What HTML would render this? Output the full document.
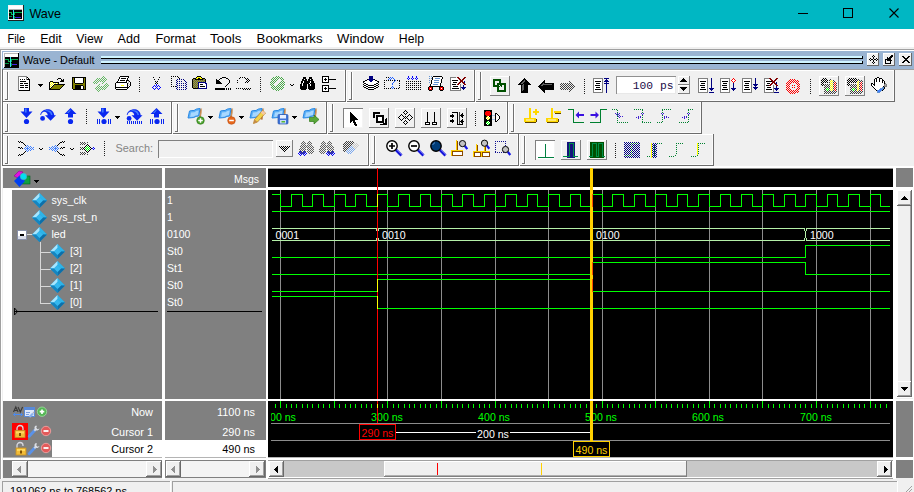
<!DOCTYPE html>
<html><head><meta charset="utf-8"><title>Wave</title>
<style>
html,body{margin:0;padding:0;background:#f0f0f0;overflow:hidden}
svg{display:block;font-family:"Liberation Sans",sans-serif}
svg rect,svg path,svg line,svg polygon,svg circle{shape-rendering:crispEdges}
svg .aa,svg .aa *{shape-rendering:geometricPrecision}
</style></head><body>
<svg width="914" height="492" viewBox="0 0 914 492">
<rect x="0" y="0" width="914" height="492" fill="#f0f0f0" />
<rect x="0" y="0" width="914" height="29" fill="#00b7c3" />
<rect x="8" y="5" width="16" height="16" fill="#202020" />
<rect x="8" y="5" width="15" height="15" fill="#f4f4f4" />
<rect x="9" y="6" width="13" height="13" fill="#fff" />
<rect x="9" y="10" width="13" height="9" fill="#000" />
<rect x="9" y="9" width="13" height="1" fill="#b0b0b0" />
<rect x="9" y="12" width="3" height="1" fill="#00b050" />
<rect x="11" y="12" width="1" height="3" fill="#00b050" />
<rect x="11" y="14" width="4" height="1" fill="#00b050" />
<rect x="14" y="12" width="1" height="3" fill="#00b050" />
<rect x="14" y="12" width="8" height="1" fill="#00b050" />
<rect x="9" y="16" width="3" height="1" fill="#009040" />
<rect x="14" y="16" width="1" height="3" fill="#009040" />
<rect x="13" y="10" width="1" height="9" fill="#30e0f0" />
<rect x="15" y="17" width="6" height="1" fill="#4020e0" />
<text x="29.4" y="18.3" font-size="12.6" fill="#000" text-anchor="start" >Wave</text>
<rect x="798" y="13" width="10" height="1" fill="#000" />
<rect x="843.5" y="8.5" width="9" height="9" fill="none" stroke="#000" stroke-width="1"/>
<path class="aa" d="M889.500 8.500 L898.500 17.500 M898.500 8.500 L889.500 17.500" stroke="#000" stroke-width="1.1" fill="none"/>
<rect x="0" y="29" width="914" height="18" fill="#fff" />
<text x="7.5" y="43" font-size="12" fill="#000" text-anchor="start" textLength="17.6" lengthAdjust="spacingAndGlyphs">File</text>
<text x="40.3" y="43" font-size="12" fill="#000" text-anchor="start" textLength="21.4" lengthAdjust="spacingAndGlyphs">Edit</text>
<text x="76.2" y="43" font-size="12" fill="#000" text-anchor="start" textLength="26.4" lengthAdjust="spacingAndGlyphs">View</text>
<text x="117.5" y="43" font-size="12" fill="#000" text-anchor="start" textLength="22.4" lengthAdjust="spacingAndGlyphs">Add</text>
<text x="155.5" y="43" font-size="12" fill="#000" text-anchor="start" textLength="40.3" lengthAdjust="spacingAndGlyphs">Format</text>
<text x="210.1" y="43" font-size="12" fill="#000" text-anchor="start" textLength="31.4" lengthAdjust="spacingAndGlyphs">Tools</text>
<text x="256.6" y="43" font-size="12" fill="#000" text-anchor="start" textLength="65.9" lengthAdjust="spacingAndGlyphs">Bookmarks</text>
<text x="337.1" y="43" font-size="12" fill="#000" text-anchor="start" textLength="46.6" lengthAdjust="spacingAndGlyphs">Window</text>
<text x="398.8" y="43" font-size="12" fill="#000" text-anchor="start" textLength="25.2" lengthAdjust="spacingAndGlyphs">Help</text>
<rect x="0" y="49" width="914" height="1" fill="#a0a0a0" />
<rect x="0" y="50" width="914" height="1" fill="#fff" />
<rect x="0" y="49" width="1" height="431" fill="#a0a0a0" />
<rect x="1" y="50" width="1" height="430" fill="#fff" />
<rect x="2" y="51" width="912" height="18" fill="#9ab4d2" />
<rect x="3" y="52" width="16" height="16" fill="#fff" />
<rect x="18" y="53" width="1" height="15" fill="#000" />
<rect x="4" y="67" width="15" height="1" fill="#000" />
<rect x="4" y="53" width="14" height="1" fill="#b8b8b8" />
<rect x="4" y="53" width="1" height="14" fill="#b8b8b8" />
<rect x="5" y="57" width="13" height="10" fill="#000" />
<rect x="5" y="59" width="4" height="1" fill="#00b050" />
<rect x="8" y="59" width="1" height="3" fill="#00b050" />
<rect x="8" y="61" width="4" height="1" fill="#00b050" />
<rect x="11" y="59" width="1" height="3" fill="#00b050" />
<rect x="11" y="59" width="7" height="1" fill="#00b050" />
<rect x="5" y="63" width="4" height="1" fill="#009040" />
<rect x="11" y="63" width="1" height="3" fill="#009040" />
<rect x="10" y="57" width="1" height="10" fill="#30e0f0" />
<rect x="12" y="64" width="5" height="1" fill="#4020e0" />
<text x="23" y="64" font-size="10.9" fill="#000" text-anchor="start" >Wave - Default</text>
<rect x="101" y="56" width="762" height="1" fill="#d0f4ff" />
<rect x="101" y="57" width="762" height="1" fill="#d0f4ff" />
<rect x="101" y="58" width="762" height="1" fill="#000" />
<rect x="101" y="61" width="762" height="1" fill="#d0f4ff" />
<rect x="101" y="62" width="762" height="1" fill="#d0f4ff" />
<rect x="101" y="63" width="762" height="1" fill="#000" />
<rect x="862" y="56" width="1" height="3" fill="#000" />
<rect x="862" y="61" width="1" height="3" fill="#000" />
<rect x="867" y="53" width="12" height="13" fill="#f0f0f0" />
<rect x="867" y="53" width="12" height="1" fill="#fff" />
<rect x="867" y="53" width="1" height="13" fill="#fff" />
<rect x="867" y="65" width="12" height="1" fill="#696969" />
<rect x="878" y="53" width="1" height="13" fill="#696969" />
<rect x="883" y="53" width="12" height="13" fill="#f0f0f0" />
<rect x="883" y="53" width="12" height="1" fill="#fff" />
<rect x="883" y="53" width="1" height="13" fill="#fff" />
<rect x="883" y="65" width="12" height="1" fill="#696969" />
<rect x="894" y="53" width="1" height="13" fill="#696969" />
<rect x="899" y="53" width="13" height="13" fill="#f0f0f0" />
<rect x="899" y="53" width="13" height="1" fill="#fff" />
<rect x="899" y="53" width="1" height="13" fill="#fff" />
<rect x="899" y="65" width="13" height="1" fill="#696969" />
<rect x="911" y="53" width="1" height="13" fill="#696969" />
<rect x="873" y="55" width="1" height="1" fill="#000000"/>
<rect x="872" y="56" width="1" height="1" fill="#000000"/>
<rect x="874" y="56" width="1" height="1" fill="#000000"/>
<rect x="873" y="57" width="1" height="1" fill="#000000"/>
<rect x="870" y="58" width="1" height="1" fill="#000000"/>
<rect x="873" y="58" width="1" height="1" fill="#000000"/>
<rect x="876" y="58" width="1" height="1" fill="#000000"/>
<rect x="869" y="59" width="1" height="1" fill="#000000"/>
<rect x="871" y="59" width="2" height="1" fill="#000000"/>
<rect x="874" y="59" width="2" height="1" fill="#000000"/>
<rect x="877" y="59" width="1" height="1" fill="#000000"/>
<rect x="870" y="60" width="1" height="1" fill="#000000"/>
<rect x="873" y="60" width="1" height="1" fill="#000000"/>
<rect x="876" y="60" width="1" height="1" fill="#000000"/>
<rect x="873" y="61" width="1" height="1" fill="#000000"/>
<rect x="872" y="62" width="1" height="1" fill="#000000"/>
<rect x="874" y="62" width="1" height="1" fill="#000000"/>
<rect x="873" y="63" width="1" height="1" fill="#000000"/>
<rect x="891" y="55" width="2" height="1" fill="#000000"/>
<rect x="890" y="56" width="3" height="1" fill="#000000"/>
<rect x="887" y="57" width="1" height="1" fill="#000000"/>
<rect x="889" y="57" width="3" height="1" fill="#000000"/>
<rect x="887" y="58" width="4" height="1" fill="#000000"/>
<rect x="885" y="59" width="6" height="1" fill="#000000"/>
<rect x="885" y="60" width="1" height="1" fill="#000000"/>
<rect x="887" y="60" width="5" height="1" fill="#000000"/>
<rect x="885" y="61" width="1" height="1" fill="#000000"/>
<rect x="890" y="61" width="1" height="1" fill="#000000"/>
<rect x="885" y="62" width="1" height="1" fill="#000000"/>
<rect x="890" y="62" width="1" height="1" fill="#000000"/>
<rect x="885" y="63" width="6" height="1" fill="#000000"/>
<rect x="902" y="56" width="2" height="1" fill="#000000"/>
<rect x="908" y="56" width="2" height="1" fill="#000000"/>
<rect x="903" y="57" width="2" height="1" fill="#000000"/>
<rect x="907" y="57" width="2" height="1" fill="#000000"/>
<rect x="904" y="58" width="4" height="1" fill="#000000"/>
<rect x="905" y="59" width="2" height="1" fill="#000000"/>
<rect x="904" y="60" width="4" height="1" fill="#000000"/>
<rect x="903" y="61" width="2" height="1" fill="#000000"/>
<rect x="907" y="61" width="2" height="1" fill="#000000"/>
<rect x="902" y="62" width="2" height="1" fill="#000000"/>
<rect x="908" y="62" width="2" height="1" fill="#000000"/>
<rect x="2" y="69" width="912" height="1" fill="#a0a0a0" />
<rect x="2" y="69" width="1" height="97" fill="#6c6c6c" />
<rect x="3" y="70" width="343" height="1" fill="#fff" />
<rect x="3" y="70" width="1" height="32" fill="#fff" />
<rect x="4" y="100" width="341" height="1" fill="#fafafa" />
<rect x="344" y="71" width="1" height="30" fill="#fafafa" />
<rect x="3" y="101" width="343" height="1" fill="#6c6c6c" />
<rect x="345" y="70" width="1" height="32" fill="#6c6c6c" />
<rect x="4" y="72" width="3" height="27" fill="#f8f8f8" />
<rect x="7" y="72" width="1" height="28" fill="#707070" />
<rect x="8" y="72" width="1" height="28" fill="#fff" />
<rect x="5" y="99" width="3" height="1" fill="#707070" />
<rect x="346" y="70" width="129" height="1" fill="#fff" />
<rect x="346" y="70" width="1" height="32" fill="#fff" />
<rect x="347" y="100" width="127" height="1" fill="#fafafa" />
<rect x="473" y="71" width="1" height="30" fill="#fafafa" />
<rect x="347" y="101" width="128" height="1" fill="#6c6c6c" />
<rect x="474" y="70" width="1" height="32" fill="#6c6c6c" />
<rect x="348" y="72" width="3" height="27" fill="#f8f8f8" />
<rect x="351" y="72" width="1" height="28" fill="#707070" />
<rect x="352" y="72" width="1" height="28" fill="#fff" />
<rect x="349" y="99" width="3" height="1" fill="#707070" />
<rect x="475" y="70" width="420" height="1" fill="#fff" />
<rect x="475" y="70" width="1" height="32" fill="#fff" />
<rect x="476" y="100" width="418" height="1" fill="#fafafa" />
<rect x="893" y="71" width="1" height="30" fill="#fafafa" />
<rect x="476" y="101" width="419" height="1" fill="#6c6c6c" />
<rect x="894" y="70" width="1" height="32" fill="#6c6c6c" />
<rect x="477" y="72" width="3" height="27" fill="#f8f8f8" />
<rect x="480" y="72" width="1" height="28" fill="#707070" />
<rect x="481" y="72" width="1" height="28" fill="#fff" />
<rect x="478" y="99" width="3" height="1" fill="#707070" />
<rect x="3" y="102" width="169" height="1" fill="#fff" />
<rect x="3" y="102" width="1" height="32" fill="#fff" />
<rect x="4" y="132" width="167" height="1" fill="#fafafa" />
<rect x="170" y="103" width="1" height="30" fill="#fafafa" />
<rect x="3" y="133" width="169" height="1" fill="#6c6c6c" />
<rect x="171" y="102" width="1" height="32" fill="#6c6c6c" />
<rect x="4" y="104" width="3" height="27" fill="#f8f8f8" />
<rect x="7" y="104" width="1" height="28" fill="#707070" />
<rect x="8" y="104" width="1" height="28" fill="#fff" />
<rect x="5" y="131" width="3" height="1" fill="#707070" />
<rect x="172" y="102" width="155" height="1" fill="#fff" />
<rect x="172" y="102" width="1" height="32" fill="#fff" />
<rect x="173" y="132" width="153" height="1" fill="#fafafa" />
<rect x="325" y="103" width="1" height="30" fill="#fafafa" />
<rect x="173" y="133" width="154" height="1" fill="#6c6c6c" />
<rect x="326" y="102" width="1" height="32" fill="#6c6c6c" />
<rect x="174" y="104" width="3" height="27" fill="#f8f8f8" />
<rect x="177" y="104" width="1" height="28" fill="#707070" />
<rect x="178" y="104" width="1" height="28" fill="#fff" />
<rect x="175" y="131" width="3" height="1" fill="#707070" />
<rect x="327" y="102" width="181" height="1" fill="#fff" />
<rect x="327" y="102" width="1" height="32" fill="#fff" />
<rect x="328" y="132" width="179" height="1" fill="#fafafa" />
<rect x="506" y="103" width="1" height="30" fill="#fafafa" />
<rect x="328" y="133" width="180" height="1" fill="#6c6c6c" />
<rect x="507" y="102" width="1" height="32" fill="#6c6c6c" />
<rect x="329" y="104" width="3" height="27" fill="#f8f8f8" />
<rect x="332" y="104" width="1" height="28" fill="#707070" />
<rect x="333" y="104" width="1" height="28" fill="#fff" />
<rect x="330" y="131" width="3" height="1" fill="#707070" />
<rect x="508" y="102" width="194" height="1" fill="#fff" />
<rect x="508" y="102" width="1" height="32" fill="#fff" />
<rect x="509" y="132" width="192" height="1" fill="#fafafa" />
<rect x="700" y="103" width="1" height="30" fill="#fafafa" />
<rect x="509" y="133" width="193" height="1" fill="#6c6c6c" />
<rect x="701" y="102" width="1" height="32" fill="#6c6c6c" />
<rect x="510" y="104" width="3" height="27" fill="#f8f8f8" />
<rect x="513" y="104" width="1" height="28" fill="#707070" />
<rect x="514" y="104" width="1" height="28" fill="#fff" />
<rect x="511" y="131" width="3" height="1" fill="#707070" />
<rect x="3" y="134" width="366" height="1" fill="#fff" />
<rect x="3" y="134" width="1" height="32" fill="#fff" />
<rect x="4" y="164" width="364" height="1" fill="#fafafa" />
<rect x="367" y="135" width="1" height="30" fill="#fafafa" />
<rect x="3" y="165" width="366" height="1" fill="#6c6c6c" />
<rect x="368" y="134" width="1" height="32" fill="#6c6c6c" />
<rect x="4" y="136" width="3" height="27" fill="#f8f8f8" />
<rect x="7" y="136" width="1" height="28" fill="#707070" />
<rect x="8" y="136" width="1" height="28" fill="#fff" />
<rect x="5" y="163" width="3" height="1" fill="#707070" />
<rect x="369" y="134" width="150" height="1" fill="#fff" />
<rect x="369" y="134" width="1" height="32" fill="#fff" />
<rect x="370" y="164" width="148" height="1" fill="#fafafa" />
<rect x="517" y="135" width="1" height="30" fill="#fafafa" />
<rect x="370" y="165" width="149" height="1" fill="#6c6c6c" />
<rect x="518" y="134" width="1" height="32" fill="#6c6c6c" />
<rect x="371" y="136" width="3" height="27" fill="#f8f8f8" />
<rect x="374" y="136" width="1" height="28" fill="#707070" />
<rect x="375" y="136" width="1" height="28" fill="#fff" />
<rect x="372" y="163" width="3" height="1" fill="#707070" />
<rect x="519" y="134" width="195" height="1" fill="#fff" />
<rect x="519" y="134" width="1" height="32" fill="#fff" />
<rect x="520" y="164" width="193" height="1" fill="#fafafa" />
<rect x="712" y="135" width="1" height="30" fill="#fafafa" />
<rect x="520" y="165" width="194" height="1" fill="#6c6c6c" />
<rect x="713" y="134" width="1" height="32" fill="#6c6c6c" />
<rect x="521" y="136" width="3" height="27" fill="#f8f8f8" />
<rect x="524" y="136" width="1" height="28" fill="#707070" />
<rect x="525" y="136" width="1" height="28" fill="#fff" />
<rect x="522" y="163" width="3" height="1" fill="#707070" />
<rect x="139" y="77" width="1" height="1" fill="#202020" />
<rect x="139" y="79" width="1" height="1" fill="#202020" />
<rect x="139" y="81" width="1" height="1" fill="#202020" />
<rect x="139" y="83" width="1" height="1" fill="#202020" />
<rect x="139" y="85" width="1" height="1" fill="#202020" />
<rect x="139" y="87" width="1" height="1" fill="#202020" />
<rect x="139" y="89" width="1" height="1" fill="#202020" />
<rect x="139" y="91" width="1" height="1" fill="#202020" />
<rect x="260" y="77" width="1" height="1" fill="#202020" />
<rect x="260" y="79" width="1" height="1" fill="#202020" />
<rect x="260" y="81" width="1" height="1" fill="#202020" />
<rect x="260" y="83" width="1" height="1" fill="#202020" />
<rect x="260" y="85" width="1" height="1" fill="#202020" />
<rect x="260" y="87" width="1" height="1" fill="#202020" />
<rect x="260" y="89" width="1" height="1" fill="#202020" />
<rect x="260" y="91" width="1" height="1" fill="#202020" />
<rect x="584" y="79" width="1" height="1" fill="#202020" />
<rect x="584" y="81" width="1" height="1" fill="#202020" />
<rect x="584" y="83" width="1" height="1" fill="#202020" />
<rect x="584" y="85" width="1" height="1" fill="#202020" />
<rect x="584" y="87" width="1" height="1" fill="#202020" />
<rect x="584" y="89" width="1" height="1" fill="#202020" />
<rect x="584" y="91" width="1" height="1" fill="#202020" />
<rect x="584" y="93" width="1" height="1" fill="#202020" />
<rect x="810" y="79" width="1" height="1" fill="#202020" />
<rect x="810" y="81" width="1" height="1" fill="#202020" />
<rect x="810" y="83" width="1" height="1" fill="#202020" />
<rect x="810" y="85" width="1" height="1" fill="#202020" />
<rect x="810" y="87" width="1" height="1" fill="#202020" />
<rect x="810" y="89" width="1" height="1" fill="#202020" />
<rect x="810" y="91" width="1" height="1" fill="#202020" />
<rect x="810" y="93" width="1" height="1" fill="#202020" />
<rect x="86" y="109" width="1" height="1" fill="#202020" />
<rect x="86" y="111" width="1" height="1" fill="#202020" />
<rect x="86" y="113" width="1" height="1" fill="#202020" />
<rect x="86" y="115" width="1" height="1" fill="#202020" />
<rect x="86" y="117" width="1" height="1" fill="#202020" />
<rect x="86" y="119" width="1" height="1" fill="#202020" />
<rect x="86" y="121" width="1" height="1" fill="#202020" />
<rect x="86" y="123" width="1" height="1" fill="#202020" />
<rect x="475" y="111" width="1" height="1" fill="#202020" />
<rect x="475" y="113" width="1" height="1" fill="#202020" />
<rect x="475" y="115" width="1" height="1" fill="#202020" />
<rect x="475" y="117" width="1" height="1" fill="#202020" />
<rect x="475" y="119" width="1" height="1" fill="#202020" />
<rect x="475" y="121" width="1" height="1" fill="#202020" />
<rect x="475" y="123" width="1" height="1" fill="#202020" />
<rect x="475" y="125" width="1" height="1" fill="#202020" />
<rect x="104" y="141" width="1" height="1" fill="#202020" />
<rect x="104" y="143" width="1" height="1" fill="#202020" />
<rect x="104" y="145" width="1" height="1" fill="#202020" />
<rect x="104" y="147" width="1" height="1" fill="#202020" />
<rect x="104" y="149" width="1" height="1" fill="#202020" />
<rect x="104" y="151" width="1" height="1" fill="#202020" />
<rect x="104" y="153" width="1" height="1" fill="#202020" />
<rect x="104" y="155" width="1" height="1" fill="#202020" />
<rect x="615" y="143" width="1" height="1" fill="#202020" />
<rect x="615" y="145" width="1" height="1" fill="#202020" />
<rect x="615" y="147" width="1" height="1" fill="#202020" />
<rect x="615" y="149" width="1" height="1" fill="#202020" />
<rect x="615" y="151" width="1" height="1" fill="#202020" />
<rect x="615" y="153" width="1" height="1" fill="#202020" />
<rect x="615" y="155" width="1" height="1" fill="#202020" />
<rect x="615" y="157" width="1" height="1" fill="#202020" />
<rect x="18" y="76" width="9" height="1" fill="#808080"/>
<rect x="18" y="77" width="1" height="1" fill="#808080"/>
<rect x="19" y="77" width="7" height="1" fill="#ffffff"/>
<rect x="26" y="77" width="1" height="1" fill="#808080"/>
<rect x="27" y="77" width="1" height="1" fill="#000000"/>
<rect x="18" y="78" width="1" height="1" fill="#808080"/>
<rect x="19" y="78" width="7" height="1" fill="#ffffff"/>
<rect x="26" y="78" width="1" height="1" fill="#808080"/>
<rect x="27" y="78" width="1" height="1" fill="#ffffff"/>
<rect x="28" y="78" width="1" height="1" fill="#000000"/>
<rect x="18" y="79" width="1" height="1" fill="#808080"/>
<rect x="19" y="79" width="1" height="1" fill="#ffffff"/>
<rect x="20" y="79" width="1" height="1" fill="#000000"/>
<rect x="21" y="79" width="1" height="1" fill="#ffffff"/>
<rect x="22" y="79" width="1" height="1" fill="#000000"/>
<rect x="23" y="79" width="1" height="1" fill="#ffffff"/>
<rect x="24" y="79" width="1" height="1" fill="#000000"/>
<rect x="25" y="79" width="1" height="1" fill="#ffffff"/>
<rect x="26" y="79" width="1" height="1" fill="#808080"/>
<rect x="27" y="79" width="3" height="1" fill="#000000"/>
<rect x="18" y="80" width="1" height="1" fill="#808080"/>
<rect x="19" y="80" width="10" height="1" fill="#ffffff"/>
<rect x="29" y="80" width="1" height="1" fill="#000000"/>
<rect x="18" y="81" width="1" height="1" fill="#808080"/>
<rect x="19" y="81" width="1" height="1" fill="#ffffff"/>
<rect x="20" y="81" width="6" height="1" fill="#000000"/>
<rect x="26" y="81" width="3" height="1" fill="#ffffff"/>
<rect x="29" y="81" width="1" height="1" fill="#000000"/>
<rect x="18" y="82" width="1" height="1" fill="#808080"/>
<rect x="19" y="82" width="10" height="1" fill="#ffffff"/>
<rect x="29" y="82" width="1" height="1" fill="#000000"/>
<rect x="18" y="83" width="1" height="1" fill="#808080"/>
<rect x="19" y="83" width="1" height="1" fill="#ffffff"/>
<rect x="20" y="83" width="3" height="1" fill="#000000"/>
<rect x="23" y="83" width="1" height="1" fill="#ffffff"/>
<rect x="24" y="83" width="4" height="1" fill="#000000"/>
<rect x="28" y="83" width="1" height="1" fill="#ffffff"/>
<rect x="29" y="83" width="1" height="1" fill="#000000"/>
<rect x="18" y="84" width="1" height="1" fill="#808080"/>
<rect x="19" y="84" width="10" height="1" fill="#ffffff"/>
<rect x="29" y="84" width="1" height="1" fill="#000000"/>
<rect x="18" y="85" width="1" height="1" fill="#808080"/>
<rect x="19" y="85" width="1" height="1" fill="#ffffff"/>
<rect x="20" y="85" width="4" height="1" fill="#000000"/>
<rect x="24" y="85" width="1" height="1" fill="#ffffff"/>
<rect x="25" y="85" width="3" height="1" fill="#000000"/>
<rect x="28" y="85" width="1" height="1" fill="#ffffff"/>
<rect x="29" y="85" width="1" height="1" fill="#000000"/>
<rect x="18" y="86" width="1" height="1" fill="#808080"/>
<rect x="19" y="86" width="10" height="1" fill="#ffffff"/>
<rect x="29" y="86" width="1" height="1" fill="#000000"/>
<rect x="18" y="87" width="1" height="1" fill="#808080"/>
<rect x="19" y="87" width="1" height="1" fill="#ffffff"/>
<rect x="20" y="87" width="4" height="1" fill="#000000"/>
<rect x="24" y="87" width="1" height="1" fill="#ffffff"/>
<rect x="25" y="87" width="3" height="1" fill="#000000"/>
<rect x="28" y="87" width="1" height="1" fill="#ffffff"/>
<rect x="29" y="87" width="1" height="1" fill="#000000"/>
<rect x="18" y="88" width="1" height="1" fill="#808080"/>
<rect x="19" y="88" width="10" height="1" fill="#ffffff"/>
<rect x="29" y="88" width="1" height="1" fill="#000000"/>
<rect x="18" y="89" width="1" height="1" fill="#808080"/>
<rect x="19" y="89" width="10" height="1" fill="#ffffff"/>
<rect x="29" y="89" width="1" height="1" fill="#000000"/>
<rect x="18" y="90" width="1" height="1" fill="#808080"/>
<rect x="19" y="90" width="11" height="1" fill="#000000"/>
<rect x="38" y="84" width="5" height="1" fill="#000" />
<rect x="39" y="85" width="3" height="1" fill="#000" />
<rect x="40" y="86" width="1" height="1" fill="#000" />
<rect x="58" y="78" width="3" height="1" fill="#000000"/>
<rect x="57" y="79" width="1" height="1" fill="#000000"/>
<rect x="61" y="79" width="1" height="1" fill="#000000"/>
<rect x="63" y="79" width="1" height="1" fill="#000000"/>
<rect x="61" y="80" width="3" height="1" fill="#000000"/>
<rect x="50" y="81" width="3" height="1" fill="#000000"/>
<rect x="60" y="81" width="4" height="1" fill="#000000"/>
<rect x="49" y="82" width="1" height="1" fill="#000000"/>
<rect x="50" y="82" width="1" height="1" fill="#ffff00"/>
<rect x="51" y="82" width="1" height="1" fill="#ffffff"/>
<rect x="52" y="82" width="1" height="1" fill="#ffff00"/>
<rect x="53" y="82" width="6" height="1" fill="#000000"/>
<rect x="49" y="83" width="1" height="1" fill="#000000"/>
<rect x="50" y="83" width="1" height="1" fill="#ffffff"/>
<rect x="51" y="83" width="1" height="1" fill="#ffff00"/>
<rect x="52" y="83" width="1" height="1" fill="#ffffff"/>
<rect x="53" y="83" width="1" height="1" fill="#ffff00"/>
<rect x="54" y="83" width="1" height="1" fill="#ffffff"/>
<rect x="55" y="83" width="1" height="1" fill="#ffff00"/>
<rect x="56" y="83" width="1" height="1" fill="#ffffff"/>
<rect x="57" y="83" width="1" height="1" fill="#ffff00"/>
<rect x="58" y="83" width="1" height="1" fill="#000000"/>
<rect x="49" y="84" width="1" height="1" fill="#000000"/>
<rect x="50" y="84" width="1" height="1" fill="#ffff00"/>
<rect x="51" y="84" width="1" height="1" fill="#ffffff"/>
<rect x="52" y="84" width="1" height="1" fill="#ffff00"/>
<rect x="53" y="84" width="1" height="1" fill="#ffffff"/>
<rect x="54" y="84" width="11" height="1" fill="#000000"/>
<rect x="49" y="85" width="1" height="1" fill="#000000"/>
<rect x="50" y="85" width="1" height="1" fill="#ffffff"/>
<rect x="51" y="85" width="1" height="1" fill="#ffff00"/>
<rect x="52" y="85" width="1" height="1" fill="#ffffff"/>
<rect x="53" y="85" width="1" height="1" fill="#000000"/>
<rect x="54" y="85" width="9" height="1" fill="#808000"/>
<rect x="63" y="85" width="1" height="1" fill="#000000"/>
<rect x="49" y="86" width="1" height="1" fill="#000000"/>
<rect x="50" y="86" width="1" height="1" fill="#ffff00"/>
<rect x="51" y="86" width="1" height="1" fill="#ffffff"/>
<rect x="52" y="86" width="1" height="1" fill="#000000"/>
<rect x="53" y="86" width="9" height="1" fill="#808000"/>
<rect x="62" y="86" width="1" height="1" fill="#000000"/>
<rect x="49" y="87" width="1" height="1" fill="#000000"/>
<rect x="50" y="87" width="1" height="1" fill="#ffffff"/>
<rect x="51" y="87" width="1" height="1" fill="#000000"/>
<rect x="52" y="87" width="9" height="1" fill="#808000"/>
<rect x="61" y="87" width="1" height="1" fill="#000000"/>
<rect x="49" y="88" width="2" height="1" fill="#000000"/>
<rect x="51" y="88" width="9" height="1" fill="#808000"/>
<rect x="60" y="88" width="1" height="1" fill="#000000"/>
<rect x="49" y="89" width="11" height="1" fill="#000000"/>
<rect x="72" y="77" width="14" height="1" fill="#000000"/>
<rect x="72" y="78" width="1" height="1" fill="#000000"/>
<rect x="73" y="78" width="1" height="1" fill="#808000"/>
<rect x="74" y="78" width="1" height="1" fill="#000000"/>
<rect x="75" y="78" width="8" height="1" fill="#ffffff"/>
<rect x="83" y="78" width="1" height="1" fill="#000000"/>
<rect x="84" y="78" width="1" height="1" fill="#808000"/>
<rect x="85" y="78" width="1" height="1" fill="#000000"/>
<rect x="72" y="79" width="1" height="1" fill="#000000"/>
<rect x="73" y="79" width="1" height="1" fill="#808000"/>
<rect x="74" y="79" width="1" height="1" fill="#000000"/>
<rect x="75" y="79" width="8" height="1" fill="#ffffff"/>
<rect x="83" y="79" width="1" height="1" fill="#000000"/>
<rect x="84" y="79" width="1" height="1" fill="#808000"/>
<rect x="85" y="79" width="1" height="1" fill="#000000"/>
<rect x="72" y="80" width="1" height="1" fill="#000000"/>
<rect x="73" y="80" width="1" height="1" fill="#808000"/>
<rect x="74" y="80" width="1" height="1" fill="#000000"/>
<rect x="75" y="80" width="8" height="1" fill="#ffffff"/>
<rect x="83" y="80" width="1" height="1" fill="#000000"/>
<rect x="84" y="80" width="1" height="1" fill="#808000"/>
<rect x="85" y="80" width="1" height="1" fill="#000000"/>
<rect x="72" y="81" width="1" height="1" fill="#000000"/>
<rect x="73" y="81" width="1" height="1" fill="#808000"/>
<rect x="74" y="81" width="1" height="1" fill="#000000"/>
<rect x="75" y="81" width="8" height="1" fill="#ffffff"/>
<rect x="83" y="81" width="1" height="1" fill="#000000"/>
<rect x="84" y="81" width="1" height="1" fill="#808000"/>
<rect x="85" y="81" width="1" height="1" fill="#000000"/>
<rect x="72" y="82" width="1" height="1" fill="#000000"/>
<rect x="73" y="82" width="1" height="1" fill="#808000"/>
<rect x="74" y="82" width="1" height="1" fill="#000000"/>
<rect x="75" y="82" width="8" height="1" fill="#ffffff"/>
<rect x="83" y="82" width="1" height="1" fill="#000000"/>
<rect x="84" y="82" width="1" height="1" fill="#808000"/>
<rect x="85" y="82" width="1" height="1" fill="#000000"/>
<rect x="72" y="83" width="1" height="1" fill="#000000"/>
<rect x="73" y="83" width="2" height="1" fill="#808000"/>
<rect x="75" y="83" width="8" height="1" fill="#000000"/>
<rect x="83" y="83" width="2" height="1" fill="#808000"/>
<rect x="85" y="83" width="1" height="1" fill="#000000"/>
<rect x="72" y="84" width="1" height="1" fill="#000000"/>
<rect x="73" y="84" width="12" height="1" fill="#808000"/>
<rect x="85" y="84" width="1" height="1" fill="#000000"/>
<rect x="72" y="85" width="1" height="1" fill="#000000"/>
<rect x="73" y="85" width="2" height="1" fill="#808000"/>
<rect x="75" y="85" width="8" height="1" fill="#000000"/>
<rect x="83" y="85" width="2" height="1" fill="#808000"/>
<rect x="85" y="85" width="1" height="1" fill="#000000"/>
<rect x="72" y="86" width="1" height="1" fill="#000000"/>
<rect x="73" y="86" width="2" height="1" fill="#808000"/>
<rect x="75" y="86" width="6" height="1" fill="#000000"/>
<rect x="81" y="86" width="2" height="1" fill="#ffffff"/>
<rect x="83" y="86" width="1" height="1" fill="#000000"/>
<rect x="84" y="86" width="1" height="1" fill="#808000"/>
<rect x="85" y="86" width="1" height="1" fill="#000000"/>
<rect x="72" y="87" width="1" height="1" fill="#000000"/>
<rect x="73" y="87" width="2" height="1" fill="#808000"/>
<rect x="75" y="87" width="6" height="1" fill="#000000"/>
<rect x="81" y="87" width="2" height="1" fill="#ffffff"/>
<rect x="83" y="87" width="1" height="1" fill="#000000"/>
<rect x="84" y="87" width="1" height="1" fill="#808000"/>
<rect x="85" y="87" width="1" height="1" fill="#000000"/>
<rect x="72" y="88" width="1" height="1" fill="#000000"/>
<rect x="73" y="88" width="2" height="1" fill="#808000"/>
<rect x="75" y="88" width="6" height="1" fill="#000000"/>
<rect x="81" y="88" width="2" height="1" fill="#ffffff"/>
<rect x="83" y="88" width="1" height="1" fill="#000000"/>
<rect x="84" y="88" width="1" height="1" fill="#808000"/>
<rect x="85" y="88" width="1" height="1" fill="#000000"/>
<rect x="73" y="89" width="13" height="1" fill="#000000"/>
<rect x="103" y="76" width="1" height="1" fill="#66b866"/>
<rect x="102" y="77" width="1" height="1" fill="#66b866"/>
<rect x="104" y="77" width="1" height="1" fill="#66b866"/>
<rect x="97" y="78" width="1" height="1" fill="#66b866"/>
<rect x="99" y="78" width="1" height="1" fill="#66b866"/>
<rect x="101" y="78" width="1" height="1" fill="#66b866"/>
<rect x="103" y="78" width="1" height="1" fill="#66b866"/>
<rect x="105" y="78" width="1" height="1" fill="#66b866"/>
<rect x="96" y="79" width="1" height="1" fill="#66b866"/>
<rect x="98" y="79" width="1" height="1" fill="#66b866"/>
<rect x="100" y="79" width="1" height="1" fill="#66b866"/>
<rect x="102" y="79" width="1" height="1" fill="#66b866"/>
<rect x="104" y="79" width="1" height="1" fill="#66b866"/>
<rect x="106" y="79" width="1" height="1" fill="#66b866"/>
<rect x="95" y="80" width="1" height="1" fill="#66b866"/>
<rect x="97" y="80" width="1" height="1" fill="#66b866"/>
<rect x="99" y="80" width="1" height="1" fill="#66b866"/>
<rect x="101" y="80" width="1" height="1" fill="#66b866"/>
<rect x="103" y="80" width="1" height="1" fill="#66b866"/>
<rect x="105" y="80" width="1" height="1" fill="#66b866"/>
<rect x="94" y="81" width="1" height="1" fill="#66b866"/>
<rect x="96" y="81" width="1" height="1" fill="#66b866"/>
<rect x="98" y="81" width="1" height="1" fill="#66b866"/>
<rect x="100" y="81" width="1" height="1" fill="#66b866"/>
<rect x="102" y="81" width="1" height="1" fill="#66b866"/>
<rect x="104" y="81" width="1" height="1" fill="#66b866"/>
<rect x="93" y="82" width="1" height="1" fill="#66b866"/>
<rect x="95" y="82" width="1" height="1" fill="#66b866"/>
<rect x="97" y="82" width="1" height="1" fill="#66b866"/>
<rect x="103" y="82" width="1" height="1" fill="#66b866"/>
<rect x="94" y="83" width="1" height="1" fill="#66b866"/>
<rect x="96" y="83" width="1" height="1" fill="#66b866"/>
<rect x="102" y="83" width="1" height="1" fill="#66b866"/>
<rect x="106" y="83" width="1" height="1" fill="#66b866"/>
<rect x="99" y="84" width="1" height="1" fill="#66b866"/>
<rect x="105" y="84" width="1" height="1" fill="#66b866"/>
<rect x="107" y="84" width="1" height="1" fill="#66b866"/>
<rect x="98" y="85" width="1" height="1" fill="#66b866"/>
<rect x="104" y="85" width="1" height="1" fill="#66b866"/>
<rect x="106" y="85" width="1" height="1" fill="#66b866"/>
<rect x="108" y="85" width="1" height="1" fill="#66b866"/>
<rect x="97" y="86" width="1" height="1" fill="#66b866"/>
<rect x="99" y="86" width="1" height="1" fill="#66b866"/>
<rect x="101" y="86" width="1" height="1" fill="#66b866"/>
<rect x="103" y="86" width="1" height="1" fill="#66b866"/>
<rect x="105" y="86" width="1" height="1" fill="#66b866"/>
<rect x="107" y="86" width="1" height="1" fill="#66b866"/>
<rect x="96" y="87" width="1" height="1" fill="#66b866"/>
<rect x="98" y="87" width="1" height="1" fill="#66b866"/>
<rect x="100" y="87" width="1" height="1" fill="#66b866"/>
<rect x="102" y="87" width="1" height="1" fill="#66b866"/>
<rect x="104" y="87" width="1" height="1" fill="#66b866"/>
<rect x="106" y="87" width="1" height="1" fill="#66b866"/>
<rect x="95" y="88" width="1" height="1" fill="#66b866"/>
<rect x="97" y="88" width="1" height="1" fill="#66b866"/>
<rect x="99" y="88" width="1" height="1" fill="#66b866"/>
<rect x="101" y="88" width="1" height="1" fill="#66b866"/>
<rect x="103" y="88" width="1" height="1" fill="#66b866"/>
<rect x="105" y="88" width="1" height="1" fill="#66b866"/>
<rect x="96" y="89" width="1" height="1" fill="#66b866"/>
<rect x="98" y="89" width="1" height="1" fill="#66b866"/>
<rect x="100" y="89" width="1" height="1" fill="#66b866"/>
<rect x="102" y="89" width="1" height="1" fill="#66b866"/>
<rect x="104" y="89" width="1" height="1" fill="#66b866"/>
<rect x="97" y="90" width="1" height="1" fill="#66b866"/>
<rect x="99" y="90" width="1" height="1" fill="#66b866"/>
<rect x="98" y="91" width="1" height="1" fill="#66b866"/>
<rect x="120" y="76" width="9" height="1" fill="#000000"/>
<rect x="119" y="77" width="1" height="1" fill="#000000"/>
<rect x="120" y="77" width="8" height="1" fill="#ffffff"/>
<rect x="128" y="77" width="1" height="1" fill="#000000"/>
<rect x="119" y="78" width="1" height="1" fill="#000000"/>
<rect x="120" y="78" width="1" height="1" fill="#ffffff"/>
<rect x="121" y="78" width="5" height="1" fill="#000000"/>
<rect x="126" y="78" width="1" height="1" fill="#ffffff"/>
<rect x="127" y="78" width="1" height="1" fill="#000000"/>
<rect x="118" y="79" width="1" height="1" fill="#000000"/>
<rect x="119" y="79" width="8" height="1" fill="#ffffff"/>
<rect x="127" y="79" width="1" height="1" fill="#000000"/>
<rect x="118" y="80" width="1" height="1" fill="#000000"/>
<rect x="119" y="80" width="1" height="1" fill="#ffffff"/>
<rect x="120" y="80" width="5" height="1" fill="#000000"/>
<rect x="125" y="80" width="1" height="1" fill="#ffffff"/>
<rect x="126" y="80" width="3" height="1" fill="#000000"/>
<rect x="117" y="81" width="1" height="1" fill="#000000"/>
<rect x="118" y="81" width="8" height="1" fill="#ffffff"/>
<rect x="126" y="81" width="1" height="1" fill="#000000"/>
<rect x="127" y="81" width="1" height="1" fill="#ffffff"/>
<rect x="128" y="81" width="1" height="1" fill="#c0c0c0"/>
<rect x="129" y="81" width="1" height="1" fill="#000000"/>
<rect x="116" y="82" width="11" height="1" fill="#000000"/>
<rect x="127" y="82" width="1" height="1" fill="#ffffff"/>
<rect x="128" y="82" width="1" height="1" fill="#c0c0c0"/>
<rect x="129" y="82" width="1" height="1" fill="#ffffff"/>
<rect x="130" y="82" width="1" height="1" fill="#000000"/>
<rect x="115" y="83" width="1" height="1" fill="#000000"/>
<rect x="116" y="83" width="11" height="1" fill="#ffffff"/>
<rect x="127" y="83" width="1" height="1" fill="#000000"/>
<rect x="128" y="83" width="1" height="1" fill="#c0c0c0"/>
<rect x="129" y="83" width="1" height="1" fill="#ffffff"/>
<rect x="130" y="83" width="1" height="1" fill="#000000"/>
<rect x="115" y="84" width="1" height="1" fill="#000000"/>
<rect x="116" y="84" width="11" height="1" fill="#ffffff"/>
<rect x="127" y="84" width="1" height="1" fill="#000000"/>
<rect x="128" y="84" width="1" height="1" fill="#ffffff"/>
<rect x="129" y="84" width="1" height="1" fill="#c0c0c0"/>
<rect x="130" y="84" width="1" height="1" fill="#000000"/>
<rect x="115" y="85" width="1" height="1" fill="#000000"/>
<rect x="116" y="85" width="5" height="1" fill="#ffffff"/>
<rect x="121" y="85" width="3" height="1" fill="#ffff00"/>
<rect x="124" y="85" width="3" height="1" fill="#ffffff"/>
<rect x="127" y="85" width="1" height="1" fill="#000000"/>
<rect x="128" y="85" width="1" height="1" fill="#c0c0c0"/>
<rect x="129" y="85" width="1" height="1" fill="#ffffff"/>
<rect x="130" y="85" width="1" height="1" fill="#000000"/>
<rect x="115" y="86" width="1" height="1" fill="#000000"/>
<rect x="116" y="86" width="11" height="1" fill="#ffffff"/>
<rect x="127" y="86" width="1" height="1" fill="#000000"/>
<rect x="128" y="86" width="1" height="1" fill="#ffffff"/>
<rect x="129" y="86" width="1" height="1" fill="#000000"/>
<rect x="115" y="87" width="14" height="1" fill="#000000"/>
<rect x="115" y="88" width="1" height="1" fill="#000000"/>
<rect x="116" y="88" width="11" height="1" fill="#ffffff"/>
<rect x="127" y="88" width="1" height="1" fill="#000000"/>
<rect x="116" y="89" width="11" height="1" fill="#000000"/>
<rect x="153" y="77" width="1" height="1" fill="#000000"/>
<rect x="159" y="77" width="1" height="1" fill="#000000"/>
<rect x="154" y="79" width="1" height="1" fill="#000000"/>
<rect x="158" y="79" width="1" height="1" fill="#000000"/>
<rect x="155" y="81" width="1" height="1" fill="#000000"/>
<rect x="157" y="81" width="1" height="1" fill="#000000"/>
<rect x="156" y="82" width="1" height="1" fill="#000000"/>
<rect x="155" y="83" width="1" height="1" fill="#000000"/>
<rect x="157" y="83" width="1" height="1" fill="#000000"/>
<rect x="156" y="84" width="1" height="1" fill="#0000ff"/>
<rect x="154" y="85" width="1" height="1" fill="#0000ff"/>
<rect x="156" y="85" width="1" height="1" fill="#0000ff"/>
<rect x="158" y="85" width="1" height="1" fill="#0000ff"/>
<rect x="153" y="86" width="1" height="1" fill="#0000ff"/>
<rect x="155" y="86" width="1" height="1" fill="#0000ff"/>
<rect x="157" y="86" width="1" height="1" fill="#0000ff"/>
<rect x="159" y="86" width="1" height="1" fill="#0000ff"/>
<rect x="152" y="87" width="1" height="1" fill="#0000ff"/>
<rect x="156" y="87" width="1" height="1" fill="#0000ff"/>
<rect x="160" y="87" width="1" height="1" fill="#0000ff"/>
<rect x="153" y="88" width="1" height="1" fill="#0000ff"/>
<rect x="155" y="88" width="1" height="1" fill="#0000ff"/>
<rect x="157" y="88" width="1" height="1" fill="#0000ff"/>
<rect x="159" y="88" width="1" height="1" fill="#0000ff"/>
<rect x="154" y="89" width="1" height="1" fill="#0000ff"/>
<rect x="158" y="89" width="1" height="1" fill="#0000ff"/>
<rect x="171" y="76" width="1" height="1" fill="#000000"/>
<rect x="173" y="76" width="1" height="1" fill="#000000"/>
<rect x="175" y="76" width="1" height="1" fill="#000000"/>
<rect x="177" y="76" width="1" height="1" fill="#000000"/>
<rect x="178" y="77" width="1" height="1" fill="#000000"/>
<rect x="171" y="78" width="1" height="1" fill="#000000"/>
<rect x="179" y="78" width="1" height="1" fill="#000000"/>
<rect x="177" y="79" width="1" height="1" fill="#000080"/>
<rect x="179" y="79" width="1" height="1" fill="#000080"/>
<rect x="181" y="79" width="1" height="1" fill="#000080"/>
<rect x="183" y="79" width="1" height="1" fill="#000080"/>
<rect x="171" y="80" width="1" height="1" fill="#000000"/>
<rect x="176" y="80" width="1" height="1" fill="#000080"/>
<rect x="184" y="80" width="1" height="1" fill="#000080"/>
<rect x="177" y="81" width="1" height="1" fill="#000080"/>
<rect x="179" y="81" width="1" height="1" fill="#000080"/>
<rect x="181" y="81" width="1" height="1" fill="#000080"/>
<rect x="185" y="81" width="1" height="1" fill="#000080"/>
<rect x="171" y="82" width="1" height="1" fill="#000000"/>
<rect x="176" y="82" width="1" height="1" fill="#000080"/>
<rect x="186" y="82" width="1" height="1" fill="#000080"/>
<rect x="177" y="83" width="1" height="1" fill="#000080"/>
<rect x="179" y="83" width="1" height="1" fill="#000080"/>
<rect x="181" y="83" width="1" height="1" fill="#000080"/>
<rect x="183" y="83" width="1" height="1" fill="#000080"/>
<rect x="185" y="83" width="1" height="1" fill="#000080"/>
<rect x="171" y="84" width="1" height="1" fill="#000000"/>
<rect x="176" y="84" width="1" height="1" fill="#000080"/>
<rect x="186" y="84" width="1" height="1" fill="#000080"/>
<rect x="177" y="85" width="1" height="1" fill="#000080"/>
<rect x="179" y="85" width="1" height="1" fill="#000080"/>
<rect x="181" y="85" width="1" height="1" fill="#000080"/>
<rect x="183" y="85" width="1" height="1" fill="#000080"/>
<rect x="185" y="85" width="1" height="1" fill="#000080"/>
<rect x="171" y="86" width="1" height="1" fill="#000000"/>
<rect x="173" y="86" width="1" height="1" fill="#000000"/>
<rect x="175" y="86" width="1" height="1" fill="#000000"/>
<rect x="176" y="86" width="1" height="1" fill="#000080"/>
<rect x="186" y="86" width="1" height="1" fill="#000080"/>
<rect x="177" y="87" width="1" height="1" fill="#000080"/>
<rect x="179" y="87" width="1" height="1" fill="#000080"/>
<rect x="181" y="87" width="1" height="1" fill="#000080"/>
<rect x="183" y="87" width="1" height="1" fill="#000080"/>
<rect x="185" y="87" width="1" height="1" fill="#000080"/>
<rect x="176" y="88" width="1" height="1" fill="#000080"/>
<rect x="186" y="88" width="1" height="1" fill="#000080"/>
<rect x="177" y="89" width="1" height="1" fill="#000080"/>
<rect x="179" y="89" width="1" height="1" fill="#000080"/>
<rect x="181" y="89" width="1" height="1" fill="#000080"/>
<rect x="183" y="89" width="1" height="1" fill="#000080"/>
<rect x="185" y="89" width="1" height="1" fill="#000080"/>
<rect x="197" y="76" width="4" height="1" fill="#000000"/>
<rect x="196" y="77" width="1" height="1" fill="#000000"/>
<rect x="197" y="77" width="4" height="1" fill="#ffff00"/>
<rect x="201" y="77" width="1" height="1" fill="#000000"/>
<rect x="193" y="78" width="3" height="1" fill="#000000"/>
<rect x="196" y="78" width="2" height="1" fill="#ffff00"/>
<rect x="198" y="78" width="2" height="1" fill="#000000"/>
<rect x="200" y="78" width="2" height="1" fill="#ffff00"/>
<rect x="202" y="78" width="3" height="1" fill="#000000"/>
<rect x="192" y="79" width="1" height="1" fill="#000000"/>
<rect x="193" y="79" width="1" height="1" fill="#808000"/>
<rect x="194" y="79" width="1" height="1" fill="#808080"/>
<rect x="195" y="79" width="8" height="1" fill="#000000"/>
<rect x="203" y="79" width="1" height="1" fill="#808000"/>
<rect x="204" y="79" width="1" height="1" fill="#808080"/>
<rect x="205" y="79" width="1" height="1" fill="#000000"/>
<rect x="192" y="80" width="1" height="1" fill="#000000"/>
<rect x="193" y="80" width="1" height="1" fill="#808080"/>
<rect x="194" y="80" width="1" height="1" fill="#808000"/>
<rect x="195" y="80" width="1" height="1" fill="#808080"/>
<rect x="196" y="80" width="1" height="1" fill="#808000"/>
<rect x="197" y="80" width="1" height="1" fill="#808080"/>
<rect x="198" y="80" width="1" height="1" fill="#808000"/>
<rect x="199" y="80" width="1" height="1" fill="#808080"/>
<rect x="200" y="80" width="1" height="1" fill="#808000"/>
<rect x="201" y="80" width="1" height="1" fill="#808080"/>
<rect x="202" y="80" width="1" height="1" fill="#808000"/>
<rect x="203" y="80" width="1" height="1" fill="#808080"/>
<rect x="204" y="80" width="1" height="1" fill="#808000"/>
<rect x="205" y="80" width="1" height="1" fill="#000000"/>
<rect x="192" y="81" width="1" height="1" fill="#000000"/>
<rect x="193" y="81" width="1" height="1" fill="#808000"/>
<rect x="194" y="81" width="1" height="1" fill="#808080"/>
<rect x="195" y="81" width="1" height="1" fill="#808000"/>
<rect x="196" y="81" width="1" height="1" fill="#808080"/>
<rect x="197" y="81" width="1" height="1" fill="#808000"/>
<rect x="198" y="81" width="1" height="1" fill="#808080"/>
<rect x="199" y="81" width="1" height="1" fill="#808000"/>
<rect x="200" y="81" width="1" height="1" fill="#808080"/>
<rect x="201" y="81" width="1" height="1" fill="#808000"/>
<rect x="202" y="81" width="1" height="1" fill="#808080"/>
<rect x="203" y="81" width="1" height="1" fill="#808000"/>
<rect x="204" y="81" width="1" height="1" fill="#808080"/>
<rect x="205" y="81" width="1" height="1" fill="#000000"/>
<rect x="192" y="82" width="1" height="1" fill="#000000"/>
<rect x="193" y="82" width="1" height="1" fill="#808080"/>
<rect x="194" y="82" width="1" height="1" fill="#808000"/>
<rect x="195" y="82" width="1" height="1" fill="#808080"/>
<rect x="196" y="82" width="1" height="1" fill="#808000"/>
<rect x="197" y="82" width="1" height="1" fill="#808080"/>
<rect x="198" y="82" width="8" height="1" fill="#000080"/>
<rect x="192" y="83" width="1" height="1" fill="#000000"/>
<rect x="193" y="83" width="1" height="1" fill="#808000"/>
<rect x="194" y="83" width="1" height="1" fill="#808080"/>
<rect x="195" y="83" width="1" height="1" fill="#808000"/>
<rect x="196" y="83" width="1" height="1" fill="#808080"/>
<rect x="197" y="83" width="1" height="1" fill="#808000"/>
<rect x="198" y="83" width="1" height="1" fill="#000080"/>
<rect x="199" y="83" width="6" height="1" fill="#ffffff"/>
<rect x="205" y="83" width="2" height="1" fill="#000080"/>
<rect x="192" y="84" width="1" height="1" fill="#000000"/>
<rect x="193" y="84" width="1" height="1" fill="#808080"/>
<rect x="194" y="84" width="1" height="1" fill="#808000"/>
<rect x="195" y="84" width="1" height="1" fill="#808080"/>
<rect x="196" y="84" width="1" height="1" fill="#808000"/>
<rect x="197" y="84" width="1" height="1" fill="#808080"/>
<rect x="198" y="84" width="1" height="1" fill="#000080"/>
<rect x="199" y="84" width="1" height="1" fill="#ffffff"/>
<rect x="200" y="84" width="3" height="1" fill="#000000"/>
<rect x="203" y="84" width="3" height="1" fill="#ffffff"/>
<rect x="206" y="84" width="1" height="1" fill="#000080"/>
<rect x="192" y="85" width="1" height="1" fill="#000000"/>
<rect x="193" y="85" width="1" height="1" fill="#808000"/>
<rect x="194" y="85" width="1" height="1" fill="#808080"/>
<rect x="195" y="85" width="1" height="1" fill="#808000"/>
<rect x="196" y="85" width="1" height="1" fill="#808080"/>
<rect x="197" y="85" width="1" height="1" fill="#808000"/>
<rect x="198" y="85" width="1" height="1" fill="#000080"/>
<rect x="199" y="85" width="7" height="1" fill="#ffffff"/>
<rect x="206" y="85" width="1" height="1" fill="#000080"/>
<rect x="192" y="86" width="1" height="1" fill="#000000"/>
<rect x="193" y="86" width="1" height="1" fill="#808080"/>
<rect x="194" y="86" width="1" height="1" fill="#808000"/>
<rect x="195" y="86" width="1" height="1" fill="#808080"/>
<rect x="196" y="86" width="1" height="1" fill="#808000"/>
<rect x="197" y="86" width="1" height="1" fill="#808080"/>
<rect x="198" y="86" width="1" height="1" fill="#000080"/>
<rect x="199" y="86" width="1" height="1" fill="#ffffff"/>
<rect x="200" y="86" width="5" height="1" fill="#000000"/>
<rect x="205" y="86" width="1" height="1" fill="#ffffff"/>
<rect x="206" y="86" width="1" height="1" fill="#000080"/>
<rect x="192" y="87" width="1" height="1" fill="#000000"/>
<rect x="193" y="87" width="1" height="1" fill="#808000"/>
<rect x="194" y="87" width="1" height="1" fill="#808080"/>
<rect x="195" y="87" width="1" height="1" fill="#808000"/>
<rect x="196" y="87" width="1" height="1" fill="#808080"/>
<rect x="197" y="87" width="1" height="1" fill="#808000"/>
<rect x="198" y="87" width="1" height="1" fill="#000080"/>
<rect x="199" y="87" width="7" height="1" fill="#ffffff"/>
<rect x="206" y="87" width="1" height="1" fill="#000080"/>
<rect x="193" y="88" width="5" height="1" fill="#000000"/>
<rect x="198" y="88" width="9" height="1" fill="#000080"/>
<rect x="222" y="77" width="4" height="1" fill="#000000"/>
<rect x="220" y="78" width="2" height="1" fill="#000000"/>
<rect x="226" y="78" width="2" height="1" fill="#000000"/>
<rect x="216" y="79" width="1" height="1" fill="#000000"/>
<rect x="219" y="79" width="1" height="1" fill="#000000"/>
<rect x="228" y="79" width="1" height="1" fill="#000000"/>
<rect x="216" y="80" width="3" height="1" fill="#000000"/>
<rect x="229" y="80" width="1" height="1" fill="#000000"/>
<rect x="216" y="81" width="4" height="1" fill="#000000"/>
<rect x="229" y="81" width="1" height="1" fill="#000000"/>
<rect x="216" y="82" width="5" height="1" fill="#000000"/>
<rect x="229" y="82" width="1" height="1" fill="#000000"/>
<rect x="216" y="83" width="6" height="1" fill="#000000"/>
<rect x="228" y="83" width="1" height="1" fill="#000000"/>
<rect x="227" y="84" width="1" height="1" fill="#000000"/>
<rect x="226" y="85" width="1" height="1" fill="#000000"/>
<rect x="225" y="86" width="1" height="1" fill="#000000"/>
<rect x="215" y="88" width="10" height="1" fill="#000000"/>
<rect x="226" y="88" width="1" height="1" fill="#000000"/>
<rect x="228" y="88" width="1" height="1" fill="#000000"/>
<rect x="230" y="88" width="1" height="1" fill="#000000"/>
<rect x="215" y="89" width="10" height="1" fill="#000000"/>
<rect x="226" y="89" width="1" height="1" fill="#000000"/>
<rect x="228" y="89" width="1" height="1" fill="#000000"/>
<rect x="230" y="89" width="1" height="1" fill="#000000"/>
<rect x="240" y="77" width="1" height="1" fill="#000000"/>
<rect x="242" y="77" width="1" height="1" fill="#000000"/>
<rect x="244" y="77" width="1" height="1" fill="#000000"/>
<rect x="239" y="78" width="1" height="1" fill="#000000"/>
<rect x="245" y="78" width="1" height="1" fill="#000000"/>
<rect x="247" y="78" width="1" height="1" fill="#000000"/>
<rect x="246" y="79" width="1" height="1" fill="#000000"/>
<rect x="248" y="79" width="1" height="1" fill="#000000"/>
<rect x="237" y="80" width="1" height="1" fill="#000000"/>
<rect x="247" y="80" width="1" height="1" fill="#000000"/>
<rect x="249" y="80" width="1" height="1" fill="#000000"/>
<rect x="246" y="81" width="1" height="1" fill="#000000"/>
<rect x="248" y="81" width="1" height="1" fill="#000000"/>
<rect x="237" y="82" width="1" height="1" fill="#000000"/>
<rect x="245" y="82" width="1" height="1" fill="#000000"/>
<rect x="247" y="82" width="1" height="1" fill="#000000"/>
<rect x="236" y="88" width="1" height="1" fill="#000000"/>
<rect x="238" y="88" width="1" height="1" fill="#000000"/>
<rect x="240" y="88" width="1" height="1" fill="#000000"/>
<rect x="242" y="88" width="1" height="1" fill="#000000"/>
<rect x="244" y="88" width="1" height="1" fill="#000000"/>
<rect x="246" y="88" width="1" height="1" fill="#000000"/>
<rect x="248" y="88" width="1" height="1" fill="#000000"/>
<rect x="250" y="88" width="1" height="1" fill="#000000"/>
<rect x="243" y="89" width="1" height="1" fill="#000000"/>
<rect x="245" y="89" width="1" height="1" fill="#000000"/>
<rect x="247" y="89" width="1" height="1" fill="#000000"/>
<rect x="249" y="89" width="1" height="1" fill="#000000"/>
<rect x="276" y="76" width="1" height="1" fill="#48a848"/>
<rect x="278" y="76" width="1" height="1" fill="#48a848"/>
<rect x="273" y="77" width="1" height="1" fill="#48a848"/>
<rect x="275" y="77" width="1" height="1" fill="#48a848"/>
<rect x="277" y="77" width="1" height="1" fill="#48a848"/>
<rect x="279" y="77" width="1" height="1" fill="#48a848"/>
<rect x="281" y="77" width="1" height="1" fill="#48a848"/>
<rect x="272" y="78" width="1" height="1" fill="#48a848"/>
<rect x="274" y="78" width="1" height="1" fill="#48a848"/>
<rect x="276" y="78" width="1" height="1" fill="#48a848"/>
<rect x="278" y="78" width="1" height="1" fill="#48a848"/>
<rect x="280" y="78" width="1" height="1" fill="#48a848"/>
<rect x="282" y="78" width="1" height="1" fill="#48a848"/>
<rect x="271" y="79" width="1" height="1" fill="#48a848"/>
<rect x="273" y="79" width="1" height="1" fill="#48a848"/>
<rect x="275" y="79" width="1" height="1" fill="#48a848"/>
<rect x="277" y="79" width="1" height="1" fill="#48a848"/>
<rect x="281" y="79" width="1" height="1" fill="#48a848"/>
<rect x="283" y="79" width="1" height="1" fill="#48a848"/>
<rect x="272" y="80" width="1" height="1" fill="#48a848"/>
<rect x="274" y="80" width="1" height="1" fill="#48a848"/>
<rect x="276" y="80" width="1" height="1" fill="#48a848"/>
<rect x="282" y="80" width="1" height="1" fill="#48a848"/>
<rect x="271" y="81" width="1" height="1" fill="#48a848"/>
<rect x="273" y="81" width="1" height="1" fill="#48a848"/>
<rect x="275" y="81" width="1" height="1" fill="#48a848"/>
<rect x="281" y="81" width="1" height="1" fill="#48a848"/>
<rect x="283" y="81" width="1" height="1" fill="#48a848"/>
<rect x="270" y="82" width="1" height="1" fill="#48a848"/>
<rect x="272" y="82" width="1" height="1" fill="#48a848"/>
<rect x="274" y="82" width="1" height="1" fill="#48a848"/>
<rect x="280" y="82" width="1" height="1" fill="#48a848"/>
<rect x="282" y="82" width="1" height="1" fill="#48a848"/>
<rect x="284" y="82" width="1" height="1" fill="#48a848"/>
<rect x="271" y="83" width="1" height="1" fill="#48a848"/>
<rect x="273" y="83" width="1" height="1" fill="#48a848"/>
<rect x="279" y="83" width="1" height="1" fill="#48a848"/>
<rect x="281" y="83" width="1" height="1" fill="#48a848"/>
<rect x="283" y="83" width="1" height="1" fill="#48a848"/>
<rect x="270" y="84" width="1" height="1" fill="#48a848"/>
<rect x="272" y="84" width="1" height="1" fill="#48a848"/>
<rect x="278" y="84" width="1" height="1" fill="#48a848"/>
<rect x="280" y="84" width="1" height="1" fill="#48a848"/>
<rect x="282" y="84" width="1" height="1" fill="#48a848"/>
<rect x="284" y="84" width="1" height="1" fill="#48a848"/>
<rect x="271" y="85" width="1" height="1" fill="#48a848"/>
<rect x="273" y="85" width="1" height="1" fill="#48a848"/>
<rect x="277" y="85" width="1" height="1" fill="#48a848"/>
<rect x="279" y="85" width="1" height="1" fill="#48a848"/>
<rect x="281" y="85" width="1" height="1" fill="#48a848"/>
<rect x="283" y="85" width="1" height="1" fill="#48a848"/>
<rect x="272" y="86" width="1" height="1" fill="#48a848"/>
<rect x="274" y="86" width="1" height="1" fill="#48a848"/>
<rect x="276" y="86" width="1" height="1" fill="#48a848"/>
<rect x="278" y="86" width="1" height="1" fill="#48a848"/>
<rect x="280" y="86" width="1" height="1" fill="#48a848"/>
<rect x="282" y="86" width="1" height="1" fill="#48a848"/>
<rect x="271" y="87" width="1" height="1" fill="#48a848"/>
<rect x="273" y="87" width="1" height="1" fill="#48a848"/>
<rect x="275" y="87" width="1" height="1" fill="#48a848"/>
<rect x="277" y="87" width="1" height="1" fill="#48a848"/>
<rect x="279" y="87" width="1" height="1" fill="#48a848"/>
<rect x="281" y="87" width="1" height="1" fill="#48a848"/>
<rect x="283" y="87" width="1" height="1" fill="#48a848"/>
<rect x="272" y="88" width="1" height="1" fill="#48a848"/>
<rect x="274" y="88" width="1" height="1" fill="#48a848"/>
<rect x="276" y="88" width="1" height="1" fill="#48a848"/>
<rect x="278" y="88" width="1" height="1" fill="#48a848"/>
<rect x="280" y="88" width="1" height="1" fill="#48a848"/>
<rect x="282" y="88" width="1" height="1" fill="#48a848"/>
<rect x="273" y="89" width="1" height="1" fill="#48a848"/>
<rect x="275" y="89" width="1" height="1" fill="#48a848"/>
<rect x="277" y="89" width="1" height="1" fill="#48a848"/>
<rect x="279" y="89" width="1" height="1" fill="#48a848"/>
<rect x="281" y="89" width="1" height="1" fill="#48a848"/>
<rect x="276" y="90" width="1" height="1" fill="#48a848"/>
<rect x="278" y="90" width="1" height="1" fill="#48a848"/>
<rect x="290" y="84" width="1" height="1" fill="#000000"/>
<rect x="293" y="84" width="1" height="1" fill="#000000"/>
<rect x="291" y="85" width="2" height="1" fill="#000000"/>
<rect x="303" y="77" width="3" height="1" fill="#000000"/>
<rect x="309" y="77" width="3" height="1" fill="#000000"/>
<rect x="303" y="78" width="3" height="1" fill="#000000"/>
<rect x="309" y="78" width="3" height="1" fill="#000000"/>
<rect x="302" y="79" width="2" height="1" fill="#000000"/>
<rect x="304" y="79" width="1" height="1" fill="#ffffff"/>
<rect x="305" y="79" width="2" height="1" fill="#000000"/>
<rect x="308" y="79" width="2" height="1" fill="#000000"/>
<rect x="310" y="79" width="1" height="1" fill="#ffffff"/>
<rect x="311" y="79" width="2" height="1" fill="#000000"/>
<rect x="302" y="80" width="5" height="1" fill="#000000"/>
<rect x="308" y="80" width="5" height="1" fill="#000000"/>
<rect x="301" y="81" width="2" height="1" fill="#000000"/>
<rect x="303" y="81" width="1" height="1" fill="#ffffff"/>
<rect x="304" y="81" width="6" height="1" fill="#000000"/>
<rect x="310" y="81" width="1" height="1" fill="#ffffff"/>
<rect x="311" y="81" width="3" height="1" fill="#000000"/>
<rect x="301" y="82" width="2" height="1" fill="#000000"/>
<rect x="303" y="82" width="1" height="1" fill="#ffffff"/>
<rect x="304" y="82" width="6" height="1" fill="#000000"/>
<rect x="310" y="82" width="1" height="1" fill="#ffffff"/>
<rect x="311" y="82" width="3" height="1" fill="#000000"/>
<rect x="301" y="83" width="1" height="1" fill="#000000"/>
<rect x="302" y="83" width="1" height="1" fill="#ffffff"/>
<rect x="303" y="83" width="6" height="1" fill="#000000"/>
<rect x="309" y="83" width="1" height="1" fill="#ffffff"/>
<rect x="310" y="83" width="5" height="1" fill="#000000"/>
<rect x="300" y="84" width="2" height="1" fill="#000000"/>
<rect x="302" y="84" width="1" height="1" fill="#ffffff"/>
<rect x="303" y="84" width="4" height="1" fill="#000000"/>
<rect x="308" y="84" width="2" height="1" fill="#000000"/>
<rect x="310" y="84" width="1" height="1" fill="#ffffff"/>
<rect x="311" y="84" width="4" height="1" fill="#000000"/>
<rect x="300" y="85" width="2" height="1" fill="#000000"/>
<rect x="302" y="85" width="1" height="1" fill="#ffffff"/>
<rect x="303" y="85" width="4" height="1" fill="#000000"/>
<rect x="308" y="85" width="2" height="1" fill="#000000"/>
<rect x="310" y="85" width="1" height="1" fill="#ffffff"/>
<rect x="311" y="85" width="4" height="1" fill="#000000"/>
<rect x="300" y="86" width="7" height="1" fill="#000000"/>
<rect x="308" y="86" width="7" height="1" fill="#000000"/>
<rect x="300" y="87" width="7" height="1" fill="#000000"/>
<rect x="308" y="87" width="7" height="1" fill="#000000"/>
<rect x="300" y="88" width="7" height="1" fill="#000000"/>
<rect x="308" y="88" width="7" height="1" fill="#000000"/>
<rect x="301" y="89" width="5" height="1" fill="#000000"/>
<rect x="309" y="89" width="5" height="1" fill="#000000"/>
<rect x="322" y="76" width="7" height="1" fill="#000000"/>
<rect x="322" y="77" width="1" height="1" fill="#000000"/>
<rect x="323" y="77" width="5" height="1" fill="#ffffff"/>
<rect x="328" y="77" width="1" height="1" fill="#000000"/>
<rect x="322" y="78" width="1" height="1" fill="#000000"/>
<rect x="323" y="78" width="2" height="1" fill="#ffffff"/>
<rect x="325" y="78" width="1" height="1" fill="#000000"/>
<rect x="326" y="78" width="2" height="1" fill="#ffffff"/>
<rect x="328" y="78" width="1" height="1" fill="#000000"/>
<rect x="322" y="79" width="1" height="1" fill="#000000"/>
<rect x="323" y="79" width="1" height="1" fill="#ffffff"/>
<rect x="324" y="79" width="3" height="1" fill="#000000"/>
<rect x="327" y="79" width="1" height="1" fill="#ffffff"/>
<rect x="328" y="79" width="8" height="1" fill="#000000"/>
<rect x="322" y="80" width="1" height="1" fill="#000000"/>
<rect x="323" y="80" width="2" height="1" fill="#ffffff"/>
<rect x="325" y="80" width="1" height="1" fill="#000000"/>
<rect x="326" y="80" width="2" height="1" fill="#ffffff"/>
<rect x="328" y="80" width="1" height="1" fill="#000000"/>
<rect x="322" y="81" width="1" height="1" fill="#000000"/>
<rect x="323" y="81" width="5" height="1" fill="#ffffff"/>
<rect x="328" y="81" width="1" height="1" fill="#000000"/>
<rect x="322" y="82" width="7" height="1" fill="#000000"/>
<rect x="322" y="85" width="7" height="1" fill="#000000"/>
<rect x="322" y="86" width="1" height="1" fill="#000000"/>
<rect x="323" y="86" width="5" height="1" fill="#ffffff"/>
<rect x="328" y="86" width="1" height="1" fill="#000000"/>
<rect x="322" y="87" width="1" height="1" fill="#000000"/>
<rect x="323" y="87" width="2" height="1" fill="#ffffff"/>
<rect x="325" y="87" width="1" height="1" fill="#000000"/>
<rect x="326" y="87" width="2" height="1" fill="#ffffff"/>
<rect x="328" y="87" width="1" height="1" fill="#000000"/>
<rect x="322" y="88" width="1" height="1" fill="#000000"/>
<rect x="323" y="88" width="1" height="1" fill="#ffffff"/>
<rect x="324" y="88" width="3" height="1" fill="#000000"/>
<rect x="327" y="88" width="1" height="1" fill="#ffffff"/>
<rect x="328" y="88" width="8" height="1" fill="#000000"/>
<rect x="322" y="89" width="1" height="1" fill="#000000"/>
<rect x="323" y="89" width="2" height="1" fill="#ffffff"/>
<rect x="325" y="89" width="1" height="1" fill="#000000"/>
<rect x="326" y="89" width="2" height="1" fill="#ffffff"/>
<rect x="328" y="89" width="1" height="1" fill="#000000"/>
<rect x="322" y="90" width="1" height="1" fill="#000000"/>
<rect x="323" y="90" width="5" height="1" fill="#ffffff"/>
<rect x="328" y="90" width="1" height="1" fill="#000000"/>
<rect x="322" y="91" width="7" height="1" fill="#000000"/>
<rect x="369" y="76" width="4" height="1" fill="#000080"/>
<rect x="369" y="77" width="4" height="1" fill="#000080"/>
<rect x="369" y="78" width="4" height="1" fill="#000080"/>
<rect x="367" y="79" width="1" height="1" fill="#000000"/>
<rect x="368" y="79" width="6" height="1" fill="#000080"/>
<rect x="374" y="79" width="1" height="1" fill="#000000"/>
<rect x="365" y="80" width="2" height="1" fill="#000000"/>
<rect x="367" y="80" width="2" height="1" fill="#ffffff"/>
<rect x="369" y="80" width="4" height="1" fill="#000080"/>
<rect x="373" y="80" width="2" height="1" fill="#ffffff"/>
<rect x="375" y="80" width="2" height="1" fill="#000000"/>
<rect x="363" y="81" width="2" height="1" fill="#000000"/>
<rect x="365" y="81" width="5" height="1" fill="#ffffff"/>
<rect x="370" y="81" width="2" height="1" fill="#000080"/>
<rect x="372" y="81" width="5" height="1" fill="#ffffff"/>
<rect x="377" y="81" width="2" height="1" fill="#000000"/>
<rect x="363" y="82" width="1" height="1" fill="#000000"/>
<rect x="364" y="82" width="14" height="1" fill="#ffffff"/>
<rect x="378" y="82" width="1" height="1" fill="#000000"/>
<rect x="364" y="83" width="2" height="1" fill="#000000"/>
<rect x="366" y="83" width="10" height="1" fill="#ffffff"/>
<rect x="376" y="83" width="2" height="1" fill="#000000"/>
<rect x="363" y="84" width="1" height="1" fill="#000000"/>
<rect x="364" y="84" width="2" height="1" fill="#ffffff"/>
<rect x="366" y="84" width="2" height="1" fill="#000000"/>
<rect x="368" y="84" width="6" height="1" fill="#ffffff"/>
<rect x="374" y="84" width="2" height="1" fill="#000000"/>
<rect x="376" y="84" width="2" height="1" fill="#ffffff"/>
<rect x="378" y="84" width="1" height="1" fill="#000000"/>
<rect x="364" y="85" width="2" height="1" fill="#000000"/>
<rect x="366" y="85" width="2" height="1" fill="#ffffff"/>
<rect x="368" y="85" width="6" height="1" fill="#000000"/>
<rect x="374" y="85" width="2" height="1" fill="#ffffff"/>
<rect x="376" y="85" width="2" height="1" fill="#000000"/>
<rect x="363" y="86" width="1" height="1" fill="#000000"/>
<rect x="364" y="86" width="2" height="1" fill="#ffffff"/>
<rect x="366" y="86" width="2" height="1" fill="#000000"/>
<rect x="368" y="86" width="6" height="1" fill="#ffffff"/>
<rect x="374" y="86" width="2" height="1" fill="#000000"/>
<rect x="376" y="86" width="2" height="1" fill="#ffffff"/>
<rect x="378" y="86" width="1" height="1" fill="#000000"/>
<rect x="364" y="87" width="2" height="1" fill="#000000"/>
<rect x="366" y="87" width="2" height="1" fill="#ffffff"/>
<rect x="368" y="87" width="6" height="1" fill="#000000"/>
<rect x="374" y="87" width="2" height="1" fill="#ffffff"/>
<rect x="376" y="87" width="2" height="1" fill="#000000"/>
<rect x="366" y="88" width="2" height="1" fill="#000000"/>
<rect x="368" y="88" width="6" height="1" fill="#ffffff"/>
<rect x="374" y="88" width="2" height="1" fill="#000000"/>
<rect x="368" y="89" width="6" height="1" fill="#000000"/>
<rect x="386" y="77" width="1" height="1" fill="#000000"/>
<rect x="388" y="77" width="1" height="1" fill="#000000"/>
<rect x="390" y="77" width="1" height="1" fill="#2060ff"/>
<rect x="392" y="77" width="1" height="1" fill="#2060ff"/>
<rect x="389" y="78" width="1" height="1" fill="#2060ff"/>
<rect x="391" y="78" width="1" height="1" fill="#2060ff"/>
<rect x="393" y="78" width="1" height="1" fill="#2060ff"/>
<rect x="388" y="79" width="1" height="1" fill="#2060ff"/>
<rect x="390" y="79" width="1" height="1" fill="#2060ff"/>
<rect x="394" y="79" width="1" height="1" fill="#2060ff"/>
<rect x="384" y="80" width="1" height="1" fill="#000000"/>
<rect x="386" y="80" width="1" height="1" fill="#000000"/>
<rect x="388" y="80" width="1" height="1" fill="#000000"/>
<rect x="390" y="80" width="1" height="1" fill="#000000"/>
<rect x="392" y="80" width="1" height="1" fill="#000000"/>
<rect x="394" y="80" width="1" height="1" fill="#000000"/>
<rect x="395" y="80" width="1" height="1" fill="#2060ff"/>
<rect x="397" y="80" width="1" height="1" fill="#000000"/>
<rect x="399" y="80" width="1" height="1" fill="#000000"/>
<rect x="394" y="81" width="1" height="1" fill="#2060ff"/>
<rect x="399" y="81" width="1" height="1" fill="#000000"/>
<rect x="384" y="82" width="1" height="1" fill="#000000"/>
<rect x="393" y="82" width="1" height="1" fill="#2060ff"/>
<rect x="392" y="83" width="1" height="1" fill="#2060ff"/>
<rect x="399" y="83" width="1" height="1" fill="#000000"/>
<rect x="384" y="84" width="1" height="1" fill="#000000"/>
<rect x="392" y="84" width="1" height="1" fill="#2060ff"/>
<rect x="399" y="85" width="1" height="1" fill="#000000"/>
<rect x="384" y="86" width="1" height="1" fill="#000000"/>
<rect x="392" y="86" width="1" height="1" fill="#2060ff"/>
<rect x="391" y="87" width="1" height="1" fill="#2060ff"/>
<rect x="393" y="87" width="1" height="1" fill="#2060ff"/>
<rect x="399" y="87" width="1" height="1" fill="#000000"/>
<rect x="384" y="88" width="1" height="1" fill="#000000"/>
<rect x="386" y="88" width="1" height="1" fill="#000000"/>
<rect x="388" y="88" width="1" height="1" fill="#000000"/>
<rect x="390" y="88" width="1" height="1" fill="#000000"/>
<rect x="392" y="88" width="1" height="1" fill="#2060ff"/>
<rect x="394" y="88" width="1" height="1" fill="#000000"/>
<rect x="396" y="88" width="1" height="1" fill="#000000"/>
<rect x="398" y="88" width="1" height="1" fill="#000000"/>
<rect x="408" y="76" width="1" height="1" fill="#0000ff"/>
<rect x="412" y="76" width="1" height="1" fill="#0000ff"/>
<rect x="416" y="76" width="1" height="1" fill="#0000ff"/>
<rect x="408" y="77" width="1" height="1" fill="#0000ff"/>
<rect x="412" y="77" width="1" height="1" fill="#0000ff"/>
<rect x="416" y="77" width="1" height="1" fill="#0000ff"/>
<rect x="407" y="78" width="1" height="1" fill="#0000ff"/>
<rect x="409" y="78" width="1" height="1" fill="#0000ff"/>
<rect x="411" y="78" width="1" height="1" fill="#0000ff"/>
<rect x="413" y="78" width="1" height="1" fill="#0000ff"/>
<rect x="415" y="78" width="1" height="1" fill="#0000ff"/>
<rect x="417" y="78" width="1" height="1" fill="#0000ff"/>
<rect x="408" y="79" width="1" height="1" fill="#0000ff"/>
<rect x="412" y="79" width="1" height="1" fill="#0000ff"/>
<rect x="416" y="79" width="1" height="1" fill="#0000ff"/>
<rect x="406" y="81" width="1" height="1" fill="#000000"/>
<rect x="408" y="81" width="1" height="1" fill="#000000"/>
<rect x="410" y="81" width="1" height="1" fill="#000000"/>
<rect x="412" y="81" width="1" height="1" fill="#000000"/>
<rect x="414" y="81" width="1" height="1" fill="#000000"/>
<rect x="416" y="81" width="1" height="1" fill="#000000"/>
<rect x="418" y="81" width="1" height="1" fill="#000000"/>
<rect x="420" y="81" width="1" height="1" fill="#000000"/>
<rect x="406" y="83" width="1" height="1" fill="#000000"/>
<rect x="408" y="83" width="1" height="1" fill="#000000"/>
<rect x="410" y="83" width="1" height="1" fill="#000000"/>
<rect x="412" y="83" width="1" height="1" fill="#000000"/>
<rect x="414" y="83" width="1" height="1" fill="#000000"/>
<rect x="416" y="83" width="1" height="1" fill="#000000"/>
<rect x="418" y="83" width="1" height="1" fill="#000000"/>
<rect x="420" y="83" width="1" height="1" fill="#000000"/>
<rect x="406" y="85" width="1" height="1" fill="#000000"/>
<rect x="408" y="85" width="1" height="1" fill="#000000"/>
<rect x="410" y="85" width="1" height="1" fill="#000000"/>
<rect x="412" y="85" width="1" height="1" fill="#000000"/>
<rect x="414" y="85" width="1" height="1" fill="#000000"/>
<rect x="416" y="85" width="1" height="1" fill="#000000"/>
<rect x="418" y="85" width="1" height="1" fill="#000000"/>
<rect x="420" y="85" width="1" height="1" fill="#000000"/>
<rect x="406" y="87" width="1" height="1" fill="#000000"/>
<rect x="408" y="87" width="1" height="1" fill="#000000"/>
<rect x="410" y="87" width="1" height="1" fill="#000000"/>
<rect x="412" y="87" width="1" height="1" fill="#000000"/>
<rect x="414" y="87" width="1" height="1" fill="#000000"/>
<rect x="416" y="87" width="1" height="1" fill="#000000"/>
<rect x="418" y="87" width="1" height="1" fill="#000000"/>
<rect x="420" y="87" width="1" height="1" fill="#000000"/>
<rect x="406" y="89" width="1" height="1" fill="#000000"/>
<rect x="408" y="89" width="1" height="1" fill="#000000"/>
<rect x="410" y="89" width="1" height="1" fill="#000000"/>
<rect x="412" y="89" width="1" height="1" fill="#000000"/>
<rect x="414" y="89" width="1" height="1" fill="#000000"/>
<rect x="416" y="89" width="1" height="1" fill="#000000"/>
<rect x="418" y="89" width="1" height="1" fill="#000000"/>
<rect x="420" y="89" width="1" height="1" fill="#000000"/>
<rect x="429" y="76" width="1" height="1" fill="#6090d0"/>
<rect x="431" y="76" width="1" height="1" fill="#6090d0"/>
<rect x="433" y="76" width="9" height="1" fill="#000000"/>
<rect x="432" y="77" width="1" height="1" fill="#000000"/>
<rect x="433" y="77" width="9" height="1" fill="#ffffff"/>
<rect x="442" y="77" width="1" height="1" fill="#000000"/>
<rect x="429" y="78" width="1" height="1" fill="#6090d0"/>
<rect x="431" y="78" width="1" height="1" fill="#6090d0"/>
<rect x="432" y="78" width="1" height="1" fill="#000000"/>
<rect x="433" y="78" width="2" height="1" fill="#ffffff"/>
<rect x="435" y="78" width="5" height="1" fill="#6090d0"/>
<rect x="440" y="78" width="2" height="1" fill="#ffffff"/>
<rect x="442" y="78" width="1" height="1" fill="#000000"/>
<rect x="432" y="79" width="1" height="1" fill="#000000"/>
<rect x="433" y="79" width="8" height="1" fill="#ffffff"/>
<rect x="441" y="79" width="1" height="1" fill="#000000"/>
<rect x="429" y="80" width="1" height="1" fill="#6090d0"/>
<rect x="431" y="80" width="1" height="1" fill="#000000"/>
<rect x="432" y="80" width="2" height="1" fill="#ffffff"/>
<rect x="434" y="80" width="5" height="1" fill="#6090d0"/>
<rect x="439" y="80" width="2" height="1" fill="#ffffff"/>
<rect x="441" y="80" width="1" height="1" fill="#000000"/>
<rect x="431" y="81" width="1" height="1" fill="#000000"/>
<rect x="432" y="81" width="9" height="1" fill="#ffffff"/>
<rect x="441" y="81" width="1" height="1" fill="#000000"/>
<rect x="429" y="82" width="1" height="1" fill="#6090d0"/>
<rect x="431" y="82" width="1" height="1" fill="#000000"/>
<rect x="432" y="82" width="2" height="1" fill="#ffffff"/>
<rect x="434" y="82" width="5" height="1" fill="#6090d0"/>
<rect x="439" y="82" width="2" height="1" fill="#ffffff"/>
<rect x="441" y="82" width="1" height="1" fill="#000000"/>
<rect x="431" y="83" width="1" height="1" fill="#000000"/>
<rect x="432" y="83" width="8" height="1" fill="#ffffff"/>
<rect x="440" y="83" width="1" height="1" fill="#000000"/>
<rect x="430" y="84" width="1" height="1" fill="#000000"/>
<rect x="431" y="84" width="2" height="1" fill="#ffffff"/>
<rect x="433" y="84" width="5" height="1" fill="#6090d0"/>
<rect x="438" y="84" width="2" height="1" fill="#ffffff"/>
<rect x="440" y="84" width="1" height="1" fill="#000000"/>
<rect x="430" y="85" width="1" height="1" fill="#000000"/>
<rect x="431" y="85" width="9" height="1" fill="#ffffff"/>
<rect x="440" y="85" width="1" height="1" fill="#000000"/>
<rect x="429" y="86" width="14" height="1" fill="#000000"/>
<rect x="428" y="87" width="1" height="1" fill="#000000"/>
<rect x="429" y="87" width="3" height="1" fill="#ff0000"/>
<rect x="432" y="87" width="1" height="1" fill="#000000"/>
<rect x="439" y="87" width="1" height="1" fill="#000000"/>
<rect x="440" y="87" width="3" height="1" fill="#ff0000"/>
<rect x="443" y="87" width="1" height="1" fill="#000000"/>
<rect x="428" y="88" width="1" height="1" fill="#000000"/>
<rect x="429" y="88" width="1" height="1" fill="#ff0000"/>
<rect x="430" y="88" width="1" height="1" fill="#ffffff"/>
<rect x="431" y="88" width="1" height="1" fill="#ff0000"/>
<rect x="432" y="88" width="1" height="1" fill="#000000"/>
<rect x="439" y="88" width="1" height="1" fill="#000000"/>
<rect x="440" y="88" width="1" height="1" fill="#ff0000"/>
<rect x="441" y="88" width="1" height="1" fill="#ffffff"/>
<rect x="442" y="88" width="1" height="1" fill="#ff0000"/>
<rect x="443" y="88" width="1" height="1" fill="#000000"/>
<rect x="428" y="89" width="1" height="1" fill="#000000"/>
<rect x="429" y="89" width="3" height="1" fill="#ff0000"/>
<rect x="432" y="89" width="1" height="1" fill="#000000"/>
<rect x="439" y="89" width="1" height="1" fill="#000000"/>
<rect x="440" y="89" width="3" height="1" fill="#ff0000"/>
<rect x="443" y="89" width="1" height="1" fill="#000000"/>
<rect x="429" y="90" width="3" height="1" fill="#000000"/>
<rect x="440" y="90" width="3" height="1" fill="#000000"/>
<rect x="450" y="77" width="6" height="1" fill="#808080"/>
<rect x="457" y="77" width="2" height="1" fill="#800000"/>
<rect x="464" y="77" width="2" height="1" fill="#800000"/>
<rect x="450" y="78" width="1" height="1" fill="#808080"/>
<rect x="451" y="78" width="6" height="1" fill="#ffffff"/>
<rect x="458" y="78" width="2" height="1" fill="#800000"/>
<rect x="463" y="78" width="2" height="1" fill="#800000"/>
<rect x="450" y="79" width="1" height="1" fill="#808080"/>
<rect x="451" y="79" width="7" height="1" fill="#ffffff"/>
<rect x="459" y="79" width="2" height="1" fill="#800000"/>
<rect x="462" y="79" width="2" height="1" fill="#800000"/>
<rect x="450" y="80" width="1" height="1" fill="#808080"/>
<rect x="451" y="80" width="1" height="1" fill="#ffffff"/>
<rect x="452" y="80" width="6" height="1" fill="#000000"/>
<rect x="458" y="80" width="1" height="1" fill="#ffffff"/>
<rect x="460" y="80" width="3" height="1" fill="#800000"/>
<rect x="450" y="81" width="1" height="1" fill="#808080"/>
<rect x="451" y="81" width="8" height="1" fill="#ffffff"/>
<rect x="460" y="81" width="3" height="1" fill="#800000"/>
<rect x="464" y="81" width="1" height="1" fill="#000080"/>
<rect x="450" y="82" width="1" height="1" fill="#808080"/>
<rect x="451" y="82" width="2" height="1" fill="#ffffff"/>
<rect x="453" y="82" width="4" height="1" fill="#000000"/>
<rect x="457" y="82" width="1" height="1" fill="#ffffff"/>
<rect x="459" y="82" width="2" height="1" fill="#800000"/>
<rect x="462" y="82" width="2" height="1" fill="#800000"/>
<rect x="464" y="82" width="1" height="1" fill="#000080"/>
<rect x="450" y="83" width="1" height="1" fill="#808080"/>
<rect x="451" y="83" width="6" height="1" fill="#ffffff"/>
<rect x="458" y="83" width="2" height="1" fill="#800000"/>
<rect x="463" y="83" width="2" height="1" fill="#800000"/>
<rect x="450" y="84" width="1" height="1" fill="#808080"/>
<rect x="451" y="84" width="1" height="1" fill="#ffffff"/>
<rect x="452" y="84" width="4" height="1" fill="#000000"/>
<rect x="457" y="84" width="2" height="1" fill="#800000"/>
<rect x="459" y="84" width="1" height="1" fill="#ffffff"/>
<rect x="460" y="84" width="1" height="1" fill="#808080"/>
<rect x="464" y="84" width="2" height="1" fill="#800000"/>
<rect x="450" y="85" width="1" height="1" fill="#808080"/>
<rect x="451" y="85" width="9" height="1" fill="#ffffff"/>
<rect x="460" y="85" width="1" height="1" fill="#808080"/>
<rect x="463" y="85" width="1" height="1" fill="#000080"/>
<rect x="450" y="86" width="1" height="1" fill="#808080"/>
<rect x="451" y="86" width="2" height="1" fill="#ffffff"/>
<rect x="453" y="86" width="5" height="1" fill="#000000"/>
<rect x="458" y="86" width="2" height="1" fill="#ffffff"/>
<rect x="460" y="86" width="1" height="1" fill="#808080"/>
<rect x="463" y="86" width="1" height="1" fill="#000080"/>
<rect x="450" y="87" width="1" height="1" fill="#808080"/>
<rect x="451" y="87" width="9" height="1" fill="#ffffff"/>
<rect x="460" y="87" width="1" height="1" fill="#808080"/>
<rect x="461" y="87" width="5" height="1" fill="#000080"/>
<rect x="450" y="88" width="1" height="1" fill="#808080"/>
<rect x="451" y="88" width="1" height="1" fill="#ffffff"/>
<rect x="452" y="88" width="7" height="1" fill="#000000"/>
<rect x="459" y="88" width="1" height="1" fill="#ffffff"/>
<rect x="460" y="88" width="1" height="1" fill="#808080"/>
<rect x="462" y="88" width="3" height="1" fill="#000080"/>
<rect x="450" y="89" width="1" height="1" fill="#808080"/>
<rect x="451" y="89" width="9" height="1" fill="#ffffff"/>
<rect x="460" y="89" width="1" height="1" fill="#808080"/>
<rect x="463" y="89" width="1" height="1" fill="#000080"/>
<rect x="450" y="90" width="11" height="1" fill="#808080"/>
<rect x="490" y="76" width="20" height="20" fill="#f0f0f0" />
<rect x="490" y="76" width="20" height="1" fill="#fff" />
<rect x="490" y="76" width="1" height="20" fill="#fff" />
<rect x="490" y="95" width="20" height="1" fill="#808080" />
<rect x="509" y="76" width="1" height="20" fill="#808080" />
<rect x="493" y="79" width="8" height="1" fill="#005000"/>
<rect x="493" y="80" width="8" height="1" fill="#005000"/>
<rect x="493" y="81" width="2" height="1" fill="#005000"/>
<rect x="499" y="81" width="2" height="1" fill="#005000"/>
<rect x="493" y="82" width="2" height="1" fill="#005000"/>
<rect x="499" y="82" width="2" height="1" fill="#005000"/>
<rect x="493" y="83" width="2" height="1" fill="#005000"/>
<rect x="497" y="83" width="9" height="1" fill="#005000"/>
<rect x="493" y="84" width="2" height="1" fill="#005000"/>
<rect x="497" y="84" width="9" height="1" fill="#005000"/>
<rect x="493" y="85" width="6" height="1" fill="#005000"/>
<rect x="500" y="85" width="2" height="1" fill="#005000"/>
<rect x="504" y="85" width="2" height="1" fill="#005000"/>
<rect x="493" y="86" width="7" height="1" fill="#005000"/>
<rect x="501" y="86" width="1" height="1" fill="#005000"/>
<rect x="504" y="86" width="2" height="1" fill="#005000"/>
<rect x="497" y="87" width="2" height="1" fill="#005000"/>
<rect x="504" y="87" width="2" height="1" fill="#005000"/>
<rect x="497" y="88" width="2" height="1" fill="#005000"/>
<rect x="504" y="88" width="2" height="1" fill="#005000"/>
<rect x="497" y="89" width="2" height="1" fill="#005000"/>
<rect x="504" y="89" width="2" height="1" fill="#005000"/>
<rect x="497" y="90" width="9" height="1" fill="#005000"/>
<rect x="497" y="91" width="9" height="1" fill="#005000"/>
<rect x="524" y="78" width="1" height="1" fill="#000000"/>
<rect x="523" y="79" width="3" height="1" fill="#000000"/>
<rect x="522" y="80" width="2" height="1" fill="#000000"/>
<rect x="524" y="80" width="1" height="1" fill="#606060"/>
<rect x="525" y="80" width="2" height="1" fill="#000000"/>
<rect x="521" y="81" width="2" height="1" fill="#000000"/>
<rect x="523" y="81" width="2" height="1" fill="#606060"/>
<rect x="525" y="81" width="3" height="1" fill="#000000"/>
<rect x="520" y="82" width="2" height="1" fill="#000000"/>
<rect x="522" y="82" width="2" height="1" fill="#606060"/>
<rect x="524" y="82" width="5" height="1" fill="#000000"/>
<rect x="519" y="83" width="2" height="1" fill="#000000"/>
<rect x="521" y="83" width="2" height="1" fill="#606060"/>
<rect x="523" y="83" width="7" height="1" fill="#000000"/>
<rect x="518" y="84" width="5" height="1" fill="#000000"/>
<rect x="523" y="84" width="1" height="1" fill="#606060"/>
<rect x="524" y="84" width="7" height="1" fill="#000000"/>
<rect x="521" y="85" width="1" height="1" fill="#000000"/>
<rect x="522" y="85" width="2" height="1" fill="#606060"/>
<rect x="524" y="85" width="4" height="1" fill="#000000"/>
<rect x="521" y="86" width="1" height="1" fill="#000000"/>
<rect x="522" y="86" width="2" height="1" fill="#606060"/>
<rect x="524" y="86" width="4" height="1" fill="#000000"/>
<rect x="521" y="87" width="1" height="1" fill="#000000"/>
<rect x="522" y="87" width="2" height="1" fill="#606060"/>
<rect x="524" y="87" width="4" height="1" fill="#000000"/>
<rect x="521" y="88" width="1" height="1" fill="#000000"/>
<rect x="522" y="88" width="2" height="1" fill="#606060"/>
<rect x="524" y="88" width="4" height="1" fill="#000000"/>
<rect x="521" y="89" width="1" height="1" fill="#000000"/>
<rect x="522" y="89" width="2" height="1" fill="#606060"/>
<rect x="524" y="89" width="4" height="1" fill="#000000"/>
<rect x="521" y="90" width="1" height="1" fill="#000000"/>
<rect x="522" y="90" width="1" height="1" fill="#606060"/>
<rect x="523" y="90" width="5" height="1" fill="#000000"/>
<rect x="521" y="91" width="7" height="1" fill="#000000"/>
<rect x="521" y="92" width="7" height="1" fill="#000000"/>
<rect x="544" y="80" width="1" height="1" fill="#000000"/>
<rect x="543" y="81" width="2" height="1" fill="#000000"/>
<rect x="542" y="82" width="3" height="1" fill="#000000"/>
<rect x="541" y="83" width="2" height="1" fill="#000000"/>
<rect x="543" y="83" width="1" height="1" fill="#606060"/>
<rect x="544" y="83" width="10" height="1" fill="#000000"/>
<rect x="540" y="84" width="2" height="1" fill="#000000"/>
<rect x="542" y="84" width="10" height="1" fill="#606060"/>
<rect x="552" y="84" width="2" height="1" fill="#000000"/>
<rect x="539" y="85" width="2" height="1" fill="#000000"/>
<rect x="541" y="85" width="2" height="1" fill="#606060"/>
<rect x="543" y="85" width="11" height="1" fill="#000000"/>
<rect x="538" y="86" width="16" height="1" fill="#000000"/>
<rect x="539" y="87" width="15" height="1" fill="#000000"/>
<rect x="540" y="88" width="14" height="1" fill="#000000"/>
<rect x="541" y="89" width="13" height="1" fill="#000000"/>
<rect x="542" y="90" width="3" height="1" fill="#000000"/>
<rect x="543" y="91" width="2" height="1" fill="#000000"/>
<rect x="544" y="92" width="1" height="1" fill="#000000"/>
<rect x="569" y="81" width="1" height="1" fill="#404040"/>
<rect x="570" y="82" width="1" height="1" fill="#404040"/>
<rect x="561" y="83" width="1" height="1" fill="#404040"/>
<rect x="563" y="83" width="1" height="1" fill="#404040"/>
<rect x="565" y="83" width="1" height="1" fill="#404040"/>
<rect x="567" y="83" width="1" height="1" fill="#404040"/>
<rect x="569" y="83" width="1" height="1" fill="#404040"/>
<rect x="571" y="83" width="1" height="1" fill="#404040"/>
<rect x="560" y="84" width="1" height="1" fill="#404040"/>
<rect x="562" y="84" width="1" height="1" fill="#404040"/>
<rect x="564" y="84" width="1" height="1" fill="#404040"/>
<rect x="566" y="84" width="1" height="1" fill="#404040"/>
<rect x="568" y="84" width="1" height="1" fill="#404040"/>
<rect x="570" y="84" width="1" height="1" fill="#404040"/>
<rect x="572" y="84" width="1" height="1" fill="#404040"/>
<rect x="561" y="85" width="1" height="1" fill="#404040"/>
<rect x="563" y="85" width="1" height="1" fill="#404040"/>
<rect x="565" y="85" width="1" height="1" fill="#404040"/>
<rect x="567" y="85" width="1" height="1" fill="#404040"/>
<rect x="569" y="85" width="1" height="1" fill="#404040"/>
<rect x="571" y="85" width="1" height="1" fill="#404040"/>
<rect x="573" y="85" width="1" height="1" fill="#404040"/>
<rect x="560" y="86" width="1" height="1" fill="#404040"/>
<rect x="562" y="86" width="1" height="1" fill="#404040"/>
<rect x="564" y="86" width="1" height="1" fill="#404040"/>
<rect x="566" y="86" width="1" height="1" fill="#404040"/>
<rect x="568" y="86" width="1" height="1" fill="#404040"/>
<rect x="570" y="86" width="1" height="1" fill="#404040"/>
<rect x="572" y="86" width="1" height="1" fill="#404040"/>
<rect x="574" y="86" width="1" height="1" fill="#404040"/>
<rect x="561" y="87" width="1" height="1" fill="#404040"/>
<rect x="563" y="87" width="1" height="1" fill="#404040"/>
<rect x="565" y="87" width="1" height="1" fill="#404040"/>
<rect x="567" y="87" width="1" height="1" fill="#404040"/>
<rect x="569" y="87" width="1" height="1" fill="#404040"/>
<rect x="571" y="87" width="1" height="1" fill="#404040"/>
<rect x="573" y="87" width="1" height="1" fill="#404040"/>
<rect x="560" y="88" width="1" height="1" fill="#404040"/>
<rect x="562" y="88" width="1" height="1" fill="#404040"/>
<rect x="564" y="88" width="1" height="1" fill="#404040"/>
<rect x="566" y="88" width="1" height="1" fill="#404040"/>
<rect x="568" y="88" width="1" height="1" fill="#404040"/>
<rect x="570" y="88" width="1" height="1" fill="#404040"/>
<rect x="572" y="88" width="1" height="1" fill="#404040"/>
<rect x="561" y="89" width="1" height="1" fill="#404040"/>
<rect x="563" y="89" width="1" height="1" fill="#404040"/>
<rect x="565" y="89" width="1" height="1" fill="#404040"/>
<rect x="567" y="89" width="1" height="1" fill="#404040"/>
<rect x="569" y="89" width="1" height="1" fill="#404040"/>
<rect x="571" y="89" width="1" height="1" fill="#404040"/>
<rect x="570" y="90" width="1" height="1" fill="#404040"/>
<rect x="569" y="91" width="1" height="1" fill="#404040"/>
<rect x="593" y="78" width="10" height="1" fill="#808080"/>
<rect x="604" y="78" width="5" height="1" fill="#000080"/>
<rect x="593" y="79" width="1" height="1" fill="#808080"/>
<rect x="594" y="79" width="8" height="1" fill="#ffffff"/>
<rect x="602" y="79" width="1" height="1" fill="#808080"/>
<rect x="606" y="79" width="1" height="1" fill="#000080"/>
<rect x="593" y="80" width="1" height="1" fill="#808080"/>
<rect x="594" y="80" width="8" height="1" fill="#ffffff"/>
<rect x="602" y="80" width="1" height="1" fill="#808080"/>
<rect x="605" y="80" width="3" height="1" fill="#000080"/>
<rect x="593" y="81" width="1" height="1" fill="#808080"/>
<rect x="594" y="81" width="1" height="1" fill="#ffffff"/>
<rect x="595" y="81" width="6" height="1" fill="#000000"/>
<rect x="601" y="81" width="1" height="1" fill="#ffffff"/>
<rect x="602" y="81" width="1" height="1" fill="#808080"/>
<rect x="604" y="81" width="5" height="1" fill="#000080"/>
<rect x="593" y="82" width="1" height="1" fill="#808080"/>
<rect x="594" y="82" width="8" height="1" fill="#ffffff"/>
<rect x="602" y="82" width="1" height="1" fill="#808080"/>
<rect x="606" y="82" width="1" height="1" fill="#000080"/>
<rect x="593" y="83" width="1" height="1" fill="#808080"/>
<rect x="594" y="83" width="2" height="1" fill="#ffffff"/>
<rect x="596" y="83" width="4" height="1" fill="#000000"/>
<rect x="600" y="83" width="2" height="1" fill="#ffffff"/>
<rect x="602" y="83" width="1" height="1" fill="#808080"/>
<rect x="604" y="83" width="5" height="1" fill="#000080"/>
<rect x="593" y="84" width="1" height="1" fill="#808080"/>
<rect x="594" y="84" width="8" height="1" fill="#ffffff"/>
<rect x="602" y="84" width="1" height="1" fill="#808080"/>
<rect x="606" y="84" width="1" height="1" fill="#000080"/>
<rect x="593" y="85" width="1" height="1" fill="#808080"/>
<rect x="594" y="85" width="1" height="1" fill="#ffffff"/>
<rect x="595" y="85" width="5" height="1" fill="#000000"/>
<rect x="600" y="85" width="2" height="1" fill="#ffffff"/>
<rect x="602" y="85" width="1" height="1" fill="#808080"/>
<rect x="606" y="85" width="1" height="1" fill="#000080"/>
<rect x="593" y="86" width="1" height="1" fill="#808080"/>
<rect x="594" y="86" width="8" height="1" fill="#ffffff"/>
<rect x="602" y="86" width="1" height="1" fill="#808080"/>
<rect x="606" y="86" width="1" height="1" fill="#000080"/>
<rect x="593" y="87" width="1" height="1" fill="#808080"/>
<rect x="594" y="87" width="2" height="1" fill="#ffffff"/>
<rect x="596" y="87" width="4" height="1" fill="#000000"/>
<rect x="600" y="87" width="2" height="1" fill="#ffffff"/>
<rect x="602" y="87" width="1" height="1" fill="#808080"/>
<rect x="606" y="87" width="1" height="1" fill="#000080"/>
<rect x="593" y="88" width="1" height="1" fill="#808080"/>
<rect x="594" y="88" width="8" height="1" fill="#ffffff"/>
<rect x="602" y="88" width="1" height="1" fill="#808080"/>
<rect x="606" y="88" width="1" height="1" fill="#000080"/>
<rect x="593" y="89" width="1" height="1" fill="#808080"/>
<rect x="594" y="89" width="1" height="1" fill="#ffffff"/>
<rect x="595" y="89" width="6" height="1" fill="#000000"/>
<rect x="601" y="89" width="1" height="1" fill="#ffffff"/>
<rect x="602" y="89" width="1" height="1" fill="#808080"/>
<rect x="606" y="89" width="1" height="1" fill="#000080"/>
<rect x="593" y="90" width="1" height="1" fill="#808080"/>
<rect x="594" y="90" width="8" height="1" fill="#ffffff"/>
<rect x="602" y="90" width="1" height="1" fill="#808080"/>
<rect x="606" y="90" width="1" height="1" fill="#000080"/>
<rect x="593" y="91" width="1" height="1" fill="#808080"/>
<rect x="594" y="91" width="8" height="1" fill="#ffffff"/>
<rect x="602" y="91" width="1" height="1" fill="#808080"/>
<rect x="606" y="91" width="1" height="1" fill="#000080"/>
<rect x="593" y="92" width="10" height="1" fill="#808080"/>
<rect x="606" y="92" width="1" height="1" fill="#000080"/>
<rect x="616" y="76" width="60" height="18" fill="#fff" />
<rect x="616" y="76" width="60" height="1" fill="#909090" />
<rect x="616" y="76" width="1" height="18" fill="#909090" />
<rect x="617" y="93" width="59" height="1" fill="#e8e8e8" />
<rect x="675" y="77" width="1" height="17" fill="#e8e8e8" />
<text x="673.5" y="89" font-size="11.3" fill="#1c0c48" text-anchor="end" font-family='"Liberation Mono",monospace' >100 ps</text>
<rect x="678" y="76" width="12" height="9" fill="#f0f0f0" />
<rect x="678" y="76" width="12" height="1" fill="#fff" />
<rect x="678" y="76" width="1" height="9" fill="#fff" />
<rect x="678" y="84" width="12" height="1" fill="#808080" />
<rect x="689" y="76" width="1" height="9" fill="#808080" />
<rect x="678" y="85" width="12" height="9" fill="#f0f0f0" />
<rect x="678" y="85" width="12" height="1" fill="#fff" />
<rect x="678" y="85" width="1" height="9" fill="#fff" />
<rect x="678" y="93" width="12" height="1" fill="#808080" />
<rect x="689" y="85" width="1" height="9" fill="#808080" />
<rect x="683" y="78" width="1" height="1" fill="#000" />
<rect x="682" y="79" width="3" height="1" fill="#000" />
<rect x="681" y="80" width="5" height="1" fill="#000" />
<rect x="680" y="81" width="7" height="1" fill="#000" />
<rect x="680" y="87" width="7" height="1" fill="#000" />
<rect x="681" y="88" width="5" height="1" fill="#000" />
<rect x="682" y="89" width="3" height="1" fill="#000" />
<rect x="683" y="90" width="1" height="1" fill="#000" />
<rect x="698" y="78" width="10" height="1" fill="#808080"/>
<rect x="711" y="78" width="1" height="1" fill="#000080"/>
<rect x="698" y="79" width="1" height="1" fill="#808080"/>
<rect x="699" y="79" width="8" height="1" fill="#ffffff"/>
<rect x="707" y="79" width="1" height="1" fill="#808080"/>
<rect x="711" y="79" width="1" height="1" fill="#000080"/>
<rect x="698" y="80" width="1" height="1" fill="#808080"/>
<rect x="699" y="80" width="8" height="1" fill="#ffffff"/>
<rect x="707" y="80" width="1" height="1" fill="#808080"/>
<rect x="711" y="80" width="1" height="1" fill="#000080"/>
<rect x="698" y="81" width="1" height="1" fill="#808080"/>
<rect x="699" y="81" width="1" height="1" fill="#ffffff"/>
<rect x="700" y="81" width="6" height="1" fill="#000000"/>
<rect x="706" y="81" width="1" height="1" fill="#ffffff"/>
<rect x="707" y="81" width="1" height="1" fill="#808080"/>
<rect x="711" y="81" width="1" height="1" fill="#000080"/>
<rect x="698" y="82" width="1" height="1" fill="#808080"/>
<rect x="699" y="82" width="8" height="1" fill="#ffffff"/>
<rect x="707" y="82" width="1" height="1" fill="#808080"/>
<rect x="711" y="82" width="1" height="1" fill="#000080"/>
<rect x="698" y="83" width="1" height="1" fill="#808080"/>
<rect x="699" y="83" width="2" height="1" fill="#ffffff"/>
<rect x="701" y="83" width="4" height="1" fill="#000000"/>
<rect x="705" y="83" width="2" height="1" fill="#ffffff"/>
<rect x="707" y="83" width="1" height="1" fill="#808080"/>
<rect x="711" y="83" width="1" height="1" fill="#000080"/>
<rect x="698" y="84" width="1" height="1" fill="#808080"/>
<rect x="699" y="84" width="8" height="1" fill="#ffffff"/>
<rect x="707" y="84" width="1" height="1" fill="#808080"/>
<rect x="711" y="84" width="1" height="1" fill="#000080"/>
<rect x="698" y="85" width="1" height="1" fill="#808080"/>
<rect x="699" y="85" width="1" height="1" fill="#ffffff"/>
<rect x="700" y="85" width="5" height="1" fill="#000000"/>
<rect x="705" y="85" width="2" height="1" fill="#ffffff"/>
<rect x="707" y="85" width="1" height="1" fill="#808080"/>
<rect x="711" y="85" width="1" height="1" fill="#000080"/>
<rect x="698" y="86" width="1" height="1" fill="#808080"/>
<rect x="699" y="86" width="8" height="1" fill="#ffffff"/>
<rect x="707" y="86" width="1" height="1" fill="#808080"/>
<rect x="711" y="86" width="1" height="1" fill="#000080"/>
<rect x="698" y="87" width="1" height="1" fill="#808080"/>
<rect x="699" y="87" width="2" height="1" fill="#ffffff"/>
<rect x="701" y="87" width="4" height="1" fill="#000000"/>
<rect x="705" y="87" width="2" height="1" fill="#ffffff"/>
<rect x="707" y="87" width="1" height="1" fill="#808080"/>
<rect x="711" y="87" width="1" height="1" fill="#000080"/>
<rect x="698" y="88" width="1" height="1" fill="#808080"/>
<rect x="699" y="88" width="8" height="1" fill="#ffffff"/>
<rect x="707" y="88" width="1" height="1" fill="#808080"/>
<rect x="709" y="88" width="5" height="1" fill="#000080"/>
<rect x="698" y="89" width="1" height="1" fill="#808080"/>
<rect x="699" y="89" width="1" height="1" fill="#ffffff"/>
<rect x="700" y="89" width="6" height="1" fill="#000000"/>
<rect x="706" y="89" width="1" height="1" fill="#ffffff"/>
<rect x="707" y="89" width="1" height="1" fill="#808080"/>
<rect x="710" y="89" width="3" height="1" fill="#000080"/>
<rect x="698" y="90" width="1" height="1" fill="#808080"/>
<rect x="699" y="90" width="8" height="1" fill="#ffffff"/>
<rect x="707" y="90" width="1" height="1" fill="#808080"/>
<rect x="711" y="90" width="1" height="1" fill="#000080"/>
<rect x="698" y="91" width="1" height="1" fill="#808080"/>
<rect x="699" y="91" width="8" height="1" fill="#ffffff"/>
<rect x="707" y="91" width="1" height="1" fill="#808080"/>
<rect x="698" y="92" width="10" height="1" fill="#808080"/>
<rect x="709" y="92" width="5" height="1" fill="#000080"/>
<rect x="720" y="78" width="10" height="1" fill="#808080"/>
<rect x="733" y="78" width="1" height="1" fill="#ff0000"/>
<rect x="720" y="79" width="1" height="1" fill="#808080"/>
<rect x="721" y="79" width="8" height="1" fill="#ffffff"/>
<rect x="729" y="79" width="1" height="1" fill="#808080"/>
<rect x="732" y="79" width="1" height="1" fill="#ff0000"/>
<rect x="733" y="79" width="1" height="1" fill="#ffffff"/>
<rect x="734" y="79" width="1" height="1" fill="#ff0000"/>
<rect x="720" y="80" width="1" height="1" fill="#808080"/>
<rect x="721" y="80" width="8" height="1" fill="#ffffff"/>
<rect x="729" y="80" width="1" height="1" fill="#808080"/>
<rect x="731" y="80" width="1" height="1" fill="#ff0000"/>
<rect x="732" y="80" width="3" height="1" fill="#ffffff"/>
<rect x="735" y="80" width="1" height="1" fill="#ff0000"/>
<rect x="720" y="81" width="1" height="1" fill="#808080"/>
<rect x="721" y="81" width="1" height="1" fill="#ffffff"/>
<rect x="722" y="81" width="6" height="1" fill="#000000"/>
<rect x="728" y="81" width="1" height="1" fill="#ffffff"/>
<rect x="729" y="81" width="1" height="1" fill="#808080"/>
<rect x="732" y="81" width="1" height="1" fill="#ff0000"/>
<rect x="733" y="81" width="1" height="1" fill="#ffffff"/>
<rect x="734" y="81" width="1" height="1" fill="#ff0000"/>
<rect x="720" y="82" width="1" height="1" fill="#808080"/>
<rect x="721" y="82" width="8" height="1" fill="#ffffff"/>
<rect x="729" y="82" width="1" height="1" fill="#808080"/>
<rect x="733" y="82" width="1" height="1" fill="#ff0000"/>
<rect x="720" y="83" width="1" height="1" fill="#808080"/>
<rect x="721" y="83" width="2" height="1" fill="#ffffff"/>
<rect x="723" y="83" width="4" height="1" fill="#000000"/>
<rect x="727" y="83" width="2" height="1" fill="#ffffff"/>
<rect x="729" y="83" width="1" height="1" fill="#808080"/>
<rect x="733" y="83" width="1" height="1" fill="#000080"/>
<rect x="720" y="84" width="1" height="1" fill="#808080"/>
<rect x="721" y="84" width="8" height="1" fill="#ffffff"/>
<rect x="729" y="84" width="1" height="1" fill="#808080"/>
<rect x="733" y="84" width="1" height="1" fill="#000080"/>
<rect x="720" y="85" width="1" height="1" fill="#808080"/>
<rect x="721" y="85" width="1" height="1" fill="#ffffff"/>
<rect x="722" y="85" width="5" height="1" fill="#000000"/>
<rect x="727" y="85" width="2" height="1" fill="#ffffff"/>
<rect x="729" y="85" width="1" height="1" fill="#808080"/>
<rect x="733" y="85" width="1" height="1" fill="#000080"/>
<rect x="720" y="86" width="1" height="1" fill="#808080"/>
<rect x="721" y="86" width="8" height="1" fill="#ffffff"/>
<rect x="729" y="86" width="1" height="1" fill="#808080"/>
<rect x="733" y="86" width="1" height="1" fill="#000080"/>
<rect x="720" y="87" width="1" height="1" fill="#808080"/>
<rect x="721" y="87" width="2" height="1" fill="#ffffff"/>
<rect x="723" y="87" width="4" height="1" fill="#000000"/>
<rect x="727" y="87" width="2" height="1" fill="#ffffff"/>
<rect x="729" y="87" width="1" height="1" fill="#808080"/>
<rect x="733" y="87" width="1" height="1" fill="#000080"/>
<rect x="720" y="88" width="1" height="1" fill="#808080"/>
<rect x="721" y="88" width="8" height="1" fill="#ffffff"/>
<rect x="729" y="88" width="1" height="1" fill="#808080"/>
<rect x="731" y="88" width="5" height="1" fill="#000080"/>
<rect x="720" y="89" width="1" height="1" fill="#808080"/>
<rect x="721" y="89" width="1" height="1" fill="#ffffff"/>
<rect x="722" y="89" width="6" height="1" fill="#000000"/>
<rect x="728" y="89" width="1" height="1" fill="#ffffff"/>
<rect x="729" y="89" width="1" height="1" fill="#808080"/>
<rect x="732" y="89" width="3" height="1" fill="#000080"/>
<rect x="720" y="90" width="1" height="1" fill="#808080"/>
<rect x="721" y="90" width="8" height="1" fill="#ffffff"/>
<rect x="729" y="90" width="1" height="1" fill="#808080"/>
<rect x="733" y="90" width="1" height="1" fill="#000080"/>
<rect x="720" y="91" width="1" height="1" fill="#808080"/>
<rect x="721" y="91" width="8" height="1" fill="#ffffff"/>
<rect x="729" y="91" width="1" height="1" fill="#808080"/>
<rect x="720" y="92" width="10" height="1" fill="#808080"/>
<rect x="742" y="78" width="10" height="1" fill="#808080"/>
<rect x="755" y="78" width="1" height="1" fill="#000080"/>
<rect x="742" y="79" width="1" height="1" fill="#808080"/>
<rect x="743" y="79" width="8" height="1" fill="#ffffff"/>
<rect x="751" y="79" width="1" height="1" fill="#808080"/>
<rect x="755" y="79" width="1" height="1" fill="#000080"/>
<rect x="742" y="80" width="1" height="1" fill="#808080"/>
<rect x="743" y="80" width="8" height="1" fill="#ffffff"/>
<rect x="751" y="80" width="1" height="1" fill="#808080"/>
<rect x="755" y="80" width="1" height="1" fill="#000080"/>
<rect x="742" y="81" width="1" height="1" fill="#808080"/>
<rect x="743" y="81" width="1" height="1" fill="#ffffff"/>
<rect x="744" y="81" width="6" height="1" fill="#000000"/>
<rect x="750" y="81" width="1" height="1" fill="#ffffff"/>
<rect x="751" y="81" width="1" height="1" fill="#808080"/>
<rect x="755" y="81" width="1" height="1" fill="#000080"/>
<rect x="742" y="82" width="1" height="1" fill="#808080"/>
<rect x="743" y="82" width="8" height="1" fill="#ffffff"/>
<rect x="751" y="82" width="1" height="1" fill="#808080"/>
<rect x="755" y="82" width="1" height="1" fill="#000080"/>
<rect x="742" y="83" width="1" height="1" fill="#808080"/>
<rect x="743" y="83" width="2" height="1" fill="#ffffff"/>
<rect x="745" y="83" width="4" height="1" fill="#000000"/>
<rect x="749" y="83" width="2" height="1" fill="#ffffff"/>
<rect x="751" y="83" width="1" height="1" fill="#808080"/>
<rect x="755" y="83" width="1" height="1" fill="#000080"/>
<rect x="742" y="84" width="1" height="1" fill="#808080"/>
<rect x="743" y="84" width="8" height="1" fill="#ffffff"/>
<rect x="751" y="84" width="1" height="1" fill="#808080"/>
<rect x="753" y="84" width="5" height="1" fill="#000080"/>
<rect x="742" y="85" width="1" height="1" fill="#808080"/>
<rect x="743" y="85" width="1" height="1" fill="#ffffff"/>
<rect x="744" y="85" width="5" height="1" fill="#000000"/>
<rect x="749" y="85" width="2" height="1" fill="#ffffff"/>
<rect x="751" y="85" width="1" height="1" fill="#808080"/>
<rect x="754" y="85" width="3" height="1" fill="#000080"/>
<rect x="742" y="86" width="1" height="1" fill="#808080"/>
<rect x="743" y="86" width="8" height="1" fill="#ffffff"/>
<rect x="751" y="86" width="1" height="1" fill="#808080"/>
<rect x="755" y="86" width="1" height="1" fill="#000080"/>
<rect x="742" y="87" width="1" height="1" fill="#808080"/>
<rect x="743" y="87" width="2" height="1" fill="#ffffff"/>
<rect x="745" y="87" width="4" height="1" fill="#000000"/>
<rect x="749" y="87" width="2" height="1" fill="#ffffff"/>
<rect x="751" y="87" width="1" height="1" fill="#808080"/>
<rect x="753" y="87" width="5" height="1" fill="#000080"/>
<rect x="742" y="88" width="1" height="1" fill="#808080"/>
<rect x="743" y="88" width="8" height="1" fill="#ffffff"/>
<rect x="751" y="88" width="1" height="1" fill="#808080"/>
<rect x="754" y="88" width="3" height="1" fill="#000080"/>
<rect x="742" y="89" width="1" height="1" fill="#808080"/>
<rect x="743" y="89" width="1" height="1" fill="#ffffff"/>
<rect x="744" y="89" width="6" height="1" fill="#000000"/>
<rect x="750" y="89" width="1" height="1" fill="#ffffff"/>
<rect x="751" y="89" width="1" height="1" fill="#808080"/>
<rect x="755" y="89" width="1" height="1" fill="#000080"/>
<rect x="742" y="90" width="1" height="1" fill="#808080"/>
<rect x="743" y="90" width="8" height="1" fill="#ffffff"/>
<rect x="751" y="90" width="1" height="1" fill="#808080"/>
<rect x="742" y="91" width="1" height="1" fill="#808080"/>
<rect x="743" y="91" width="8" height="1" fill="#ffffff"/>
<rect x="751" y="91" width="1" height="1" fill="#808080"/>
<rect x="742" y="92" width="10" height="1" fill="#808080"/>
<rect x="764" y="78" width="5" height="1" fill="#808080"/>
<rect x="769" y="78" width="2" height="1" fill="#800000"/>
<rect x="776" y="78" width="2" height="1" fill="#800000"/>
<rect x="764" y="79" width="1" height="1" fill="#808080"/>
<rect x="765" y="79" width="5" height="1" fill="#ffffff"/>
<rect x="770" y="79" width="2" height="1" fill="#800000"/>
<rect x="775" y="79" width="2" height="1" fill="#800000"/>
<rect x="764" y="80" width="1" height="1" fill="#808080"/>
<rect x="765" y="80" width="6" height="1" fill="#ffffff"/>
<rect x="771" y="80" width="2" height="1" fill="#800000"/>
<rect x="774" y="80" width="2" height="1" fill="#800000"/>
<rect x="764" y="81" width="1" height="1" fill="#808080"/>
<rect x="765" y="81" width="1" height="1" fill="#ffffff"/>
<rect x="766" y="81" width="6" height="1" fill="#000000"/>
<rect x="772" y="81" width="3" height="1" fill="#800000"/>
<rect x="764" y="82" width="1" height="1" fill="#808080"/>
<rect x="765" y="82" width="7" height="1" fill="#ffffff"/>
<rect x="772" y="82" width="3" height="1" fill="#800000"/>
<rect x="776" y="82" width="1" height="1" fill="#000080"/>
<rect x="764" y="83" width="1" height="1" fill="#808080"/>
<rect x="765" y="83" width="2" height="1" fill="#ffffff"/>
<rect x="767" y="83" width="3" height="1" fill="#000000"/>
<rect x="770" y="83" width="1" height="1" fill="#ffffff"/>
<rect x="771" y="83" width="2" height="1" fill="#800000"/>
<rect x="774" y="83" width="2" height="1" fill="#800000"/>
<rect x="776" y="83" width="1" height="1" fill="#000080"/>
<rect x="764" y="84" width="1" height="1" fill="#808080"/>
<rect x="765" y="84" width="5" height="1" fill="#ffffff"/>
<rect x="770" y="84" width="2" height="1" fill="#800000"/>
<rect x="775" y="84" width="2" height="1" fill="#800000"/>
<rect x="764" y="85" width="1" height="1" fill="#808080"/>
<rect x="765" y="85" width="1" height="1" fill="#ffffff"/>
<rect x="766" y="85" width="3" height="1" fill="#000000"/>
<rect x="769" y="85" width="2" height="1" fill="#800000"/>
<rect x="771" y="85" width="2" height="1" fill="#ffffff"/>
<rect x="773" y="85" width="1" height="1" fill="#808080"/>
<rect x="776" y="85" width="2" height="1" fill="#800000"/>
<rect x="764" y="86" width="1" height="1" fill="#808080"/>
<rect x="765" y="86" width="8" height="1" fill="#ffffff"/>
<rect x="773" y="86" width="1" height="1" fill="#808080"/>
<rect x="776" y="86" width="1" height="1" fill="#000080"/>
<rect x="764" y="87" width="1" height="1" fill="#808080"/>
<rect x="765" y="87" width="2" height="1" fill="#ffffff"/>
<rect x="767" y="87" width="4" height="1" fill="#000000"/>
<rect x="771" y="87" width="2" height="1" fill="#ffffff"/>
<rect x="773" y="87" width="1" height="1" fill="#808080"/>
<rect x="776" y="87" width="1" height="1" fill="#000080"/>
<rect x="764" y="88" width="1" height="1" fill="#808080"/>
<rect x="765" y="88" width="8" height="1" fill="#ffffff"/>
<rect x="773" y="88" width="1" height="1" fill="#808080"/>
<rect x="774" y="88" width="5" height="1" fill="#000080"/>
<rect x="764" y="89" width="1" height="1" fill="#808080"/>
<rect x="765" y="89" width="1" height="1" fill="#ffffff"/>
<rect x="766" y="89" width="6" height="1" fill="#000000"/>
<rect x="772" y="89" width="1" height="1" fill="#ffffff"/>
<rect x="773" y="89" width="1" height="1" fill="#808080"/>
<rect x="775" y="89" width="3" height="1" fill="#000080"/>
<rect x="764" y="90" width="1" height="1" fill="#808080"/>
<rect x="765" y="90" width="8" height="1" fill="#ffffff"/>
<rect x="773" y="90" width="1" height="1" fill="#808080"/>
<rect x="776" y="90" width="1" height="1" fill="#000080"/>
<rect x="764" y="91" width="1" height="1" fill="#808080"/>
<rect x="765" y="91" width="8" height="1" fill="#ffffff"/>
<rect x="773" y="91" width="1" height="1" fill="#808080"/>
<rect x="764" y="92" width="10" height="1" fill="#808080"/>
<rect x="774" y="92" width="5" height="1" fill="#000080"/>
<rect x="790" y="79" width="1" height="1" fill="#ff0000"/>
<rect x="792" y="79" width="1" height="1" fill="#ff0000"/>
<rect x="794" y="79" width="1" height="1" fill="#ff0000"/>
<rect x="789" y="80" width="1" height="1" fill="#ff0000"/>
<rect x="791" y="80" width="1" height="1" fill="#ff0000"/>
<rect x="793" y="80" width="1" height="1" fill="#ff0000"/>
<rect x="795" y="80" width="1" height="1" fill="#ff0000"/>
<rect x="797" y="80" width="1" height="1" fill="#ff0000"/>
<rect x="788" y="81" width="1" height="1" fill="#ff0000"/>
<rect x="790" y="81" width="1" height="1" fill="#ff0000"/>
<rect x="792" y="81" width="1" height="1" fill="#ff0000"/>
<rect x="794" y="81" width="1" height="1" fill="#ff0000"/>
<rect x="796" y="81" width="1" height="1" fill="#ff0000"/>
<rect x="798" y="81" width="1" height="1" fill="#ff0000"/>
<rect x="787" y="82" width="1" height="1" fill="#ff0000"/>
<rect x="789" y="82" width="1" height="1" fill="#ff0000"/>
<rect x="791" y="82" width="1" height="1" fill="#ff0000"/>
<rect x="793" y="82" width="1" height="1" fill="#ff0000"/>
<rect x="795" y="82" width="1" height="1" fill="#ff0000"/>
<rect x="797" y="82" width="1" height="1" fill="#ff0000"/>
<rect x="786" y="83" width="1" height="1" fill="#ff0000"/>
<rect x="788" y="83" width="1" height="1" fill="#ff0000"/>
<rect x="790" y="83" width="1" height="1" fill="#ff0000"/>
<rect x="796" y="83" width="1" height="1" fill="#ff0000"/>
<rect x="798" y="83" width="1" height="1" fill="#ff0000"/>
<rect x="787" y="84" width="1" height="1" fill="#ff0000"/>
<rect x="789" y="84" width="1" height="1" fill="#ff0000"/>
<rect x="797" y="84" width="1" height="1" fill="#ff0000"/>
<rect x="799" y="84" width="1" height="1" fill="#ff0000"/>
<rect x="786" y="85" width="1" height="1" fill="#ff0000"/>
<rect x="788" y="85" width="1" height="1" fill="#ff0000"/>
<rect x="792" y="85" width="1" height="1" fill="#ff0000"/>
<rect x="794" y="85" width="1" height="1" fill="#ff0000"/>
<rect x="798" y="85" width="1" height="1" fill="#ff0000"/>
<rect x="787" y="86" width="1" height="1" fill="#ff0000"/>
<rect x="789" y="86" width="1" height="1" fill="#ff0000"/>
<rect x="797" y="86" width="1" height="1" fill="#ff0000"/>
<rect x="799" y="86" width="1" height="1" fill="#ff0000"/>
<rect x="786" y="87" width="1" height="1" fill="#ff0000"/>
<rect x="788" y="87" width="1" height="1" fill="#ff0000"/>
<rect x="792" y="87" width="1" height="1" fill="#ff0000"/>
<rect x="794" y="87" width="1" height="1" fill="#ff0000"/>
<rect x="798" y="87" width="1" height="1" fill="#ff0000"/>
<rect x="787" y="88" width="1" height="1" fill="#ff0000"/>
<rect x="789" y="88" width="1" height="1" fill="#ff0000"/>
<rect x="797" y="88" width="1" height="1" fill="#ff0000"/>
<rect x="799" y="88" width="1" height="1" fill="#ff0000"/>
<rect x="786" y="89" width="1" height="1" fill="#ff0000"/>
<rect x="788" y="89" width="1" height="1" fill="#ff0000"/>
<rect x="790" y="89" width="1" height="1" fill="#ff0000"/>
<rect x="796" y="89" width="1" height="1" fill="#ff0000"/>
<rect x="798" y="89" width="1" height="1" fill="#ff0000"/>
<rect x="787" y="90" width="1" height="1" fill="#ff0000"/>
<rect x="789" y="90" width="1" height="1" fill="#ff0000"/>
<rect x="791" y="90" width="1" height="1" fill="#ff0000"/>
<rect x="793" y="90" width="1" height="1" fill="#ff0000"/>
<rect x="795" y="90" width="1" height="1" fill="#ff0000"/>
<rect x="797" y="90" width="1" height="1" fill="#ff0000"/>
<rect x="788" y="91" width="1" height="1" fill="#ff0000"/>
<rect x="790" y="91" width="1" height="1" fill="#ff0000"/>
<rect x="792" y="91" width="1" height="1" fill="#ff0000"/>
<rect x="794" y="91" width="1" height="1" fill="#ff0000"/>
<rect x="796" y="91" width="1" height="1" fill="#ff0000"/>
<rect x="798" y="91" width="1" height="1" fill="#ff0000"/>
<rect x="789" y="92" width="1" height="1" fill="#ff0000"/>
<rect x="791" y="92" width="1" height="1" fill="#ff0000"/>
<rect x="793" y="92" width="1" height="1" fill="#ff0000"/>
<rect x="795" y="92" width="1" height="1" fill="#ff0000"/>
<rect x="797" y="92" width="1" height="1" fill="#ff0000"/>
<rect x="790" y="93" width="1" height="1" fill="#ff0000"/>
<rect x="792" y="93" width="1" height="1" fill="#ff0000"/>
<rect x="794" y="93" width="1" height="1" fill="#ff0000"/>
<rect x="819" y="76" width="20" height="20" fill="#f0f0f0" />
<rect x="819" y="76" width="20" height="1" fill="#fff" />
<rect x="819" y="76" width="1" height="20" fill="#fff" />
<rect x="819" y="95" width="20" height="1" fill="#808080" />
<rect x="838" y="76" width="1" height="20" fill="#808080" />
<rect x="823" y="78" width="1" height="1" fill="#000000"/>
<rect x="825" y="78" width="1" height="1" fill="#000000"/>
<rect x="822" y="79" width="1" height="1" fill="#000000"/>
<rect x="824" y="79" width="1" height="1" fill="#000000"/>
<rect x="826" y="79" width="1" height="1" fill="#000000"/>
<rect x="830" y="79" width="1" height="1" fill="#404040"/>
<rect x="821" y="80" width="1" height="1" fill="#000000"/>
<rect x="823" y="80" width="1" height="1" fill="#000000"/>
<rect x="825" y="80" width="1" height="1" fill="#000000"/>
<rect x="827" y="80" width="1" height="1" fill="#000000"/>
<rect x="829" y="80" width="1" height="1" fill="#404040"/>
<rect x="831" y="80" width="1" height="1" fill="#ffff00"/>
<rect x="833" y="80" width="1" height="1" fill="#404040"/>
<rect x="822" y="81" width="1" height="1" fill="#000000"/>
<rect x="824" y="81" width="1" height="1" fill="#000000"/>
<rect x="826" y="81" width="1" height="1" fill="#000000"/>
<rect x="830" y="81" width="1" height="1" fill="#ffff00"/>
<rect x="832" y="81" width="1" height="1" fill="#ffff00"/>
<rect x="834" y="81" width="1" height="1" fill="#404040"/>
<rect x="821" y="82" width="1" height="1" fill="#000000"/>
<rect x="823" y="82" width="1" height="1" fill="#000000"/>
<rect x="825" y="82" width="1" height="1" fill="#000000"/>
<rect x="827" y="82" width="1" height="1" fill="#000000"/>
<rect x="829" y="82" width="1" height="1" fill="#404040"/>
<rect x="831" y="82" width="1" height="1" fill="#ffff00"/>
<rect x="833" y="82" width="1" height="1" fill="#404040"/>
<rect x="835" y="82" width="1" height="1" fill="#ff0000"/>
<rect x="822" y="83" width="1" height="1" fill="#000000"/>
<rect x="830" y="83" width="1" height="1" fill="#ffff00"/>
<rect x="832" y="83" width="1" height="1" fill="#ffff00"/>
<rect x="834" y="83" width="1" height="1" fill="#ff0000"/>
<rect x="836" y="83" width="1" height="1" fill="#404040"/>
<rect x="821" y="84" width="1" height="1" fill="#000000"/>
<rect x="823" y="84" width="1" height="1" fill="#000000"/>
<rect x="825" y="84" width="1" height="1" fill="#404040"/>
<rect x="827" y="84" width="1" height="1" fill="#404040"/>
<rect x="829" y="84" width="1" height="1" fill="#404040"/>
<rect x="831" y="84" width="1" height="1" fill="#ffff00"/>
<rect x="833" y="84" width="1" height="1" fill="#404040"/>
<rect x="835" y="84" width="1" height="1" fill="#ff0000"/>
<rect x="822" y="85" width="1" height="1" fill="#000000"/>
<rect x="824" y="85" width="1" height="1" fill="#404040"/>
<rect x="826" y="85" width="1" height="1" fill="#404040"/>
<rect x="828" y="85" width="1" height="1" fill="#404040"/>
<rect x="830" y="85" width="1" height="1" fill="#ffff00"/>
<rect x="832" y="85" width="1" height="1" fill="#ffff00"/>
<rect x="834" y="85" width="1" height="1" fill="#ff0000"/>
<rect x="836" y="85" width="1" height="1" fill="#404040"/>
<rect x="825" y="86" width="1" height="1" fill="#404040"/>
<rect x="827" y="86" width="1" height="1" fill="#404040"/>
<rect x="829" y="86" width="1" height="1" fill="#404040"/>
<rect x="831" y="86" width="1" height="1" fill="#ffff00"/>
<rect x="833" y="86" width="1" height="1" fill="#404040"/>
<rect x="835" y="86" width="1" height="1" fill="#ff0000"/>
<rect x="824" y="87" width="1" height="1" fill="#404040"/>
<rect x="826" y="87" width="1" height="1" fill="#404040"/>
<rect x="828" y="87" width="1" height="1" fill="#404040"/>
<rect x="830" y="87" width="1" height="1" fill="#ffff00"/>
<rect x="832" y="87" width="1" height="1" fill="#ffff00"/>
<rect x="834" y="87" width="1" height="1" fill="#ff0000"/>
<rect x="836" y="87" width="1" height="1" fill="#404040"/>
<rect x="825" y="88" width="1" height="1" fill="#404040"/>
<rect x="827" y="88" width="1" height="1" fill="#00ff00"/>
<rect x="829" y="88" width="1" height="1" fill="#404040"/>
<rect x="831" y="88" width="1" height="1" fill="#ffff00"/>
<rect x="833" y="88" width="1" height="1" fill="#404040"/>
<rect x="835" y="88" width="1" height="1" fill="#ff0000"/>
<rect x="824" y="89" width="1" height="1" fill="#404040"/>
<rect x="826" y="89" width="1" height="1" fill="#00ff00"/>
<rect x="828" y="89" width="1" height="1" fill="#00ff00"/>
<rect x="830" y="89" width="1" height="1" fill="#ffff00"/>
<rect x="832" y="89" width="1" height="1" fill="#ffff00"/>
<rect x="834" y="89" width="1" height="1" fill="#ff0000"/>
<rect x="836" y="89" width="1" height="1" fill="#404040"/>
<rect x="825" y="90" width="1" height="1" fill="#404040"/>
<rect x="827" y="90" width="1" height="1" fill="#00ff00"/>
<rect x="829" y="90" width="1" height="1" fill="#404040"/>
<rect x="831" y="90" width="1" height="1" fill="#ffff00"/>
<rect x="833" y="90" width="1" height="1" fill="#404040"/>
<rect x="835" y="90" width="1" height="1" fill="#ff0000"/>
<rect x="824" y="91" width="1" height="1" fill="#404040"/>
<rect x="826" y="91" width="1" height="1" fill="#404040"/>
<rect x="828" y="91" width="1" height="1" fill="#404040"/>
<rect x="830" y="91" width="1" height="1" fill="#404040"/>
<rect x="832" y="91" width="1" height="1" fill="#404040"/>
<rect x="834" y="91" width="1" height="1" fill="#404040"/>
<rect x="836" y="91" width="1" height="1" fill="#404040"/>
<rect x="825" y="92" width="1" height="1" fill="#404040"/>
<rect x="827" y="92" width="1" height="1" fill="#404040"/>
<rect x="829" y="92" width="1" height="1" fill="#404040"/>
<rect x="831" y="92" width="1" height="1" fill="#404040"/>
<rect x="833" y="92" width="1" height="1" fill="#404040"/>
<rect x="835" y="92" width="1" height="1" fill="#404040"/>
<rect x="824" y="93" width="1" height="1" fill="#404040"/>
<rect x="826" y="93" width="1" height="1" fill="#404040"/>
<rect x="828" y="93" width="1" height="1" fill="#404040"/>
<rect x="830" y="93" width="1" height="1" fill="#404040"/>
<rect x="832" y="93" width="1" height="1" fill="#404040"/>
<rect x="834" y="93" width="1" height="1" fill="#404040"/>
<rect x="845" y="76" width="20" height="20" fill="#f0f0f0" />
<rect x="845" y="76" width="20" height="1" fill="#fff" />
<rect x="845" y="76" width="1" height="20" fill="#fff" />
<rect x="845" y="95" width="20" height="1" fill="#808080" />
<rect x="864" y="76" width="1" height="20" fill="#808080" />
<rect x="849" y="78" width="1" height="1" fill="#000000"/>
<rect x="851" y="78" width="1" height="1" fill="#000000"/>
<rect x="853" y="78" width="1" height="1" fill="#000000"/>
<rect x="855" y="78" width="1" height="1" fill="#000000"/>
<rect x="848" y="79" width="1" height="1" fill="#000000"/>
<rect x="850" y="79" width="1" height="1" fill="#000000"/>
<rect x="852" y="79" width="1" height="1" fill="#000000"/>
<rect x="854" y="79" width="1" height="1" fill="#000000"/>
<rect x="856" y="79" width="1" height="1" fill="#000000"/>
<rect x="858" y="79" width="1" height="1" fill="#404040"/>
<rect x="847" y="80" width="1" height="1" fill="#000000"/>
<rect x="849" y="80" width="1" height="1" fill="#000000"/>
<rect x="851" y="80" width="1" height="1" fill="#000000"/>
<rect x="853" y="80" width="1" height="1" fill="#000000"/>
<rect x="855" y="80" width="1" height="1" fill="#000000"/>
<rect x="857" y="80" width="1" height="1" fill="#404040"/>
<rect x="859" y="80" width="1" height="1" fill="#404040"/>
<rect x="861" y="80" width="1" height="1" fill="#404040"/>
<rect x="848" y="81" width="1" height="1" fill="#000000"/>
<rect x="850" y="81" width="1" height="1" fill="#000000"/>
<rect x="852" y="81" width="1" height="1" fill="#000000"/>
<rect x="854" y="81" width="1" height="1" fill="#000000"/>
<rect x="856" y="81" width="1" height="1" fill="#000000"/>
<rect x="858" y="81" width="1" height="1" fill="#ffff00"/>
<rect x="860" y="81" width="1" height="1" fill="#404040"/>
<rect x="862" y="81" width="1" height="1" fill="#404040"/>
<rect x="847" y="82" width="1" height="1" fill="#000000"/>
<rect x="849" y="82" width="1" height="1" fill="#000000"/>
<rect x="851" y="82" width="1" height="1" fill="#000000"/>
<rect x="853" y="82" width="1" height="1" fill="#000000"/>
<rect x="855" y="82" width="1" height="1" fill="#000000"/>
<rect x="857" y="82" width="1" height="1" fill="#ffff00"/>
<rect x="859" y="82" width="1" height="1" fill="#404040"/>
<rect x="861" y="82" width="1" height="1" fill="#ff0000"/>
<rect x="848" y="83" width="1" height="1" fill="#000000"/>
<rect x="858" y="83" width="1" height="1" fill="#ffff00"/>
<rect x="860" y="83" width="1" height="1" fill="#ff0000"/>
<rect x="862" y="83" width="1" height="1" fill="#404040"/>
<rect x="847" y="84" width="1" height="1" fill="#000000"/>
<rect x="849" y="84" width="1" height="1" fill="#000000"/>
<rect x="851" y="84" width="1" height="1" fill="#404040"/>
<rect x="853" y="84" width="1" height="1" fill="#404040"/>
<rect x="855" y="84" width="1" height="1" fill="#404040"/>
<rect x="857" y="84" width="1" height="1" fill="#ffff00"/>
<rect x="859" y="84" width="1" height="1" fill="#404040"/>
<rect x="861" y="84" width="1" height="1" fill="#ff0000"/>
<rect x="848" y="85" width="1" height="1" fill="#000000"/>
<rect x="850" y="85" width="1" height="1" fill="#404040"/>
<rect x="852" y="85" width="1" height="1" fill="#404040"/>
<rect x="854" y="85" width="1" height="1" fill="#404040"/>
<rect x="856" y="85" width="1" height="1" fill="#404040"/>
<rect x="858" y="85" width="1" height="1" fill="#ffff00"/>
<rect x="860" y="85" width="1" height="1" fill="#ff0000"/>
<rect x="862" y="85" width="1" height="1" fill="#404040"/>
<rect x="851" y="86" width="1" height="1" fill="#404040"/>
<rect x="853" y="86" width="1" height="1" fill="#404040"/>
<rect x="855" y="86" width="1" height="1" fill="#404040"/>
<rect x="857" y="86" width="1" height="1" fill="#ffff00"/>
<rect x="859" y="86" width="1" height="1" fill="#404040"/>
<rect x="861" y="86" width="1" height="1" fill="#ff0000"/>
<rect x="850" y="87" width="1" height="1" fill="#404040"/>
<rect x="852" y="87" width="1" height="1" fill="#404040"/>
<rect x="854" y="87" width="1" height="1" fill="#404040"/>
<rect x="856" y="87" width="1" height="1" fill="#404040"/>
<rect x="858" y="87" width="1" height="1" fill="#ffff00"/>
<rect x="860" y="87" width="1" height="1" fill="#ff0000"/>
<rect x="862" y="87" width="1" height="1" fill="#404040"/>
<rect x="851" y="88" width="1" height="1" fill="#404040"/>
<rect x="853" y="88" width="1" height="1" fill="#00ff00"/>
<rect x="855" y="88" width="1" height="1" fill="#404040"/>
<rect x="857" y="88" width="1" height="1" fill="#ffff00"/>
<rect x="859" y="88" width="1" height="1" fill="#404040"/>
<rect x="861" y="88" width="1" height="1" fill="#ff0000"/>
<rect x="850" y="89" width="1" height="1" fill="#404040"/>
<rect x="852" y="89" width="1" height="1" fill="#00ff00"/>
<rect x="854" y="89" width="1" height="1" fill="#00ff00"/>
<rect x="856" y="89" width="1" height="1" fill="#404040"/>
<rect x="858" y="89" width="1" height="1" fill="#ffff00"/>
<rect x="860" y="89" width="1" height="1" fill="#ff0000"/>
<rect x="862" y="89" width="1" height="1" fill="#404040"/>
<rect x="851" y="90" width="1" height="1" fill="#404040"/>
<rect x="853" y="90" width="1" height="1" fill="#00ff00"/>
<rect x="855" y="90" width="1" height="1" fill="#404040"/>
<rect x="857" y="90" width="1" height="1" fill="#ffff00"/>
<rect x="859" y="90" width="1" height="1" fill="#404040"/>
<rect x="861" y="90" width="1" height="1" fill="#ff0000"/>
<rect x="850" y="91" width="1" height="1" fill="#404040"/>
<rect x="852" y="91" width="1" height="1" fill="#404040"/>
<rect x="854" y="91" width="1" height="1" fill="#404040"/>
<rect x="856" y="91" width="1" height="1" fill="#404040"/>
<rect x="858" y="91" width="1" height="1" fill="#404040"/>
<rect x="860" y="91" width="1" height="1" fill="#404040"/>
<rect x="862" y="91" width="1" height="1" fill="#404040"/>
<rect x="851" y="92" width="1" height="1" fill="#404040"/>
<rect x="853" y="92" width="1" height="1" fill="#404040"/>
<rect x="855" y="92" width="1" height="1" fill="#404040"/>
<rect x="857" y="92" width="1" height="1" fill="#404040"/>
<rect x="859" y="92" width="1" height="1" fill="#404040"/>
<rect x="861" y="92" width="1" height="1" fill="#404040"/>
<rect x="850" y="93" width="1" height="1" fill="#404040"/>
<rect x="852" y="93" width="1" height="1" fill="#404040"/>
<rect x="854" y="93" width="1" height="1" fill="#404040"/>
<rect x="856" y="93" width="1" height="1" fill="#404040"/>
<rect x="858" y="93" width="1" height="1" fill="#404040"/>
<rect x="860" y="93" width="1" height="1" fill="#404040"/>
<rect x="877" y="77" width="2" height="1" fill="#000000"/>
<rect x="875" y="78" width="2" height="1" fill="#000000"/>
<rect x="877" y="78" width="2" height="1" fill="#ffffff"/>
<rect x="879" y="78" width="3" height="1" fill="#000000"/>
<rect x="874" y="79" width="1" height="1" fill="#000000"/>
<rect x="875" y="79" width="1" height="1" fill="#ffffff"/>
<rect x="876" y="79" width="1" height="1" fill="#000000"/>
<rect x="877" y="79" width="2" height="1" fill="#ffffff"/>
<rect x="879" y="79" width="1" height="1" fill="#000000"/>
<rect x="880" y="79" width="2" height="1" fill="#ffffff"/>
<rect x="882" y="79" width="1" height="1" fill="#000000"/>
<rect x="874" y="80" width="1" height="1" fill="#000000"/>
<rect x="875" y="80" width="1" height="1" fill="#ffffff"/>
<rect x="876" y="80" width="1" height="1" fill="#000000"/>
<rect x="877" y="80" width="2" height="1" fill="#ffffff"/>
<rect x="879" y="80" width="1" height="1" fill="#000000"/>
<rect x="880" y="80" width="2" height="1" fill="#ffffff"/>
<rect x="882" y="80" width="2" height="1" fill="#000000"/>
<rect x="874" y="81" width="1" height="1" fill="#000000"/>
<rect x="875" y="81" width="1" height="1" fill="#ffffff"/>
<rect x="876" y="81" width="1" height="1" fill="#000000"/>
<rect x="877" y="81" width="2" height="1" fill="#ffffff"/>
<rect x="879" y="81" width="1" height="1" fill="#000000"/>
<rect x="880" y="81" width="2" height="1" fill="#ffffff"/>
<rect x="882" y="81" width="1" height="1" fill="#000000"/>
<rect x="883" y="81" width="1" height="1" fill="#ffffff"/>
<rect x="884" y="81" width="1" height="1" fill="#000000"/>
<rect x="874" y="82" width="1" height="1" fill="#000000"/>
<rect x="875" y="82" width="7" height="1" fill="#ffffff"/>
<rect x="882" y="82" width="1" height="1" fill="#000000"/>
<rect x="883" y="82" width="1" height="1" fill="#ffffff"/>
<rect x="884" y="82" width="1" height="1" fill="#000000"/>
<rect x="871" y="83" width="2" height="1" fill="#000000"/>
<rect x="874" y="83" width="1" height="1" fill="#000000"/>
<rect x="875" y="83" width="9" height="1" fill="#ffffff"/>
<rect x="884" y="83" width="1" height="1" fill="#000000"/>
<rect x="885" y="83" width="1" height="1" fill="#808080"/>
<rect x="871" y="84" width="1" height="1" fill="#000000"/>
<rect x="872" y="84" width="1" height="1" fill="#ffffff"/>
<rect x="873" y="84" width="2" height="1" fill="#000000"/>
<rect x="875" y="84" width="9" height="1" fill="#ffffff"/>
<rect x="884" y="84" width="1" height="1" fill="#808080"/>
<rect x="885" y="84" width="1" height="1" fill="#a0a0a0"/>
<rect x="886" y="84" width="1" height="1" fill="#808080"/>
<rect x="871" y="85" width="1" height="1" fill="#000000"/>
<rect x="872" y="85" width="2" height="1" fill="#ffffff"/>
<rect x="874" y="85" width="1" height="1" fill="#000000"/>
<rect x="875" y="85" width="9" height="1" fill="#ffffff"/>
<rect x="884" y="85" width="1" height="1" fill="#808080"/>
<rect x="885" y="85" width="1" height="1" fill="#a0a0a0"/>
<rect x="886" y="85" width="1" height="1" fill="#808080"/>
<rect x="872" y="86" width="1" height="1" fill="#000000"/>
<rect x="873" y="86" width="10" height="1" fill="#ffffff"/>
<rect x="883" y="86" width="1" height="1" fill="#000000"/>
<rect x="884" y="86" width="3" height="1" fill="#808080"/>
<rect x="873" y="87" width="1" height="1" fill="#000000"/>
<rect x="874" y="87" width="8" height="1" fill="#ffffff"/>
<rect x="882" y="87" width="2" height="1" fill="#6090d0"/>
<rect x="884" y="87" width="1" height="1" fill="#000000"/>
<rect x="874" y="88" width="1" height="1" fill="#000000"/>
<rect x="875" y="88" width="5" height="1" fill="#ffffff"/>
<rect x="880" y="88" width="4" height="1" fill="#6090d0"/>
<rect x="884" y="88" width="1" height="1" fill="#000000"/>
<rect x="875" y="89" width="1" height="1" fill="#000000"/>
<rect x="876" y="89" width="3" height="1" fill="#ffffff"/>
<rect x="879" y="89" width="1" height="1" fill="#6090d0"/>
<rect x="880" y="89" width="2" height="1" fill="#4080ff"/>
<rect x="882" y="89" width="1" height="1" fill="#6090d0"/>
<rect x="883" y="89" width="1" height="1" fill="#000000"/>
<rect x="876" y="90" width="1" height="1" fill="#000000"/>
<rect x="877" y="90" width="1" height="1" fill="#6090d0"/>
<rect x="878" y="90" width="3" height="1" fill="#4080ff"/>
<rect x="881" y="90" width="1" height="1" fill="#6090d0"/>
<rect x="882" y="90" width="1" height="1" fill="#000000"/>
<rect x="877" y="91" width="1" height="1" fill="#6090d0"/>
<rect x="878" y="91" width="2" height="1" fill="#4080ff"/>
<rect x="880" y="91" width="1" height="1" fill="#6090d0"/>
<rect x="877" y="92" width="3" height="1" fill="#6090d0"/>
<g class="aa" transform="translate(20.5,108)"><path d="M3.500 0 h5 v3.500 h3.500 l-6 6.500 l-6 -6.500 h3.500 z" fill="#0a28f0"/><path d="M4.300 0.500 h1.800 v4 h-1.800 z" fill="#3f7bff"/><circle cx="6" cy="13.500" r="2.600" fill="#0a28f0"/></g>
<g class="aa" transform="translate(0.0,0)"><path d="M40.200 114.800 C41 110.500 46 108.200 50 109.500 C52.500 110.500 54 112.500 54.200 115.200 L56 115.200 L50.600 120.800 L45 115.200 L47.800 115.200 C47.500 113 46 111.800 44.500 111.800 C43 111.800 41.500 113 41 115 Z" fill="#0a28f0"/><path d="M42.500 112 C44.500 110 48 109.800 50 110.800 C51.500 111.800 52.300 113.300 52.500 115 L51 115 C50.500 112.500 48 111 45.500 111 Z" fill="#3f7bff"/><circle cx="42.600" cy="118.400" r="2.400" fill="#0a28f0"/></g>
<g class="aa" transform="translate(64.5,108)"><path d="M6 0 l6 6 h-3.500 v3.500 h-5 v-3.500 h-3.500 z" fill="#0a28f0"/><path d="M6 1.200 l-3.500 3.800 h1.500 l2 -2.200 z" fill="#3f7bff"/><circle cx="6" cy="13.500" r="2.600" fill="#0a28f0"/></g>
<g class="aa" transform="translate(97.5,108)"><path d="M3.500 0 h5 v3.500 h3.500 l-6 6.500 l-6 -6.500 h3.500 z" fill="#0a28f0"/><path d="M4.300 0.500 h1.800 v4 h-1.800 z" fill="#3f7bff"/></g>
<g transform="translate(97,119)"><rect x="0" y="0" width="1" height="5" fill="#0a28f0"/><rect x="2" y="0" width="1" height="5" fill="#0a28f0"/><rect x="11" y="0" width="1" height="5" fill="#0a28f0"/><rect x="13" y="0" width="1" height="5" fill="#0a28f0"/><circle class="aa" cx="7" cy="2.500" r="2.600" fill="#0a28f0"/></g>
<rect x="115" y="116" width="5" height="1" fill="#000" />
<rect x="116" y="117" width="3" height="1" fill="#000" />
<rect x="117" y="118" width="1" height="1" fill="#000" />
<g class="aa" transform="translate(86.5,0)"><path d="M40.200 114.800 C41 110.500 46 108.200 50 109.500 C52.500 110.500 54 112.500 54.200 115.200 L56 115.200 L50.600 120.800 L45 115.200 L47.800 115.200 C47.500 113 46 111.800 44.500 111.800 C43 111.800 41.500 113 41 115 Z" fill="#0a28f0"/><path d="M42.500 112 C44.500 110 48 109.800 50 110.800 C51.500 111.800 52.300 113.300 52.500 115 L51 115 C50.500 112.500 48 111 45.500 111 Z" fill="#3f7bff"/><circle cx="42.600" cy="118.400" r="2.400" fill="#0a28f0"/></g>
<rect x="127" y="121" width="1" height="3" fill="#0a28f0"/><rect x="129" y="121" width="1" height="3" fill="#0a28f0"/><rect x="131" y="121" width="1" height="3" fill="#0a28f0"/><rect x="133" y="121" width="1" height="3" fill="#0a28f0"/><rect x="135" y="121" width="1" height="3" fill="#0a28f0"/><rect x="137" y="121" width="1" height="3" fill="#0a28f0"/><rect x="139" y="121" width="1" height="3" fill="#0a28f0"/><rect x="141" y="121" width="1" height="3" fill="#0a28f0"/>
<g class="aa" transform="translate(150.5,108)"><path d="M6 0 l6 6 h-3.500 v3.500 h-5 v-3.500 h-3.500 z" fill="#0a28f0"/><path d="M6 1.200 l-3.500 3.800 h1.500 l2 -2.200 z" fill="#3f7bff"/></g>
<g transform="translate(150,119)"><rect x="0" y="0" width="1" height="5" fill="#0a28f0"/><rect x="2" y="0" width="1" height="5" fill="#0a28f0"/><rect x="11" y="0" width="1" height="5" fill="#0a28f0"/><rect x="13" y="0" width="1" height="5" fill="#0a28f0"/><circle class="aa" cx="7" cy="2.500" r="2.600" fill="#0a28f0"/></g>
<g class="aa" transform="translate(188,108.5)"><path d="M12.300 0 l1.800 0.300 l-1.600 11 l-1.800 -0.300 z" fill="#b8763a"/><path d="M13 0.400 l0.800 0.100 l-1.500 10 z" fill="#e8c090"/><path d="M1.500 2.500 q2.500 -0.800 4.500 -0.500 q2 -2 6 -2 l-1.200 7.500 q-3 0 -5 1.500 q-2.500 0.300 -5.800 0.500 z" fill="#5cb0f6" stroke="#2b8ae6" stroke-width="1"/><path d="M3 4 q2 -0.500 3.500 -0.300 q1.500 -1.500 4.200 -1.700 l-0.700 4.600 q-2.500 0.200 -4.300 1.500 q-1.500 0.200 -3.600 0.400 z" fill="#a8d8ff"/></g>
<g class="aa" transform="translate(219,108.5)"><path d="M12.300 0 l1.800 0.300 l-1.600 11 l-1.800 -0.300 z" fill="#b8763a"/><path d="M13 0.400 l0.800 0.100 l-1.500 10 z" fill="#e8c090"/><path d="M1.500 2.500 q2.500 -0.800 4.500 -0.500 q2 -2 6 -2 l-1.200 7.500 q-3 0 -5 1.500 q-2.500 0.300 -5.800 0.500 z" fill="#5cb0f6" stroke="#2b8ae6" stroke-width="1"/><path d="M3 4 q2 -0.500 3.500 -0.300 q1.500 -1.500 4.200 -1.700 l-0.700 4.600 q-2.500 0.200 -4.300 1.500 q-1.500 0.200 -3.600 0.400 z" fill="#a8d8ff"/></g>
<g class="aa" transform="translate(250,108.5)"><path d="M12.300 0 l1.800 0.300 l-1.600 11 l-1.800 -0.300 z" fill="#b8763a"/><path d="M13 0.400 l0.800 0.100 l-1.500 10 z" fill="#e8c090"/><path d="M1.500 2.500 q2.500 -0.800 4.500 -0.500 q2 -2 6 -2 l-1.200 7.500 q-3 0 -5 1.500 q-2.500 0.300 -5.800 0.500 z" fill="#5cb0f6" stroke="#2b8ae6" stroke-width="1"/><path d="M3 4 q2 -0.500 3.500 -0.300 q1.500 -1.500 4.200 -1.700 l-0.700 4.600 q-2.500 0.200 -4.300 1.500 q-1.500 0.200 -3.600 0.400 z" fill="#a8d8ff"/></g>
<g class="aa" transform="translate(272,108.5)"><path d="M12.300 0 l1.800 0.300 l-1.600 11 l-1.800 -0.300 z" fill="#b8763a"/><path d="M13 0.400 l0.800 0.100 l-1.500 10 z" fill="#e8c090"/><path d="M1.500 2.500 q2.500 -0.800 4.500 -0.500 q2 -2 6 -2 l-1.200 7.500 q-3 0 -5 1.500 q-2.500 0.300 -5.800 0.500 z" fill="#5cb0f6" stroke="#2b8ae6" stroke-width="1"/><path d="M3 4 q2 -0.500 3.500 -0.300 q1.500 -1.500 4.200 -1.700 l-0.700 4.600 q-2.500 0.200 -4.300 1.500 q-1.500 0.200 -3.600 0.400 z" fill="#a8d8ff"/></g>
<g class="aa" transform="translate(303,108.5)"><path d="M12.300 0 l1.800 0.300 l-1.600 11 l-1.800 -0.300 z" fill="#b8763a"/><path d="M13 0.400 l0.800 0.100 l-1.500 10 z" fill="#e8c090"/><path d="M1.500 2.500 q2.500 -0.800 4.500 -0.500 q2 -2 6 -2 l-1.200 7.500 q-3 0 -5 1.500 q-2.500 0.300 -5.800 0.500 z" fill="#5cb0f6" stroke="#2b8ae6" stroke-width="1"/><path d="M3 4 q2 -0.500 3.500 -0.300 q1.500 -1.500 4.200 -1.700 l-0.700 4.600 q-2.500 0.200 -4.300 1.500 q-1.500 0.200 -3.600 0.400 z" fill="#a8d8ff"/></g>
<g class="aa"><circle cx="200.5" cy="120.5" r="3.800" fill="#4aa02c" stroke="#2f7a1a" stroke-width="0.600"/><path d="M198.2 120.5 h4.600 M200.5 118.2 v4.600" stroke="#fff" stroke-width="1.500"/></g>
<rect x="208" y="116" width="5" height="1" fill="#000" />
<rect x="209" y="117" width="3" height="1" fill="#000" />
<rect x="210" y="118" width="1" height="1" fill="#000" />
<g class="aa"><circle cx="231.5" cy="120.5" r="3.800" fill="#e8681c" stroke="#b84a10" stroke-width="0.600"/><path d="M229.2 120.5 h4.600" stroke="#fff" stroke-width="1.500"/></g>
<rect x="239" y="116" width="5" height="1" fill="#000" />
<rect x="240" y="117" width="3" height="1" fill="#000" />
<rect x="241" y="118" width="1" height="1" fill="#000" />
<g class="aa" transform="translate(253,110)"><path d="M9.500 0.500 l3 2.500 l-8 9 l-4 1.500 l1 -4 z" fill="#f2d34a" stroke="#b8802c" stroke-width="0.800"/><path d="M9.500 0.500 l3 2.500 l-1.800 2 l-3 -2.500 z" fill="#f6c8a8"/><path d="M0.500 13.500 l1 -4 l3 2.500 z" fill="#c48a4a"/></g>
<g class="aa" transform="translate(278,114.5)"><rect x="0" y="0" width="10" height="9.500" rx="1" fill="#3f74d8" stroke="#2a56b0" stroke-width="0.700"/><rect x="2" y="0.500" width="6" height="3.500" fill="#e8f0ff"/><rect x="2" y="5.500" width="6" height="3.500" fill="#c8d8f8"/><rect x="3.500" y="6.500" width="3.500" height="1.500" fill="#58b830"/></g>
<rect x="292" y="116" width="5" height="1" fill="#000" />
<rect x="293" y="117" width="3" height="1" fill="#000" />
<rect x="294" y="118" width="1" height="1" fill="#000" />
<g class="aa" transform="translate(309,115)"><path d="M0.500 2.500 h4.500 v-2.500 l5 4.500 l-5 4.500 v-2.500 h-4.500 z" fill="#5aa83a" stroke="#2f7a1a" stroke-width="0.700"/></g>
<rect x="343" y="108" width="20" height="20" fill="#fff" />
<rect x="343" y="108" width="20" height="1" fill="#808080" />
<rect x="343" y="108" width="1" height="20" fill="#808080" />
<rect x="344" y="127" width="19" height="1" fill="#f4f4f4" />
<rect x="362" y="109" width="1" height="19" fill="#f4f4f4" />
<rect x="350" y="112" width="1" height="1" fill="#000000"/>
<rect x="350" y="113" width="2" height="1" fill="#000000"/>
<rect x="350" y="114" width="3" height="1" fill="#000000"/>
<rect x="350" y="115" width="4" height="1" fill="#000000"/>
<rect x="350" y="116" width="5" height="1" fill="#000000"/>
<rect x="350" y="117" width="6" height="1" fill="#000000"/>
<rect x="350" y="118" width="7" height="1" fill="#000000"/>
<rect x="350" y="119" width="8" height="1" fill="#000000"/>
<rect x="350" y="120" width="5" height="1" fill="#000000"/>
<rect x="350" y="121" width="2" height="1" fill="#000000"/>
<rect x="353" y="121" width="2" height="1" fill="#000000"/>
<rect x="350" y="122" width="1" height="1" fill="#000000"/>
<rect x="353" y="122" width="3" height="1" fill="#000000"/>
<rect x="354" y="123" width="2" height="1" fill="#000000"/>
<rect x="354" y="124" width="3" height="1" fill="#000000"/>
<rect x="355" y="125" width="2" height="1" fill="#000000"/>
<rect x="369" y="108" width="20" height="20" fill="#f0f0f0" />
<rect x="369" y="108" width="20" height="1" fill="#fff" />
<rect x="369" y="108" width="1" height="20" fill="#fff" />
<rect x="369" y="127" width="20" height="1" fill="#808080" />
<rect x="388" y="108" width="1" height="20" fill="#808080" />
<rect x="373" y="112" width="7" height="1" fill="#000000"/>
<rect x="373" y="113" width="7" height="1" fill="#000000"/>
<rect x="373" y="114" width="2" height="1" fill="#000000"/>
<rect x="373" y="115" width="2" height="1" fill="#000000"/>
<rect x="376" y="115" width="8" height="1" fill="#000000"/>
<rect x="373" y="116" width="2" height="1" fill="#000000"/>
<rect x="376" y="116" width="8" height="1" fill="#000000"/>
<rect x="373" y="117" width="2" height="1" fill="#000000"/>
<rect x="376" y="117" width="2" height="1" fill="#000000"/>
<rect x="378" y="117" width="4" height="1" fill="#ffffff"/>
<rect x="382" y="117" width="2" height="1" fill="#000000"/>
<rect x="376" y="118" width="2" height="1" fill="#000000"/>
<rect x="378" y="118" width="4" height="1" fill="#ffffff"/>
<rect x="382" y="118" width="2" height="1" fill="#000000"/>
<rect x="386" y="118" width="1" height="1" fill="#000000"/>
<rect x="376" y="119" width="2" height="1" fill="#000000"/>
<rect x="378" y="119" width="4" height="1" fill="#ffffff"/>
<rect x="382" y="119" width="2" height="1" fill="#000000"/>
<rect x="385" y="119" width="2" height="1" fill="#000000"/>
<rect x="376" y="120" width="2" height="1" fill="#000000"/>
<rect x="378" y="120" width="4" height="1" fill="#ffffff"/>
<rect x="382" y="120" width="2" height="1" fill="#000000"/>
<rect x="385" y="120" width="2" height="1" fill="#000000"/>
<rect x="376" y="121" width="8" height="1" fill="#000000"/>
<rect x="385" y="121" width="2" height="1" fill="#000000"/>
<rect x="376" y="122" width="8" height="1" fill="#000000"/>
<rect x="385" y="122" width="2" height="1" fill="#000000"/>
<rect x="383" y="123" width="4" height="1" fill="#000000"/>
<rect x="380" y="124" width="7" height="1" fill="#000000"/>
<rect x="395" y="108" width="20" height="20" fill="#f0f0f0" />
<rect x="395" y="108" width="20" height="1" fill="#fff" />
<rect x="395" y="108" width="1" height="20" fill="#fff" />
<rect x="395" y="127" width="20" height="1" fill="#808080" />
<rect x="414" y="108" width="1" height="20" fill="#808080" />
<rect x="405" y="110" width="1" height="1" fill="#000000"/>
<rect x="404" y="111" width="1" height="1" fill="#000000"/>
<rect x="406" y="111" width="1" height="1" fill="#000000"/>
<rect x="403" y="112" width="1" height="1" fill="#000000"/>
<rect x="407" y="112" width="1" height="1" fill="#000000"/>
<rect x="404" y="113" width="1" height="1" fill="#000000"/>
<rect x="406" y="113" width="1" height="1" fill="#000000"/>
<rect x="401" y="114" width="1" height="1" fill="#000000"/>
<rect x="405" y="114" width="1" height="1" fill="#000000"/>
<rect x="409" y="114" width="1" height="1" fill="#000000"/>
<rect x="400" y="115" width="1" height="1" fill="#000000"/>
<rect x="402" y="115" width="1" height="1" fill="#000000"/>
<rect x="408" y="115" width="1" height="1" fill="#000000"/>
<rect x="410" y="115" width="1" height="1" fill="#000000"/>
<rect x="399" y="116" width="1" height="1" fill="#000000"/>
<rect x="403" y="116" width="1" height="1" fill="#000000"/>
<rect x="405" y="116" width="1" height="1" fill="#000000"/>
<rect x="407" y="116" width="1" height="1" fill="#000000"/>
<rect x="411" y="116" width="1" height="1" fill="#000000"/>
<rect x="398" y="117" width="1" height="1" fill="#000000"/>
<rect x="404" y="117" width="1" height="1" fill="#000000"/>
<rect x="406" y="117" width="1" height="1" fill="#000000"/>
<rect x="412" y="117" width="1" height="1" fill="#000000"/>
<rect x="399" y="118" width="1" height="1" fill="#000000"/>
<rect x="403" y="118" width="1" height="1" fill="#000000"/>
<rect x="405" y="118" width="1" height="1" fill="#000000"/>
<rect x="407" y="118" width="1" height="1" fill="#000000"/>
<rect x="411" y="118" width="1" height="1" fill="#000000"/>
<rect x="400" y="119" width="1" height="1" fill="#000000"/>
<rect x="402" y="119" width="1" height="1" fill="#000000"/>
<rect x="408" y="119" width="1" height="1" fill="#000000"/>
<rect x="410" y="119" width="1" height="1" fill="#000000"/>
<rect x="401" y="120" width="1" height="1" fill="#000000"/>
<rect x="405" y="120" width="1" height="1" fill="#000000"/>
<rect x="409" y="120" width="1" height="1" fill="#000000"/>
<rect x="404" y="121" width="1" height="1" fill="#000000"/>
<rect x="406" y="121" width="1" height="1" fill="#000000"/>
<rect x="403" y="122" width="1" height="1" fill="#000000"/>
<rect x="407" y="122" width="1" height="1" fill="#000000"/>
<rect x="404" y="123" width="1" height="1" fill="#000000"/>
<rect x="406" y="123" width="1" height="1" fill="#000000"/>
<rect x="405" y="124" width="1" height="1" fill="#000000"/>
<rect x="421" y="108" width="20" height="20" fill="#f0f0f0" />
<rect x="421" y="108" width="20" height="1" fill="#fff" />
<rect x="421" y="108" width="1" height="20" fill="#fff" />
<rect x="421" y="127" width="20" height="1" fill="#808080" />
<rect x="440" y="108" width="1" height="20" fill="#808080" />
<rect x="427" y="112" width="1" height="1" fill="#000000"/>
<rect x="434" y="112" width="1" height="1" fill="#000000"/>
<rect x="427" y="113" width="1" height="1" fill="#000000"/>
<rect x="434" y="113" width="1" height="1" fill="#000000"/>
<rect x="427" y="114" width="1" height="1" fill="#000000"/>
<rect x="434" y="114" width="1" height="1" fill="#000000"/>
<rect x="427" y="115" width="1" height="1" fill="#000000"/>
<rect x="434" y="115" width="1" height="1" fill="#000000"/>
<rect x="427" y="116" width="1" height="1" fill="#000000"/>
<rect x="434" y="116" width="1" height="1" fill="#000000"/>
<rect x="427" y="117" width="1" height="1" fill="#000000"/>
<rect x="434" y="117" width="1" height="1" fill="#000000"/>
<rect x="427" y="118" width="1" height="1" fill="#000000"/>
<rect x="434" y="118" width="1" height="1" fill="#000000"/>
<rect x="427" y="119" width="1" height="1" fill="#000000"/>
<rect x="434" y="119" width="1" height="1" fill="#000000"/>
<rect x="427" y="120" width="1" height="1" fill="#000000"/>
<rect x="434" y="120" width="1" height="1" fill="#000000"/>
<rect x="427" y="121" width="1" height="1" fill="#000000"/>
<rect x="434" y="121" width="1" height="1" fill="#000000"/>
<rect x="425" y="122" width="5" height="1" fill="#000000"/>
<rect x="432" y="122" width="5" height="1" fill="#000000"/>
<rect x="425" y="123" width="1" height="1" fill="#000000"/>
<rect x="426" y="123" width="3" height="1" fill="#ffffff"/>
<rect x="429" y="123" width="1" height="1" fill="#000000"/>
<rect x="432" y="123" width="1" height="1" fill="#000000"/>
<rect x="433" y="123" width="3" height="1" fill="#ffffff"/>
<rect x="436" y="123" width="1" height="1" fill="#000000"/>
<rect x="425" y="124" width="5" height="1" fill="#000000"/>
<rect x="432" y="124" width="5" height="1" fill="#000000"/>
<rect x="447" y="108" width="20" height="20" fill="#f0f0f0" />
<rect x="447" y="108" width="20" height="1" fill="#fff" />
<rect x="447" y="108" width="1" height="20" fill="#fff" />
<rect x="447" y="127" width="20" height="1" fill="#808080" />
<rect x="466" y="108" width="1" height="20" fill="#808080" />
<rect x="452" y="112" width="6" height="1" fill="#000000"/>
<rect x="459" y="112" width="1" height="1" fill="#404040"/>
<rect x="457" y="113" width="1" height="1" fill="#000000"/>
<rect x="459" y="113" width="1" height="1" fill="#404040"/>
<rect x="462" y="113" width="1" height="1" fill="#000000"/>
<rect x="452" y="114" width="1" height="1" fill="#000000"/>
<rect x="457" y="114" width="1" height="1" fill="#000000"/>
<rect x="459" y="114" width="1" height="1" fill="#404040"/>
<rect x="461" y="114" width="2" height="1" fill="#000000"/>
<rect x="450" y="115" width="4" height="1" fill="#000000"/>
<rect x="457" y="115" width="1" height="1" fill="#000000"/>
<rect x="459" y="115" width="1" height="1" fill="#404040"/>
<rect x="460" y="115" width="4" height="1" fill="#000000"/>
<rect x="450" y="116" width="4" height="1" fill="#000000"/>
<rect x="457" y="116" width="1" height="1" fill="#000000"/>
<rect x="459" y="116" width="1" height="1" fill="#404040"/>
<rect x="461" y="116" width="2" height="1" fill="#000000"/>
<rect x="452" y="117" width="1" height="1" fill="#000000"/>
<rect x="457" y="117" width="1" height="1" fill="#000000"/>
<rect x="459" y="117" width="1" height="1" fill="#404040"/>
<rect x="462" y="117" width="1" height="1" fill="#000000"/>
<rect x="457" y="118" width="1" height="1" fill="#000000"/>
<rect x="459" y="118" width="1" height="1" fill="#404040"/>
<rect x="452" y="119" width="1" height="1" fill="#000000"/>
<rect x="457" y="119" width="1" height="1" fill="#000000"/>
<rect x="459" y="119" width="1" height="1" fill="#404040"/>
<rect x="462" y="119" width="1" height="1" fill="#000000"/>
<rect x="450" y="120" width="4" height="1" fill="#000000"/>
<rect x="457" y="120" width="1" height="1" fill="#000000"/>
<rect x="459" y="120" width="1" height="1" fill="#404040"/>
<rect x="461" y="120" width="2" height="1" fill="#000000"/>
<rect x="450" y="121" width="4" height="1" fill="#000000"/>
<rect x="457" y="121" width="1" height="1" fill="#000000"/>
<rect x="459" y="121" width="1" height="1" fill="#404040"/>
<rect x="460" y="121" width="4" height="1" fill="#000000"/>
<rect x="452" y="122" width="1" height="1" fill="#000000"/>
<rect x="457" y="122" width="1" height="1" fill="#000000"/>
<rect x="459" y="122" width="1" height="1" fill="#404040"/>
<rect x="461" y="122" width="2" height="1" fill="#000000"/>
<rect x="457" y="123" width="1" height="1" fill="#000000"/>
<rect x="459" y="123" width="1" height="1" fill="#404040"/>
<rect x="462" y="123" width="1" height="1" fill="#000000"/>
<rect x="457" y="124" width="6" height="1" fill="#000000"/>
<rect x="484" y="110" width="8" height="1" fill="#000000"/>
<rect x="484" y="111" width="2" height="1" fill="#000000"/>
<rect x="486" y="111" width="4" height="1" fill="#ff0000"/>
<rect x="490" y="111" width="2" height="1" fill="#000000"/>
<rect x="484" y="112" width="1" height="1" fill="#000000"/>
<rect x="485" y="112" width="6" height="1" fill="#ff0000"/>
<rect x="491" y="112" width="1" height="1" fill="#000000"/>
<rect x="484" y="113" width="1" height="1" fill="#000000"/>
<rect x="485" y="113" width="6" height="1" fill="#ff0000"/>
<rect x="491" y="113" width="1" height="1" fill="#000000"/>
<rect x="495" y="113" width="2" height="1" fill="#000000"/>
<rect x="484" y="114" width="1" height="1" fill="#000000"/>
<rect x="485" y="114" width="6" height="1" fill="#ff0000"/>
<rect x="491" y="114" width="1" height="1" fill="#000000"/>
<rect x="495" y="114" width="1" height="1" fill="#000000"/>
<rect x="496" y="114" width="1" height="1" fill="#ffffff"/>
<rect x="497" y="114" width="1" height="1" fill="#000000"/>
<rect x="484" y="115" width="2" height="1" fill="#000000"/>
<rect x="486" y="115" width="4" height="1" fill="#ff0000"/>
<rect x="490" y="115" width="2" height="1" fill="#000000"/>
<rect x="492" y="115" width="3" height="1" fill="#a8c8f0"/>
<rect x="495" y="115" width="1" height="1" fill="#000000"/>
<rect x="496" y="115" width="2" height="1" fill="#ffffff"/>
<rect x="498" y="115" width="1" height="1" fill="#000000"/>
<rect x="484" y="116" width="3" height="1" fill="#000000"/>
<rect x="487" y="116" width="1" height="1" fill="#ffff00"/>
<rect x="488" y="116" width="1" height="1" fill="#ffffff"/>
<rect x="489" y="116" width="3" height="1" fill="#000000"/>
<rect x="495" y="116" width="1" height="1" fill="#000000"/>
<rect x="496" y="116" width="3" height="1" fill="#ffffff"/>
<rect x="499" y="116" width="1" height="1" fill="#000000"/>
<rect x="484" y="117" width="2" height="1" fill="#000000"/>
<rect x="486" y="117" width="1" height="1" fill="#ffff00"/>
<rect x="487" y="117" width="1" height="1" fill="#ffffff"/>
<rect x="488" y="117" width="1" height="1" fill="#ffff00"/>
<rect x="489" y="117" width="1" height="1" fill="#ffffff"/>
<rect x="490" y="117" width="2" height="1" fill="#000000"/>
<rect x="495" y="117" width="1" height="1" fill="#000000"/>
<rect x="496" y="117" width="3" height="1" fill="#ffffff"/>
<rect x="499" y="117" width="1" height="1" fill="#000000"/>
<rect x="484" y="118" width="2" height="1" fill="#000000"/>
<rect x="486" y="118" width="1" height="1" fill="#ffffff"/>
<rect x="487" y="118" width="1" height="1" fill="#ffff00"/>
<rect x="488" y="118" width="1" height="1" fill="#ffffff"/>
<rect x="489" y="118" width="1" height="1" fill="#ffff00"/>
<rect x="490" y="118" width="2" height="1" fill="#000000"/>
<rect x="495" y="118" width="1" height="1" fill="#000000"/>
<rect x="496" y="118" width="3" height="1" fill="#ffffff"/>
<rect x="499" y="118" width="1" height="1" fill="#000000"/>
<rect x="484" y="119" width="3" height="1" fill="#000000"/>
<rect x="487" y="119" width="1" height="1" fill="#ffffff"/>
<rect x="488" y="119" width="1" height="1" fill="#ffff00"/>
<rect x="489" y="119" width="3" height="1" fill="#000000"/>
<rect x="492" y="119" width="3" height="1" fill="#a8c8f0"/>
<rect x="495" y="119" width="1" height="1" fill="#000000"/>
<rect x="496" y="119" width="2" height="1" fill="#ffffff"/>
<rect x="498" y="119" width="1" height="1" fill="#000000"/>
<rect x="484" y="120" width="8" height="1" fill="#000000"/>
<rect x="495" y="120" width="1" height="1" fill="#000000"/>
<rect x="496" y="120" width="1" height="1" fill="#ffffff"/>
<rect x="497" y="120" width="1" height="1" fill="#000000"/>
<rect x="484" y="121" width="3" height="1" fill="#000000"/>
<rect x="487" y="121" width="1" height="1" fill="#00ff00"/>
<rect x="488" y="121" width="1" height="1" fill="#ffffff"/>
<rect x="489" y="121" width="3" height="1" fill="#000000"/>
<rect x="495" y="121" width="2" height="1" fill="#000000"/>
<rect x="484" y="122" width="2" height="1" fill="#000000"/>
<rect x="486" y="122" width="1" height="1" fill="#00ff00"/>
<rect x="487" y="122" width="1" height="1" fill="#ffffff"/>
<rect x="488" y="122" width="1" height="1" fill="#00ff00"/>
<rect x="489" y="122" width="1" height="1" fill="#ffffff"/>
<rect x="490" y="122" width="2" height="1" fill="#000000"/>
<rect x="484" y="123" width="2" height="1" fill="#000000"/>
<rect x="486" y="123" width="1" height="1" fill="#ffffff"/>
<rect x="487" y="123" width="1" height="1" fill="#00ff00"/>
<rect x="488" y="123" width="1" height="1" fill="#ffffff"/>
<rect x="489" y="123" width="1" height="1" fill="#00ff00"/>
<rect x="490" y="123" width="2" height="1" fill="#000000"/>
<rect x="484" y="124" width="3" height="1" fill="#000000"/>
<rect x="487" y="124" width="1" height="1" fill="#ffffff"/>
<rect x="488" y="124" width="1" height="1" fill="#00ff00"/>
<rect x="489" y="124" width="3" height="1" fill="#000000"/>
<rect x="484" y="125" width="8" height="1" fill="#000000"/>
<rect x="529" y="108" width="2" height="1" fill="#ffd800"/>
<rect x="529" y="109" width="2" height="1" fill="#ffd800"/>
<rect x="535" y="109" width="2" height="1" fill="#ffd800"/>
<rect x="529" y="110" width="2" height="1" fill="#ffd800"/>
<rect x="535" y="110" width="2" height="1" fill="#ffd800"/>
<rect x="529" y="111" width="2" height="1" fill="#ffd800"/>
<rect x="533" y="111" width="6" height="1" fill="#ffd800"/>
<rect x="529" y="112" width="2" height="1" fill="#ffd800"/>
<rect x="533" y="112" width="6" height="1" fill="#ffd800"/>
<rect x="529" y="113" width="2" height="1" fill="#ffd800"/>
<rect x="535" y="113" width="2" height="1" fill="#ffd800"/>
<rect x="529" y="114" width="2" height="1" fill="#ffd800"/>
<rect x="535" y="114" width="2" height="1" fill="#ffd800"/>
<rect x="529" y="115" width="2" height="1" fill="#ffd800"/>
<rect x="529" y="116" width="2" height="1" fill="#ffd800"/>
<rect x="529" y="117" width="2" height="1" fill="#ffd800"/>
<rect x="524" y="118" width="12" height="1" fill="#ffd800"/>
<rect x="524" y="119" width="2" height="1" fill="#ffd800"/>
<rect x="526" y="119" width="8" height="1" fill="#ffe870"/>
<rect x="534" y="119" width="2" height="1" fill="#ffd800"/>
<rect x="536" y="119" width="1" height="1" fill="#5a4000"/>
<rect x="524" y="120" width="2" height="1" fill="#ffd800"/>
<rect x="526" y="120" width="8" height="1" fill="#ffe870"/>
<rect x="534" y="120" width="2" height="1" fill="#ffd800"/>
<rect x="536" y="120" width="1" height="1" fill="#5a4000"/>
<rect x="524" y="121" width="12" height="1" fill="#ffd800"/>
<rect x="536" y="121" width="1" height="1" fill="#5a4000"/>
<rect x="525" y="122" width="11" height="1" fill="#5a4000"/>
<rect x="551" y="108" width="2" height="1" fill="#ffd800"/>
<rect x="551" y="109" width="2" height="1" fill="#ffd800"/>
<rect x="551" y="110" width="2" height="1" fill="#ffd800"/>
<rect x="551" y="111" width="2" height="1" fill="#ffd800"/>
<rect x="554" y="111" width="7" height="1" fill="#ffd800"/>
<rect x="551" y="112" width="2" height="1" fill="#ffd800"/>
<rect x="554" y="112" width="7" height="1" fill="#ffd800"/>
<rect x="551" y="113" width="2" height="1" fill="#ffd800"/>
<rect x="555" y="113" width="6" height="1" fill="#5a4000"/>
<rect x="551" y="114" width="2" height="1" fill="#ffd800"/>
<rect x="551" y="115" width="2" height="1" fill="#ffd800"/>
<rect x="551" y="116" width="2" height="1" fill="#ffd800"/>
<rect x="551" y="117" width="2" height="1" fill="#ffd800"/>
<rect x="546" y="118" width="12" height="1" fill="#ffd800"/>
<rect x="546" y="119" width="2" height="1" fill="#ffd800"/>
<rect x="548" y="119" width="8" height="1" fill="#ffe870"/>
<rect x="556" y="119" width="2" height="1" fill="#ffd800"/>
<rect x="558" y="119" width="1" height="1" fill="#5a4000"/>
<rect x="546" y="120" width="2" height="1" fill="#ffd800"/>
<rect x="548" y="120" width="8" height="1" fill="#ffe870"/>
<rect x="556" y="120" width="2" height="1" fill="#ffd800"/>
<rect x="558" y="120" width="1" height="1" fill="#5a4000"/>
<rect x="546" y="121" width="12" height="1" fill="#ffd800"/>
<rect x="558" y="121" width="1" height="1" fill="#5a4000"/>
<rect x="547" y="122" width="11" height="1" fill="#5a4000"/>
<g transform="translate(568,109)"><rect x="0" y="0" width="6" height="1" fill="#008030"/><rect x="5" y="0" width="1" height="14" fill="#008030"/><rect x="5" y="13" width="11" height="1" fill="#008030"/><path class="aa" d="M7.500 6 l3.500 -3.500 v2.500 h5 v2 h-5 v2.500 z" fill="#3a10e0"/></g>
<g transform="translate(590,109)"><rect x="0" y="13" width="11" height="1" fill="#008030"/><rect x="10" y="0" width="1" height="14" fill="#008030"/><rect x="10" y="0" width="7" height="1" fill="#008030"/><path class="aa" d="M9 6 l-3.500 -3.500 v2.500 h-5 v2 h5 v2.500 z" fill="#3a10e0"/></g>
<rect x="612" y="109" width="1" height="1" fill="#008030"/>
<rect x="614" y="109" width="1" height="1" fill="#008030"/>
<rect x="616" y="109" width="1" height="1" fill="#008030"/>
<rect x="617" y="110" width="1" height="1" fill="#008030"/>
<rect x="617" y="112" width="1" height="1" fill="#008030"/>
<rect x="615" y="113" width="1" height="1" fill="#4020d0"/>
<rect x="617" y="113" width="1" height="1" fill="#4020d0"/>
<rect x="619" y="113" width="1" height="1" fill="#4020d0"/>
<rect x="616" y="114" width="1" height="1" fill="#4020d0"/>
<rect x="617" y="114" width="1" height="1" fill="#008030"/>
<rect x="618" y="114" width="1" height="1" fill="#4020d0"/>
<rect x="617" y="115" width="1" height="1" fill="#4020d0"/>
<rect x="619" y="115" width="1" height="1" fill="#4020d0"/>
<rect x="617" y="116" width="1" height="1" fill="#008030"/>
<rect x="618" y="116" width="1" height="1" fill="#4020d0"/>
<rect x="620" y="116" width="1" height="1" fill="#4020d0"/>
<rect x="622" y="116" width="1" height="1" fill="#4020d0"/>
<rect x="619" y="117" width="1" height="1" fill="#4020d0"/>
<rect x="617" y="118" width="1" height="1" fill="#008030"/>
<rect x="617" y="120" width="1" height="1" fill="#008030"/>
<rect x="617" y="122" width="1" height="1" fill="#008030"/>
<rect x="619" y="122" width="1" height="1" fill="#008030"/>
<rect x="621" y="122" width="1" height="1" fill="#008030"/>
<rect x="623" y="122" width="1" height="1" fill="#008030"/>
<rect x="625" y="122" width="1" height="1" fill="#008030"/>
<rect x="627" y="122" width="1" height="1" fill="#008030"/>
<rect x="634" y="109" width="1" height="1" fill="#008030"/>
<rect x="636" y="109" width="1" height="1" fill="#008030"/>
<rect x="638" y="109" width="1" height="1" fill="#008030"/>
<rect x="640" y="109" width="1" height="1" fill="#008030"/>
<rect x="642" y="109" width="1" height="1" fill="#008030"/>
<rect x="642" y="110" width="1" height="1" fill="#008030"/>
<rect x="642" y="112" width="1" height="1" fill="#008030"/>
<rect x="641" y="113" width="1" height="1" fill="#4020d0"/>
<rect x="643" y="113" width="1" height="1" fill="#4020d0"/>
<rect x="642" y="114" width="1" height="1" fill="#4020d0"/>
<rect x="642" y="115" width="1" height="1" fill="#008030"/>
<rect x="638" y="116" width="1" height="1" fill="#4020d0"/>
<rect x="640" y="116" width="1" height="1" fill="#4020d0"/>
<rect x="636" y="117" width="1" height="1" fill="#4020d0"/>
<rect x="638" y="117" width="1" height="1" fill="#4020d0"/>
<rect x="640" y="117" width="1" height="1" fill="#4020d0"/>
<rect x="642" y="117" width="1" height="1" fill="#008030"/>
<rect x="638" y="118" width="1" height="1" fill="#4020d0"/>
<rect x="642" y="119" width="1" height="1" fill="#008030"/>
<rect x="642" y="121" width="1" height="1" fill="#008030"/>
<rect x="642" y="122" width="1" height="1" fill="#008030"/>
<rect x="644" y="122" width="1" height="1" fill="#008030"/>
<rect x="646" y="122" width="1" height="1" fill="#008030"/>
<rect x="648" y="122" width="1" height="1" fill="#008030"/>
<rect x="650" y="122" width="1" height="1" fill="#008030"/>
<rect x="662" y="109" width="1" height="1" fill="#008030"/>
<rect x="664" y="109" width="1" height="1" fill="#008030"/>
<rect x="666" y="109" width="1" height="1" fill="#008030"/>
<rect x="668" y="109" width="1" height="1" fill="#008030"/>
<rect x="670" y="109" width="1" height="1" fill="#008030"/>
<rect x="662" y="110" width="1" height="1" fill="#008030"/>
<rect x="662" y="112" width="1" height="1" fill="#008030"/>
<rect x="661" y="113" width="1" height="1" fill="#4020d0"/>
<rect x="663" y="113" width="1" height="1" fill="#4020d0"/>
<rect x="662" y="114" width="1" height="1" fill="#4020d0"/>
<rect x="662" y="115" width="1" height="1" fill="#008030"/>
<rect x="664" y="116" width="1" height="1" fill="#4020d0"/>
<rect x="666" y="116" width="1" height="1" fill="#4020d0"/>
<rect x="662" y="117" width="1" height="1" fill="#008030"/>
<rect x="664" y="117" width="1" height="1" fill="#4020d0"/>
<rect x="666" y="117" width="1" height="1" fill="#4020d0"/>
<rect x="668" y="117" width="1" height="1" fill="#4020d0"/>
<rect x="664" y="118" width="1" height="1" fill="#4020d0"/>
<rect x="662" y="119" width="1" height="1" fill="#008030"/>
<rect x="662" y="121" width="1" height="1" fill="#008030"/>
<rect x="657" y="122" width="1" height="1" fill="#008030"/>
<rect x="659" y="122" width="1" height="1" fill="#008030"/>
<rect x="661" y="122" width="1" height="1" fill="#008030"/>
<rect x="688" y="109" width="1" height="1" fill="#008030"/>
<rect x="690" y="109" width="1" height="1" fill="#008030"/>
<rect x="692" y="109" width="1" height="1" fill="#008030"/>
<rect x="688" y="110" width="1" height="1" fill="#008030"/>
<rect x="688" y="112" width="1" height="1" fill="#008030"/>
<rect x="687" y="113" width="1" height="1" fill="#4020d0"/>
<rect x="689" y="113" width="1" height="1" fill="#4020d0"/>
<rect x="688" y="114" width="1" height="1" fill="#4020d0"/>
<rect x="688" y="115" width="1" height="1" fill="#008030"/>
<rect x="684" y="116" width="1" height="1" fill="#4020d0"/>
<rect x="686" y="116" width="1" height="1" fill="#4020d0"/>
<rect x="682" y="117" width="1" height="1" fill="#4020d0"/>
<rect x="684" y="117" width="1" height="1" fill="#4020d0"/>
<rect x="686" y="117" width="1" height="1" fill="#4020d0"/>
<rect x="688" y="117" width="1" height="1" fill="#008030"/>
<rect x="684" y="118" width="1" height="1" fill="#4020d0"/>
<rect x="688" y="119" width="1" height="1" fill="#008030"/>
<rect x="688" y="121" width="1" height="1" fill="#008030"/>
<rect x="679" y="122" width="1" height="1" fill="#008030"/>
<rect x="681" y="122" width="1" height="1" fill="#008030"/>
<rect x="683" y="122" width="1" height="1" fill="#008030"/>
<rect x="685" y="122" width="1" height="1" fill="#008030"/>
<rect x="687" y="122" width="1" height="1" fill="#008030"/>
<rect x="18" y="141" width="1" height="1" fill="#000000"/>
<rect x="20" y="141" width="1" height="1" fill="#000000"/>
<rect x="19" y="142" width="1" height="1" fill="#000000"/>
<rect x="21" y="142" width="2" height="1" fill="#000000"/>
<rect x="23" y="143" width="1" height="1" fill="#000000"/>
<rect x="24" y="144" width="1" height="1" fill="#000000"/>
<rect x="25" y="145" width="1" height="1" fill="#000000"/>
<rect x="27" y="145" width="1" height="1" fill="#4080ff"/>
<rect x="26" y="146" width="1" height="1" fill="#4080ff"/>
<rect x="28" y="146" width="1" height="1" fill="#4080ff"/>
<rect x="30" y="146" width="1" height="1" fill="#4080ff"/>
<rect x="18" y="147" width="2" height="1" fill="#000000"/>
<rect x="21" y="147" width="1" height="1" fill="#000000"/>
<rect x="25" y="147" width="1" height="1" fill="#4080ff"/>
<rect x="27" y="147" width="1" height="1" fill="#4080ff"/>
<rect x="29" y="147" width="1" height="1" fill="#4080ff"/>
<rect x="31" y="147" width="1" height="1" fill="#4080ff"/>
<rect x="33" y="147" width="1" height="1" fill="#4080ff"/>
<rect x="20" y="148" width="1" height="1" fill="#000000"/>
<rect x="22" y="148" width="1" height="1" fill="#000000"/>
<rect x="24" y="148" width="1" height="1" fill="#4080ff"/>
<rect x="26" y="148" width="3" height="1" fill="#4080ff"/>
<rect x="30" y="148" width="1" height="1" fill="#4080ff"/>
<rect x="32" y="148" width="1" height="1" fill="#4080ff"/>
<rect x="25" y="149" width="1" height="1" fill="#4080ff"/>
<rect x="27" y="149" width="1" height="1" fill="#4080ff"/>
<rect x="29" y="149" width="1" height="1" fill="#4080ff"/>
<rect x="31" y="149" width="1" height="1" fill="#4080ff"/>
<rect x="33" y="149" width="1" height="1" fill="#4080ff"/>
<rect x="26" y="150" width="1" height="1" fill="#4080ff"/>
<rect x="28" y="150" width="1" height="1" fill="#4080ff"/>
<rect x="30" y="150" width="1" height="1" fill="#4080ff"/>
<rect x="25" y="151" width="1" height="1" fill="#000000"/>
<rect x="27" y="151" width="1" height="1" fill="#4080ff"/>
<rect x="24" y="152" width="1" height="1" fill="#000000"/>
<rect x="23" y="153" width="1" height="1" fill="#000000"/>
<rect x="19" y="154" width="1" height="1" fill="#000000"/>
<rect x="21" y="154" width="2" height="1" fill="#000000"/>
<rect x="18" y="155" width="1" height="1" fill="#000000"/>
<rect x="20" y="155" width="1" height="1" fill="#000000"/>
<rect x="39" y="148" width="1" height="1" fill="#000000"/>
<rect x="42" y="148" width="1" height="1" fill="#000000"/>
<rect x="40" y="149" width="2" height="1" fill="#000000"/>
<rect x="62" y="141" width="1" height="1" fill="#000000"/>
<rect x="64" y="141" width="1" height="1" fill="#000000"/>
<rect x="60" y="142" width="2" height="1" fill="#000000"/>
<rect x="63" y="142" width="1" height="1" fill="#000000"/>
<rect x="59" y="143" width="1" height="1" fill="#000000"/>
<rect x="58" y="144" width="1" height="1" fill="#000000"/>
<rect x="55" y="145" width="1" height="1" fill="#4080ff"/>
<rect x="57" y="145" width="1" height="1" fill="#000000"/>
<rect x="52" y="146" width="1" height="1" fill="#4080ff"/>
<rect x="54" y="146" width="1" height="1" fill="#4080ff"/>
<rect x="56" y="146" width="1" height="1" fill="#4080ff"/>
<rect x="49" y="147" width="1" height="1" fill="#4080ff"/>
<rect x="51" y="147" width="1" height="1" fill="#4080ff"/>
<rect x="53" y="147" width="1" height="1" fill="#4080ff"/>
<rect x="55" y="147" width="1" height="1" fill="#4080ff"/>
<rect x="57" y="147" width="1" height="1" fill="#4080ff"/>
<rect x="61" y="147" width="1" height="1" fill="#000000"/>
<rect x="63" y="147" width="2" height="1" fill="#000000"/>
<rect x="50" y="148" width="1" height="1" fill="#4080ff"/>
<rect x="52" y="148" width="1" height="1" fill="#4080ff"/>
<rect x="54" y="148" width="3" height="1" fill="#4080ff"/>
<rect x="58" y="148" width="1" height="1" fill="#4080ff"/>
<rect x="60" y="148" width="1" height="1" fill="#000000"/>
<rect x="62" y="148" width="1" height="1" fill="#000000"/>
<rect x="49" y="149" width="1" height="1" fill="#4080ff"/>
<rect x="51" y="149" width="1" height="1" fill="#4080ff"/>
<rect x="53" y="149" width="1" height="1" fill="#4080ff"/>
<rect x="55" y="149" width="1" height="1" fill="#4080ff"/>
<rect x="57" y="149" width="1" height="1" fill="#4080ff"/>
<rect x="52" y="150" width="1" height="1" fill="#4080ff"/>
<rect x="54" y="150" width="1" height="1" fill="#4080ff"/>
<rect x="56" y="150" width="1" height="1" fill="#4080ff"/>
<rect x="55" y="151" width="1" height="1" fill="#4080ff"/>
<rect x="57" y="151" width="1" height="1" fill="#000000"/>
<rect x="58" y="152" width="1" height="1" fill="#000000"/>
<rect x="59" y="153" width="1" height="1" fill="#000000"/>
<rect x="60" y="154" width="2" height="1" fill="#000000"/>
<rect x="63" y="154" width="1" height="1" fill="#000000"/>
<rect x="62" y="155" width="1" height="1" fill="#000000"/>
<rect x="64" y="155" width="1" height="1" fill="#000000"/>
<rect x="70" y="148" width="1" height="1" fill="#000000"/>
<rect x="73" y="148" width="1" height="1" fill="#000000"/>
<rect x="71" y="149" width="2" height="1" fill="#000000"/>
<rect x="80" y="142" width="1" height="1" fill="#404040"/>
<rect x="82" y="142" width="1" height="1" fill="#404040"/>
<rect x="84" y="142" width="1" height="1" fill="#404040"/>
<rect x="87" y="142" width="1" height="1" fill="#404040"/>
<rect x="81" y="143" width="1" height="1" fill="#404040"/>
<rect x="83" y="143" width="1" height="1" fill="#404040"/>
<rect x="85" y="143" width="1" height="1" fill="#404040"/>
<rect x="80" y="144" width="1" height="1" fill="#404040"/>
<rect x="82" y="144" width="1" height="1" fill="#404040"/>
<rect x="84" y="144" width="1" height="1" fill="#404040"/>
<rect x="87" y="144" width="1" height="1" fill="#000000"/>
<rect x="86" y="145" width="1" height="1" fill="#000000"/>
<rect x="88" y="145" width="1" height="1" fill="#000000"/>
<rect x="85" y="146" width="1" height="1" fill="#000000"/>
<rect x="87" y="146" width="1" height="1" fill="#00ff00"/>
<rect x="89" y="146" width="1" height="1" fill="#000000"/>
<rect x="80" y="147" width="1" height="1" fill="#404040"/>
<rect x="82" y="147" width="1" height="1" fill="#404040"/>
<rect x="84" y="147" width="1" height="1" fill="#000000"/>
<rect x="86" y="147" width="1" height="1" fill="#00ff00"/>
<rect x="88" y="147" width="1" height="1" fill="#00ff00"/>
<rect x="90" y="147" width="1" height="1" fill="#000000"/>
<rect x="93" y="147" width="1" height="1" fill="#0000ff"/>
<rect x="81" y="148" width="1" height="1" fill="#404040"/>
<rect x="83" y="148" width="1" height="1" fill="#000000"/>
<rect x="85" y="148" width="1" height="1" fill="#00ff00"/>
<rect x="87" y="148" width="1" height="1" fill="#00ff00"/>
<rect x="89" y="148" width="1" height="1" fill="#00ff00"/>
<rect x="91" y="148" width="1" height="1" fill="#000000"/>
<rect x="92" y="148" width="1" height="1" fill="#0000ff"/>
<rect x="94" y="148" width="1" height="1" fill="#0000ff"/>
<rect x="80" y="149" width="1" height="1" fill="#404040"/>
<rect x="82" y="149" width="1" height="1" fill="#404040"/>
<rect x="84" y="149" width="1" height="1" fill="#000000"/>
<rect x="86" y="149" width="1" height="1" fill="#00ff00"/>
<rect x="88" y="149" width="1" height="1" fill="#00ff00"/>
<rect x="90" y="149" width="1" height="1" fill="#000000"/>
<rect x="93" y="149" width="1" height="1" fill="#0000ff"/>
<rect x="85" y="150" width="1" height="1" fill="#000000"/>
<rect x="87" y="150" width="1" height="1" fill="#00ff00"/>
<rect x="89" y="150" width="1" height="1" fill="#000000"/>
<rect x="86" y="151" width="1" height="1" fill="#000000"/>
<rect x="88" y="151" width="1" height="1" fill="#000000"/>
<rect x="80" y="152" width="1" height="1" fill="#404040"/>
<rect x="82" y="152" width="1" height="1" fill="#404040"/>
<rect x="84" y="152" width="1" height="1" fill="#404040"/>
<rect x="87" y="152" width="1" height="1" fill="#000000"/>
<rect x="81" y="153" width="1" height="1" fill="#404040"/>
<rect x="83" y="153" width="1" height="1" fill="#404040"/>
<rect x="85" y="153" width="1" height="1" fill="#404040"/>
<rect x="80" y="154" width="1" height="1" fill="#404040"/>
<rect x="82" y="154" width="1" height="1" fill="#404040"/>
<rect x="84" y="154" width="1" height="1" fill="#404040"/>
<rect x="87" y="154" width="1" height="1" fill="#404040"/>
<text x="115.5" y="152" font-size="10.9" fill="#858585" text-anchor="start" >Search:</text>
<rect x="158" y="140" width="115" height="18" fill="#f0f0f0" />
<rect x="158" y="140" width="115" height="1" fill="#808080" />
<rect x="158" y="140" width="1" height="18" fill="#808080" />
<rect x="159" y="157" width="114" height="1" fill="#fff" />
<rect x="272" y="141" width="1" height="17" fill="#fff" />
<rect x="276" y="140" width="17" height="17" fill="#f0f0f0" />
<rect x="276" y="140" width="17" height="1" fill="#fff" />
<rect x="276" y="140" width="1" height="17" fill="#fff" />
<rect x="276" y="156" width="17" height="1" fill="#808080" />
<rect x="292" y="140" width="1" height="17" fill="#808080" />
<rect x="279" y="146" width="1" height="1" fill="#000000"/>
<rect x="281" y="146" width="1" height="1" fill="#000000"/>
<rect x="283" y="146" width="1" height="1" fill="#000000"/>
<rect x="285" y="146" width="1" height="1" fill="#000000"/>
<rect x="287" y="146" width="1" height="1" fill="#000000"/>
<rect x="289" y="146" width="1" height="1" fill="#000000"/>
<rect x="280" y="147" width="1" height="1" fill="#000000"/>
<rect x="282" y="147" width="1" height="1" fill="#000000"/>
<rect x="284" y="147" width="1" height="1" fill="#000000"/>
<rect x="286" y="147" width="1" height="1" fill="#000000"/>
<rect x="288" y="147" width="1" height="1" fill="#000000"/>
<rect x="281" y="148" width="1" height="1" fill="#000000"/>
<rect x="283" y="148" width="1" height="1" fill="#000000"/>
<rect x="285" y="148" width="1" height="1" fill="#000000"/>
<rect x="287" y="148" width="1" height="1" fill="#000000"/>
<rect x="282" y="149" width="1" height="1" fill="#000000"/>
<rect x="284" y="149" width="1" height="1" fill="#000000"/>
<rect x="286" y="149" width="1" height="1" fill="#000000"/>
<rect x="283" y="150" width="1" height="1" fill="#000000"/>
<rect x="285" y="150" width="1" height="1" fill="#000000"/>
<rect x="284" y="151" width="1" height="1" fill="#000000"/>
<rect x="303" y="141" width="1" height="1" fill="#606060"/>
<rect x="309" y="141" width="1" height="1" fill="#606060"/>
<rect x="302" y="142" width="1" height="1" fill="#606060"/>
<rect x="304" y="142" width="1" height="1" fill="#606060"/>
<rect x="308" y="142" width="1" height="1" fill="#606060"/>
<rect x="310" y="142" width="1" height="1" fill="#606060"/>
<rect x="301" y="143" width="1" height="1" fill="#606060"/>
<rect x="303" y="143" width="1" height="1" fill="#606060"/>
<rect x="305" y="143" width="1" height="1" fill="#606060"/>
<rect x="307" y="143" width="1" height="1" fill="#606060"/>
<rect x="309" y="143" width="1" height="1" fill="#606060"/>
<rect x="311" y="143" width="1" height="1" fill="#606060"/>
<rect x="302" y="144" width="1" height="1" fill="#606060"/>
<rect x="304" y="144" width="1" height="1" fill="#606060"/>
<rect x="308" y="144" width="1" height="1" fill="#606060"/>
<rect x="310" y="144" width="1" height="1" fill="#606060"/>
<rect x="301" y="145" width="1" height="1" fill="#606060"/>
<rect x="303" y="145" width="1" height="1" fill="#606060"/>
<rect x="305" y="145" width="1" height="1" fill="#606060"/>
<rect x="307" y="145" width="1" height="1" fill="#606060"/>
<rect x="309" y="145" width="1" height="1" fill="#606060"/>
<rect x="311" y="145" width="1" height="1" fill="#606060"/>
<rect x="300" y="146" width="1" height="1" fill="#606060"/>
<rect x="302" y="146" width="1" height="1" fill="#606060"/>
<rect x="304" y="146" width="1" height="1" fill="#606060"/>
<rect x="306" y="146" width="1" height="1" fill="#606060"/>
<rect x="308" y="146" width="1" height="1" fill="#606060"/>
<rect x="310" y="146" width="1" height="1" fill="#606060"/>
<rect x="312" y="146" width="1" height="1" fill="#606060"/>
<rect x="301" y="147" width="1" height="1" fill="#606060"/>
<rect x="303" y="147" width="1" height="1" fill="#606060"/>
<rect x="305" y="147" width="1" height="1" fill="#606060"/>
<rect x="307" y="147" width="1" height="1" fill="#606060"/>
<rect x="309" y="147" width="1" height="1" fill="#606060"/>
<rect x="311" y="147" width="1" height="1" fill="#606060"/>
<rect x="313" y="147" width="1" height="1" fill="#606060"/>
<rect x="300" y="148" width="1" height="1" fill="#606060"/>
<rect x="302" y="148" width="1" height="1" fill="#606060"/>
<rect x="304" y="148" width="1" height="1" fill="#606060"/>
<rect x="308" y="148" width="1" height="1" fill="#606060"/>
<rect x="310" y="148" width="1" height="1" fill="#606060"/>
<rect x="312" y="148" width="1" height="1" fill="#606060"/>
<rect x="299" y="149" width="1" height="1" fill="#606060"/>
<rect x="301" y="149" width="1" height="1" fill="#606060"/>
<rect x="303" y="149" width="1" height="1" fill="#606060"/>
<rect x="305" y="149" width="1" height="1" fill="#606060"/>
<rect x="307" y="149" width="1" height="1" fill="#606060"/>
<rect x="309" y="149" width="1" height="1" fill="#606060"/>
<rect x="311" y="149" width="1" height="1" fill="#606060"/>
<rect x="313" y="149" width="1" height="1" fill="#606060"/>
<rect x="300" y="150" width="1" height="1" fill="#606060"/>
<rect x="302" y="150" width="1" height="1" fill="#606060"/>
<rect x="304" y="150" width="1" height="1" fill="#606060"/>
<rect x="308" y="150" width="1" height="1" fill="#606060"/>
<rect x="310" y="150" width="1" height="1" fill="#606060"/>
<rect x="312" y="150" width="1" height="1" fill="#606060"/>
<rect x="299" y="151" width="1" height="1" fill="#606060"/>
<rect x="301" y="151" width="1" height="1" fill="#606060"/>
<rect x="303" y="151" width="1" height="1" fill="#606060"/>
<rect x="305" y="151" width="1" height="1" fill="#606060"/>
<rect x="307" y="151" width="1" height="1" fill="#606060"/>
<rect x="309" y="151" width="1" height="1" fill="#606060"/>
<rect x="311" y="151" width="1" height="1" fill="#606060"/>
<rect x="313" y="151" width="1" height="1" fill="#606060"/>
<rect x="300" y="152" width="1" height="1" fill="#606060"/>
<rect x="302" y="152" width="1" height="1" fill="#606060"/>
<rect x="304" y="152" width="1" height="1" fill="#606060"/>
<rect x="308" y="152" width="1" height="1" fill="#606060"/>
<rect x="310" y="152" width="1" height="1" fill="#606060"/>
<rect x="312" y="152" width="1" height="1" fill="#606060"/>
<rect x="301" y="153" width="1" height="1" fill="#606060"/>
<rect x="303" y="153" width="1" height="1" fill="#606060"/>
<rect x="309" y="153" width="1" height="1" fill="#606060"/>
<rect x="311" y="153" width="1" height="1" fill="#606060"/>
<rect x="300" y="151" width="1" height="1" fill="#0000ff"/>
<rect x="304" y="151" width="1" height="1" fill="#0000ff"/>
<rect x="299" y="152" width="1" height="1" fill="#0000ff"/>
<rect x="301" y="152" width="1" height="1" fill="#0000ff"/>
<rect x="303" y="152" width="1" height="1" fill="#0000ff"/>
<rect x="305" y="152" width="1" height="1" fill="#0000ff"/>
<rect x="298" y="153" width="1" height="1" fill="#0000ff"/>
<rect x="300" y="153" width="1" height="1" fill="#0000ff"/>
<rect x="302" y="153" width="1" height="1" fill="#0000ff"/>
<rect x="304" y="153" width="1" height="1" fill="#0000ff"/>
<rect x="306" y="153" width="1" height="1" fill="#0000ff"/>
<rect x="299" y="154" width="1" height="1" fill="#0000ff"/>
<rect x="301" y="154" width="1" height="1" fill="#0000ff"/>
<rect x="303" y="154" width="1" height="1" fill="#0000ff"/>
<rect x="305" y="154" width="1" height="1" fill="#0000ff"/>
<rect x="300" y="155" width="1" height="1" fill="#0000ff"/>
<rect x="304" y="155" width="1" height="1" fill="#0000ff"/>
<rect x="323" y="141" width="1" height="1" fill="#606060"/>
<rect x="329" y="141" width="1" height="1" fill="#606060"/>
<rect x="322" y="142" width="1" height="1" fill="#606060"/>
<rect x="324" y="142" width="1" height="1" fill="#606060"/>
<rect x="328" y="142" width="1" height="1" fill="#606060"/>
<rect x="330" y="142" width="1" height="1" fill="#606060"/>
<rect x="321" y="143" width="1" height="1" fill="#606060"/>
<rect x="323" y="143" width="1" height="1" fill="#606060"/>
<rect x="325" y="143" width="1" height="1" fill="#606060"/>
<rect x="327" y="143" width="1" height="1" fill="#606060"/>
<rect x="329" y="143" width="1" height="1" fill="#606060"/>
<rect x="331" y="143" width="1" height="1" fill="#606060"/>
<rect x="322" y="144" width="1" height="1" fill="#606060"/>
<rect x="324" y="144" width="1" height="1" fill="#606060"/>
<rect x="328" y="144" width="1" height="1" fill="#606060"/>
<rect x="330" y="144" width="1" height="1" fill="#606060"/>
<rect x="321" y="145" width="1" height="1" fill="#606060"/>
<rect x="323" y="145" width="1" height="1" fill="#606060"/>
<rect x="325" y="145" width="1" height="1" fill="#606060"/>
<rect x="327" y="145" width="1" height="1" fill="#606060"/>
<rect x="329" y="145" width="1" height="1" fill="#606060"/>
<rect x="331" y="145" width="1" height="1" fill="#606060"/>
<rect x="320" y="146" width="1" height="1" fill="#606060"/>
<rect x="322" y="146" width="1" height="1" fill="#606060"/>
<rect x="324" y="146" width="1" height="1" fill="#606060"/>
<rect x="326" y="146" width="1" height="1" fill="#606060"/>
<rect x="328" y="146" width="1" height="1" fill="#606060"/>
<rect x="330" y="146" width="1" height="1" fill="#606060"/>
<rect x="332" y="146" width="1" height="1" fill="#606060"/>
<rect x="321" y="147" width="1" height="1" fill="#606060"/>
<rect x="323" y="147" width="1" height="1" fill="#606060"/>
<rect x="325" y="147" width="1" height="1" fill="#606060"/>
<rect x="327" y="147" width="1" height="1" fill="#606060"/>
<rect x="329" y="147" width="1" height="1" fill="#606060"/>
<rect x="331" y="147" width="1" height="1" fill="#606060"/>
<rect x="333" y="147" width="1" height="1" fill="#606060"/>
<rect x="320" y="148" width="1" height="1" fill="#606060"/>
<rect x="322" y="148" width="1" height="1" fill="#606060"/>
<rect x="324" y="148" width="1" height="1" fill="#606060"/>
<rect x="328" y="148" width="1" height="1" fill="#606060"/>
<rect x="330" y="148" width="1" height="1" fill="#606060"/>
<rect x="332" y="148" width="1" height="1" fill="#606060"/>
<rect x="319" y="149" width="1" height="1" fill="#606060"/>
<rect x="321" y="149" width="1" height="1" fill="#606060"/>
<rect x="323" y="149" width="1" height="1" fill="#606060"/>
<rect x="325" y="149" width="1" height="1" fill="#606060"/>
<rect x="327" y="149" width="1" height="1" fill="#606060"/>
<rect x="329" y="149" width="1" height="1" fill="#606060"/>
<rect x="331" y="149" width="1" height="1" fill="#606060"/>
<rect x="333" y="149" width="1" height="1" fill="#606060"/>
<rect x="320" y="150" width="1" height="1" fill="#606060"/>
<rect x="322" y="150" width="1" height="1" fill="#606060"/>
<rect x="324" y="150" width="1" height="1" fill="#606060"/>
<rect x="328" y="150" width="1" height="1" fill="#606060"/>
<rect x="330" y="150" width="1" height="1" fill="#606060"/>
<rect x="332" y="150" width="1" height="1" fill="#606060"/>
<rect x="319" y="151" width="1" height="1" fill="#606060"/>
<rect x="321" y="151" width="1" height="1" fill="#606060"/>
<rect x="323" y="151" width="1" height="1" fill="#606060"/>
<rect x="325" y="151" width="1" height="1" fill="#606060"/>
<rect x="327" y="151" width="1" height="1" fill="#606060"/>
<rect x="329" y="151" width="1" height="1" fill="#606060"/>
<rect x="331" y="151" width="1" height="1" fill="#606060"/>
<rect x="333" y="151" width="1" height="1" fill="#606060"/>
<rect x="320" y="152" width="1" height="1" fill="#606060"/>
<rect x="322" y="152" width="1" height="1" fill="#606060"/>
<rect x="324" y="152" width="1" height="1" fill="#606060"/>
<rect x="328" y="152" width="1" height="1" fill="#606060"/>
<rect x="330" y="152" width="1" height="1" fill="#606060"/>
<rect x="332" y="152" width="1" height="1" fill="#606060"/>
<rect x="321" y="153" width="1" height="1" fill="#606060"/>
<rect x="323" y="153" width="1" height="1" fill="#606060"/>
<rect x="329" y="153" width="1" height="1" fill="#606060"/>
<rect x="331" y="153" width="1" height="1" fill="#606060"/>
<rect x="328" y="151" width="1" height="1" fill="#0000ff"/>
<rect x="332" y="151" width="1" height="1" fill="#0000ff"/>
<rect x="327" y="152" width="1" height="1" fill="#0000ff"/>
<rect x="329" y="152" width="1" height="1" fill="#0000ff"/>
<rect x="331" y="152" width="1" height="1" fill="#0000ff"/>
<rect x="333" y="152" width="1" height="1" fill="#0000ff"/>
<rect x="326" y="153" width="1" height="1" fill="#0000ff"/>
<rect x="328" y="153" width="1" height="1" fill="#0000ff"/>
<rect x="330" y="153" width="1" height="1" fill="#0000ff"/>
<rect x="332" y="153" width="1" height="1" fill="#0000ff"/>
<rect x="334" y="153" width="1" height="1" fill="#0000ff"/>
<rect x="327" y="154" width="1" height="1" fill="#0000ff"/>
<rect x="329" y="154" width="1" height="1" fill="#0000ff"/>
<rect x="331" y="154" width="1" height="1" fill="#0000ff"/>
<rect x="333" y="154" width="1" height="1" fill="#0000ff"/>
<rect x="328" y="155" width="1" height="1" fill="#0000ff"/>
<rect x="332" y="155" width="1" height="1" fill="#0000ff"/>
<rect x="346" y="141" width="1" height="1" fill="#404040"/>
<rect x="348" y="141" width="1" height="1" fill="#404040"/>
<rect x="350" y="141" width="1" height="1" fill="#404040"/>
<rect x="352" y="141" width="1" height="1" fill="#404040"/>
<rect x="345" y="142" width="1" height="1" fill="#404040"/>
<rect x="347" y="142" width="1" height="1" fill="#404040"/>
<rect x="349" y="142" width="1" height="1" fill="#404040"/>
<rect x="351" y="142" width="1" height="1" fill="#404040"/>
<rect x="353" y="142" width="1" height="1" fill="#404040"/>
<rect x="344" y="143" width="1" height="1" fill="#404040"/>
<rect x="346" y="143" width="1" height="1" fill="#404040"/>
<rect x="348" y="143" width="1" height="1" fill="#404040"/>
<rect x="350" y="143" width="1" height="1" fill="#404040"/>
<rect x="352" y="143" width="1" height="1" fill="#404040"/>
<rect x="354" y="143" width="1" height="1" fill="#c8c8c8"/>
<rect x="356" y="143" width="1" height="1" fill="#c8c8c8"/>
<rect x="343" y="144" width="1" height="1" fill="#404040"/>
<rect x="345" y="144" width="1" height="1" fill="#404040"/>
<rect x="347" y="144" width="1" height="1" fill="#404040"/>
<rect x="349" y="144" width="1" height="1" fill="#404040"/>
<rect x="351" y="144" width="1" height="1" fill="#404040"/>
<rect x="353" y="144" width="1" height="1" fill="#c8c8c8"/>
<rect x="355" y="144" width="1" height="1" fill="#c8c8c8"/>
<rect x="357" y="144" width="1" height="1" fill="#c8c8c8"/>
<rect x="344" y="145" width="1" height="1" fill="#404040"/>
<rect x="346" y="145" width="1" height="1" fill="#404040"/>
<rect x="348" y="145" width="1" height="1" fill="#404040"/>
<rect x="350" y="145" width="1" height="1" fill="#404040"/>
<rect x="352" y="145" width="1" height="1" fill="#c8c8c8"/>
<rect x="354" y="145" width="1" height="1" fill="#c8c8c8"/>
<rect x="356" y="145" width="1" height="1" fill="#c8c8c8"/>
<rect x="358" y="145" width="1" height="1" fill="#c8c8c8"/>
<rect x="343" y="146" width="1" height="1" fill="#404040"/>
<rect x="345" y="146" width="1" height="1" fill="#404040"/>
<rect x="347" y="146" width="1" height="1" fill="#404040"/>
<rect x="349" y="146" width="1" height="1" fill="#404040"/>
<rect x="351" y="146" width="1" height="1" fill="#7aa8f0"/>
<rect x="353" y="146" width="1" height="1" fill="#c8c8c8"/>
<rect x="355" y="146" width="1" height="1" fill="#c8c8c8"/>
<rect x="357" y="146" width="1" height="1" fill="#c8c8c8"/>
<rect x="344" y="147" width="1" height="1" fill="#404040"/>
<rect x="346" y="147" width="1" height="1" fill="#404040"/>
<rect x="348" y="147" width="1" height="1" fill="#404040"/>
<rect x="350" y="147" width="1" height="1" fill="#7aa8f0"/>
<rect x="352" y="147" width="1" height="1" fill="#7aa8f0"/>
<rect x="354" y="147" width="1" height="1" fill="#c8c8c8"/>
<rect x="356" y="147" width="1" height="1" fill="#c8c8c8"/>
<rect x="343" y="148" width="1" height="1" fill="#404040"/>
<rect x="345" y="148" width="1" height="1" fill="#404040"/>
<rect x="347" y="148" width="1" height="1" fill="#404040"/>
<rect x="349" y="148" width="1" height="1" fill="#7aa8f0"/>
<rect x="351" y="148" width="1" height="1" fill="#7aa8f0"/>
<rect x="353" y="148" width="1" height="1" fill="#7aa8f0"/>
<rect x="355" y="148" width="1" height="1" fill="#c8c8c8"/>
<rect x="344" y="149" width="1" height="1" fill="#404040"/>
<rect x="346" y="149" width="1" height="1" fill="#404040"/>
<rect x="348" y="149" width="1" height="1" fill="#7aa8f0"/>
<rect x="350" y="149" width="1" height="1" fill="#7aa8f0"/>
<rect x="352" y="149" width="1" height="1" fill="#7aa8f0"/>
<rect x="354" y="149" width="1" height="1" fill="#7aa8f0"/>
<rect x="343" y="150" width="1" height="1" fill="#404040"/>
<rect x="345" y="150" width="1" height="1" fill="#404040"/>
<rect x="347" y="150" width="1" height="1" fill="#7aa8f0"/>
<rect x="349" y="150" width="1" height="1" fill="#7aa8f0"/>
<rect x="351" y="150" width="1" height="1" fill="#7aa8f0"/>
<rect x="353" y="150" width="1" height="1" fill="#7aa8f0"/>
<rect x="344" y="151" width="1" height="1" fill="#404040"/>
<rect x="346" y="151" width="1" height="1" fill="#7aa8f0"/>
<rect x="348" y="151" width="1" height="1" fill="#7aa8f0"/>
<rect x="350" y="151" width="1" height="1" fill="#7aa8f0"/>
<rect x="352" y="151" width="1" height="1" fill="#7aa8f0"/>
<rect x="347" y="152" width="1" height="1" fill="#7aa8f0"/>
<rect x="349" y="152" width="1" height="1" fill="#7aa8f0"/>
<rect x="351" y="152" width="1" height="1" fill="#7aa8f0"/>
<rect x="348" y="153" width="1" height="1" fill="#7aa8f0"/>
<rect x="350" y="153" width="1" height="1" fill="#7aa8f0"/>
<g class="aa"><path d="M395.8 149.8 L401.5 155.5" stroke="#1414d8" stroke-width="2.800"/><path d="M396.5 149.5 L402 155" stroke="#8080ff" stroke-width="0.700"/><circle cx="392" cy="146" r="5.200" fill="#fff" stroke="#000" stroke-width="1.400"/><path d="M389 146 h6 M392 143 v6" stroke="#000" stroke-width="1.700"/></g>
<g class="aa"><path d="M417.8 149.8 L423.5 155.5" stroke="#1414d8" stroke-width="2.800"/><path d="M418.5 149.5 L424 155" stroke="#8080ff" stroke-width="0.700"/><circle cx="414" cy="146" r="5.200" fill="#fff" stroke="#000" stroke-width="1.400"/><path d="M411 146 h6" stroke="#000" stroke-width="1.700"/></g>
<g class="aa"><path d="M439.8 149.8 L445.5 155.5" stroke="#1414d8" stroke-width="2.800"/><path d="M440.5 149.5 L446 155" stroke="#8080ff" stroke-width="0.700"/><circle cx="436" cy="146" r="5.200" fill="#003c78" stroke="#000" stroke-width="1.400"/><path d="M432.7 145 a3.500 3.500 0 0 1 2.300 -2.300" stroke="#5a90c8" stroke-width="1" fill="none"/></g>
<rect x="456" y="140" width="1" height="10" fill="#ffd000"/><rect x="457" y="141" width="1" height="9" fill="#8a4a00"/><rect x="451" y="150" width="12" height="6" fill="#ffd000"/><rect x="452" y="151" width="11" height="5" fill="#8a4a00"/><rect x="453" y="152" width="9" height="3" fill="#fff"/>
<g class="aa"><path d="M464.7 145.79999999999998 L467.3 149.1" stroke="#1414e8" stroke-width="2.200"/><circle cx="462.5" cy="143.6" r="3.100" fill="#c4c4c4" stroke="#000" stroke-width="1"/></g>
<rect x="476" y="144" width="1" height="7" fill="#ffd000"/><rect x="477" y="145" width="1" height="6" fill="#8a4a00"/><rect x="473" y="151" width="8" height="6" fill="#ffd000"/><rect x="474" y="152" width="7" height="5" fill="#8a4a00"/><rect x="475" y="153" width="5" height="3" fill="#fff"/>
<rect x="484" y="143" width="1" height="8" fill="#ffd000"/><rect x="485" y="144" width="1" height="7" fill="#8a4a00"/><rect x="481" y="151" width="9" height="6" fill="#ffd000"/><rect x="482" y="152" width="8" height="5" fill="#8a4a00"/><rect x="483" y="153" width="6" height="3" fill="#fff"/>
<g class="aa"><path d="M486.7 145.39999999999998 L489.3 148.7" stroke="#1414e8" stroke-width="2.200"/><circle cx="484.5" cy="143.2" r="3.100" fill="#c4c4c4" stroke="#000" stroke-width="1"/></g>
<rect x="495" y="141" width="1" height="1" fill="#101090"/><rect x="495" y="152" width="1" height="1" fill="#101090"/><rect x="497" y="141" width="1" height="1" fill="#101090"/><rect x="497" y="152" width="1" height="1" fill="#101090"/><rect x="499" y="141" width="1" height="1" fill="#101090"/><rect x="499" y="152" width="1" height="1" fill="#101090"/><rect x="501" y="141" width="1" height="1" fill="#101090"/><rect x="501" y="152" width="1" height="1" fill="#101090"/><rect x="503" y="141" width="1" height="1" fill="#101090"/><rect x="503" y="152" width="1" height="1" fill="#101090"/><rect x="505" y="141" width="1" height="1" fill="#101090"/><rect x="505" y="152" width="1" height="1" fill="#101090"/><rect x="495" y="141" width="1" height="1" fill="#101090"/><rect x="505" y="141" width="1" height="1" fill="#101090"/><rect x="495" y="143" width="1" height="1" fill="#101090"/><rect x="505" y="143" width="1" height="1" fill="#101090"/><rect x="495" y="145" width="1" height="1" fill="#101090"/><rect x="505" y="145" width="1" height="1" fill="#101090"/><rect x="495" y="147" width="1" height="1" fill="#101090"/><rect x="505" y="147" width="1" height="1" fill="#101090"/><rect x="495" y="149" width="1" height="1" fill="#101090"/><rect x="505" y="149" width="1" height="1" fill="#101090"/><rect x="495" y="151" width="1" height="1" fill="#101090"/><rect x="505" y="151" width="1" height="1" fill="#101090"/>
<g class="aa"><path d="M507.7 151.7 L510.3 155.0" stroke="#1414e8" stroke-width="2.200"/><circle cx="505.5" cy="149.5" r="3.100" fill="#c4c4c4" stroke="#000" stroke-width="1"/></g>
<rect x="535" y="140" width="20" height="20" fill="#fff" />
<rect x="535" y="140" width="20" height="1" fill="#808080" />
<rect x="535" y="140" width="1" height="20" fill="#808080" />
<rect x="536" y="159" width="19" height="1" fill="#f4f4f4" />
<rect x="554" y="141" width="1" height="19" fill="#f4f4f4" />
<rect x="545" y="144" width="1" height="14" fill="#008040" />
<rect x="538" y="157" width="16" height="1" fill="#008040" />
<rect x="561" y="140" width="20" height="20" fill="#f0f0f0" />
<rect x="561" y="140" width="20" height="1" fill="#fff" />
<rect x="561" y="140" width="1" height="20" fill="#fff" />
<rect x="561" y="159" width="20" height="1" fill="#808080" />
<rect x="580" y="140" width="1" height="20" fill="#808080" />
<rect x="567" y="142" width="8" height="16" fill="#14147c" />
<path d="M563 156.500 H569.500 V143.500 H573.500 V156.500 H578" stroke="#009048" stroke-width="1" fill="none"/>
<rect x="587" y="140" width="20" height="20" fill="#f0f0f0" />
<rect x="587" y="140" width="20" height="1" fill="#fff" />
<rect x="587" y="140" width="1" height="20" fill="#fff" />
<rect x="587" y="159" width="20" height="1" fill="#808080" />
<rect x="606" y="140" width="1" height="20" fill="#808080" />
<rect x="590" y="142" width="14" height="16" fill="#005000" />
<path d="M589 156.500 H592.500 V143.500 H596.500 V156.500 H598.500 V143.500 H602.500 V156.500 H605" stroke="#009048" stroke-width="1" fill="none"/>
<rect x="624" y="142" width="1" height="1" fill="#000080"/>
<rect x="626" y="142" width="1" height="1" fill="#000080"/>
<rect x="628" y="142" width="1" height="1" fill="#000080"/>
<rect x="630" y="142" width="1" height="1" fill="#000080"/>
<rect x="632" y="142" width="1" height="1" fill="#000080"/>
<rect x="634" y="142" width="1" height="1" fill="#000080"/>
<rect x="636" y="142" width="1" height="1" fill="#000080"/>
<rect x="638" y="142" width="1" height="1" fill="#000080"/>
<rect x="625" y="143" width="1" height="1" fill="#000080"/>
<rect x="627" y="143" width="1" height="1" fill="#000080"/>
<rect x="629" y="143" width="1" height="1" fill="#000080"/>
<rect x="631" y="143" width="1" height="1" fill="#008030"/>
<rect x="633" y="143" width="1" height="1" fill="#008030"/>
<rect x="635" y="143" width="1" height="1" fill="#008030"/>
<rect x="637" y="143" width="1" height="1" fill="#008030"/>
<rect x="639" y="143" width="1" height="1" fill="#000080"/>
<rect x="624" y="144" width="1" height="1" fill="#000080"/>
<rect x="626" y="144" width="1" height="1" fill="#000080"/>
<rect x="628" y="144" width="1" height="1" fill="#000080"/>
<rect x="630" y="144" width="1" height="1" fill="#000080"/>
<rect x="632" y="144" width="1" height="1" fill="#000080"/>
<rect x="634" y="144" width="1" height="1" fill="#000080"/>
<rect x="636" y="144" width="1" height="1" fill="#000080"/>
<rect x="638" y="144" width="1" height="1" fill="#000080"/>
<rect x="625" y="145" width="1" height="1" fill="#000080"/>
<rect x="627" y="145" width="1" height="1" fill="#000080"/>
<rect x="629" y="145" width="1" height="1" fill="#000080"/>
<rect x="631" y="145" width="1" height="1" fill="#008030"/>
<rect x="633" y="145" width="1" height="1" fill="#000080"/>
<rect x="635" y="145" width="1" height="1" fill="#000080"/>
<rect x="637" y="145" width="1" height="1" fill="#000080"/>
<rect x="639" y="145" width="1" height="1" fill="#000080"/>
<rect x="624" y="146" width="1" height="1" fill="#000080"/>
<rect x="626" y="146" width="1" height="1" fill="#000080"/>
<rect x="628" y="146" width="1" height="1" fill="#000080"/>
<rect x="630" y="146" width="1" height="1" fill="#000080"/>
<rect x="632" y="146" width="1" height="1" fill="#000080"/>
<rect x="634" y="146" width="1" height="1" fill="#000080"/>
<rect x="636" y="146" width="1" height="1" fill="#000080"/>
<rect x="638" y="146" width="1" height="1" fill="#000080"/>
<rect x="625" y="147" width="1" height="1" fill="#000080"/>
<rect x="627" y="147" width="1" height="1" fill="#000080"/>
<rect x="629" y="147" width="1" height="1" fill="#000080"/>
<rect x="631" y="147" width="1" height="1" fill="#008030"/>
<rect x="633" y="147" width="1" height="1" fill="#000080"/>
<rect x="635" y="147" width="1" height="1" fill="#000080"/>
<rect x="637" y="147" width="1" height="1" fill="#000080"/>
<rect x="639" y="147" width="1" height="1" fill="#000080"/>
<rect x="624" y="148" width="1" height="1" fill="#000080"/>
<rect x="626" y="148" width="1" height="1" fill="#000080"/>
<rect x="628" y="148" width="1" height="1" fill="#000080"/>
<rect x="630" y="148" width="1" height="1" fill="#000080"/>
<rect x="632" y="148" width="1" height="1" fill="#000080"/>
<rect x="634" y="148" width="1" height="1" fill="#000080"/>
<rect x="636" y="148" width="1" height="1" fill="#000080"/>
<rect x="638" y="148" width="1" height="1" fill="#000080"/>
<rect x="625" y="149" width="1" height="1" fill="#000080"/>
<rect x="627" y="149" width="1" height="1" fill="#000080"/>
<rect x="629" y="149" width="1" height="1" fill="#000080"/>
<rect x="631" y="149" width="1" height="1" fill="#008030"/>
<rect x="633" y="149" width="1" height="1" fill="#000080"/>
<rect x="635" y="149" width="1" height="1" fill="#000080"/>
<rect x="637" y="149" width="1" height="1" fill="#000080"/>
<rect x="639" y="149" width="1" height="1" fill="#000080"/>
<rect x="624" y="150" width="1" height="1" fill="#000080"/>
<rect x="626" y="150" width="1" height="1" fill="#000080"/>
<rect x="628" y="150" width="1" height="1" fill="#000080"/>
<rect x="630" y="150" width="1" height="1" fill="#000080"/>
<rect x="632" y="150" width="1" height="1" fill="#000080"/>
<rect x="634" y="150" width="1" height="1" fill="#000080"/>
<rect x="636" y="150" width="1" height="1" fill="#000080"/>
<rect x="638" y="150" width="1" height="1" fill="#000080"/>
<rect x="625" y="151" width="1" height="1" fill="#000080"/>
<rect x="627" y="151" width="1" height="1" fill="#000080"/>
<rect x="629" y="151" width="1" height="1" fill="#000080"/>
<rect x="631" y="151" width="1" height="1" fill="#008030"/>
<rect x="633" y="151" width="1" height="1" fill="#000080"/>
<rect x="635" y="151" width="1" height="1" fill="#000080"/>
<rect x="637" y="151" width="1" height="1" fill="#000080"/>
<rect x="639" y="151" width="1" height="1" fill="#000080"/>
<rect x="624" y="152" width="1" height="1" fill="#000080"/>
<rect x="626" y="152" width="1" height="1" fill="#000080"/>
<rect x="628" y="152" width="1" height="1" fill="#000080"/>
<rect x="630" y="152" width="1" height="1" fill="#000080"/>
<rect x="632" y="152" width="1" height="1" fill="#000080"/>
<rect x="634" y="152" width="1" height="1" fill="#000080"/>
<rect x="636" y="152" width="1" height="1" fill="#000080"/>
<rect x="638" y="152" width="1" height="1" fill="#000080"/>
<rect x="625" y="153" width="1" height="1" fill="#000080"/>
<rect x="627" y="153" width="1" height="1" fill="#000080"/>
<rect x="629" y="153" width="1" height="1" fill="#000080"/>
<rect x="631" y="153" width="1" height="1" fill="#008030"/>
<rect x="633" y="153" width="1" height="1" fill="#000080"/>
<rect x="635" y="153" width="1" height="1" fill="#000080"/>
<rect x="637" y="153" width="1" height="1" fill="#000080"/>
<rect x="639" y="153" width="1" height="1" fill="#000080"/>
<rect x="624" y="154" width="1" height="1" fill="#000080"/>
<rect x="626" y="154" width="1" height="1" fill="#000080"/>
<rect x="628" y="154" width="1" height="1" fill="#000080"/>
<rect x="630" y="154" width="1" height="1" fill="#000080"/>
<rect x="632" y="154" width="1" height="1" fill="#000080"/>
<rect x="634" y="154" width="1" height="1" fill="#000080"/>
<rect x="636" y="154" width="1" height="1" fill="#000080"/>
<rect x="638" y="154" width="1" height="1" fill="#000080"/>
<rect x="625" y="155" width="1" height="1" fill="#008030"/>
<rect x="627" y="155" width="1" height="1" fill="#008030"/>
<rect x="629" y="155" width="1" height="1" fill="#008030"/>
<rect x="631" y="155" width="1" height="1" fill="#008030"/>
<rect x="633" y="155" width="1" height="1" fill="#000080"/>
<rect x="635" y="155" width="1" height="1" fill="#000080"/>
<rect x="637" y="155" width="1" height="1" fill="#000080"/>
<rect x="639" y="155" width="1" height="1" fill="#000080"/>
<rect x="624" y="156" width="1" height="1" fill="#000080"/>
<rect x="626" y="156" width="1" height="1" fill="#000080"/>
<rect x="628" y="156" width="1" height="1" fill="#000080"/>
<rect x="630" y="156" width="1" height="1" fill="#000080"/>
<rect x="632" y="156" width="1" height="1" fill="#000080"/>
<rect x="634" y="156" width="1" height="1" fill="#000080"/>
<rect x="636" y="156" width="1" height="1" fill="#000080"/>
<rect x="638" y="156" width="1" height="1" fill="#000080"/>
<rect x="625" y="157" width="1" height="1" fill="#000080"/>
<rect x="627" y="157" width="1" height="1" fill="#000080"/>
<rect x="629" y="157" width="1" height="1" fill="#000080"/>
<rect x="631" y="157" width="1" height="1" fill="#000080"/>
<rect x="633" y="157" width="1" height="1" fill="#000080"/>
<rect x="635" y="157" width="1" height="1" fill="#000080"/>
<rect x="637" y="157" width="1" height="1" fill="#000080"/>
<rect x="639" y="157" width="1" height="1" fill="#000080"/>
<rect x="651" y="143" width="1" height="1" fill="#ffff00"/>
<rect x="653" y="143" width="1" height="1" fill="#000080"/>
<rect x="655" y="143" width="1" height="1" fill="#000080"/>
<rect x="657" y="143" width="1" height="1" fill="#008030"/>
<rect x="659" y="143" width="1" height="1" fill="#008030"/>
<rect x="661" y="143" width="1" height="1" fill="#008030"/>
<rect x="651" y="144" width="1" height="1" fill="#ffff00"/>
<rect x="652" y="144" width="1" height="1" fill="#000080"/>
<rect x="654" y="144" width="1" height="1" fill="#000080"/>
<rect x="656" y="144" width="1" height="1" fill="#000080"/>
<rect x="651" y="145" width="1" height="1" fill="#ffff00"/>
<rect x="653" y="145" width="1" height="1" fill="#000080"/>
<rect x="654" y="145" width="1" height="1" fill="#008030"/>
<rect x="655" y="145" width="1" height="1" fill="#000080"/>
<rect x="651" y="146" width="1" height="1" fill="#ffff00"/>
<rect x="652" y="146" width="1" height="1" fill="#000080"/>
<rect x="654" y="146" width="1" height="1" fill="#000080"/>
<rect x="656" y="146" width="1" height="1" fill="#000080"/>
<rect x="651" y="147" width="1" height="1" fill="#ffff00"/>
<rect x="653" y="147" width="1" height="1" fill="#000080"/>
<rect x="654" y="147" width="1" height="1" fill="#008030"/>
<rect x="655" y="147" width="1" height="1" fill="#000080"/>
<rect x="651" y="148" width="1" height="1" fill="#ffff00"/>
<rect x="652" y="148" width="1" height="1" fill="#000080"/>
<rect x="654" y="148" width="1" height="1" fill="#000080"/>
<rect x="656" y="148" width="1" height="1" fill="#000080"/>
<rect x="651" y="149" width="1" height="1" fill="#ffff00"/>
<rect x="653" y="149" width="1" height="1" fill="#000080"/>
<rect x="654" y="149" width="1" height="1" fill="#008030"/>
<rect x="655" y="149" width="1" height="1" fill="#000080"/>
<rect x="651" y="150" width="1" height="1" fill="#ffff00"/>
<rect x="652" y="150" width="1" height="1" fill="#000080"/>
<rect x="654" y="150" width="1" height="1" fill="#000080"/>
<rect x="656" y="150" width="1" height="1" fill="#000080"/>
<rect x="651" y="151" width="1" height="1" fill="#ffff00"/>
<rect x="653" y="151" width="1" height="1" fill="#000080"/>
<rect x="654" y="151" width="1" height="1" fill="#008030"/>
<rect x="655" y="151" width="1" height="1" fill="#000080"/>
<rect x="651" y="152" width="1" height="1" fill="#ffff00"/>
<rect x="652" y="152" width="1" height="1" fill="#000080"/>
<rect x="654" y="152" width="1" height="1" fill="#000080"/>
<rect x="656" y="152" width="1" height="1" fill="#000080"/>
<rect x="651" y="153" width="1" height="1" fill="#ffff00"/>
<rect x="653" y="153" width="1" height="1" fill="#000080"/>
<rect x="654" y="153" width="1" height="1" fill="#008030"/>
<rect x="655" y="153" width="1" height="1" fill="#000080"/>
<rect x="651" y="154" width="1" height="1" fill="#ffff00"/>
<rect x="652" y="154" width="1" height="1" fill="#000080"/>
<rect x="654" y="154" width="1" height="1" fill="#000080"/>
<rect x="656" y="154" width="1" height="1" fill="#000080"/>
<rect x="651" y="155" width="1" height="1" fill="#ffff00"/>
<rect x="653" y="155" width="1" height="1" fill="#000080"/>
<rect x="654" y="155" width="1" height="1" fill="#008030"/>
<rect x="655" y="155" width="1" height="1" fill="#000080"/>
<rect x="647" y="156" width="1" height="1" fill="#008030"/>
<rect x="649" y="156" width="1" height="1" fill="#008030"/>
<rect x="651" y="156" width="1" height="1" fill="#ffff00"/>
<rect x="652" y="156" width="1" height="1" fill="#000080"/>
<rect x="654" y="156" width="1" height="1" fill="#000080"/>
<rect x="656" y="156" width="1" height="1" fill="#000080"/>
<rect x="651" y="157" width="1" height="1" fill="#ffff00"/>
<rect x="653" y="157" width="1" height="1" fill="#000080"/>
<rect x="655" y="157" width="1" height="1" fill="#000080"/>
<rect x="676" y="143" width="1" height="1" fill="#008030"/>
<rect x="678" y="143" width="1" height="1" fill="#008030"/>
<rect x="680" y="143" width="1" height="1" fill="#008030"/>
<rect x="682" y="143" width="1" height="1" fill="#008030"/>
<rect x="676" y="145" width="1" height="1" fill="#008030"/>
<rect x="676" y="147" width="1" height="1" fill="#008030"/>
<rect x="676" y="149" width="1" height="1" fill="#008030"/>
<rect x="676" y="151" width="1" height="1" fill="#008030"/>
<rect x="676" y="153" width="1" height="1" fill="#008030"/>
<rect x="675" y="155" width="1" height="1" fill="#008030"/>
<rect x="669" y="156" width="1" height="1" fill="#008030"/>
<rect x="671" y="156" width="1" height="1" fill="#008030"/>
<rect x="673" y="156" width="1" height="1" fill="#008030"/>
<rect x="697" y="143" width="1" height="1" fill="#ffff00"/>
<rect x="698" y="143" width="1" height="1" fill="#008030"/>
<rect x="700" y="143" width="1" height="1" fill="#008030"/>
<rect x="702" y="143" width="1" height="1" fill="#008030"/>
<rect x="704" y="143" width="1" height="1" fill="#008030"/>
<rect x="697" y="144" width="1" height="1" fill="#ffff00"/>
<rect x="697" y="145" width="1" height="1" fill="#ffff00"/>
<rect x="698" y="145" width="1" height="1" fill="#008030"/>
<rect x="697" y="146" width="1" height="1" fill="#ffff00"/>
<rect x="697" y="147" width="1" height="1" fill="#ffff00"/>
<rect x="698" y="147" width="1" height="1" fill="#008030"/>
<rect x="697" y="148" width="1" height="1" fill="#ffff00"/>
<rect x="697" y="149" width="1" height="1" fill="#ffff00"/>
<rect x="698" y="149" width="1" height="1" fill="#008030"/>
<rect x="697" y="150" width="1" height="1" fill="#ffff00"/>
<rect x="697" y="151" width="1" height="1" fill="#ffff00"/>
<rect x="698" y="151" width="1" height="1" fill="#008030"/>
<rect x="697" y="152" width="1" height="1" fill="#ffff00"/>
<rect x="697" y="153" width="1" height="1" fill="#ffff00"/>
<rect x="698" y="153" width="1" height="1" fill="#008030"/>
<rect x="697" y="154" width="1" height="1" fill="#ffff00"/>
<rect x="697" y="155" width="1" height="1" fill="#008030"/>
<rect x="691" y="156" width="1" height="1" fill="#008030"/>
<rect x="693" y="156" width="1" height="1" fill="#008030"/>
<rect x="695" y="156" width="1" height="1" fill="#008030"/>
<rect x="1" y="166" width="913" height="1" fill="#fff" />
<rect x="1" y="167" width="913" height="1" fill="#fff" />
<rect x="3" y="168" width="159" height="20" fill="#808080" />
<rect x="3" y="188" width="159" height="2" fill="#fff" />
<rect x="3" y="190" width="9" height="209" fill="#fff" />
<rect x="12" y="190" width="150" height="209" fill="#808080" />
<rect x="162" y="168" width="3" height="312" fill="#fff" />
<rect x="165" y="168" width="101" height="20" fill="#808080" />
<rect x="165" y="188" width="101" height="2" fill="#fff" />
<rect x="165" y="190" width="101" height="209" fill="#808080" />
<rect x="266" y="168" width="2" height="312" fill="#fff" />
<rect x="268" y="168" width="625" height="19" fill="#000" />
<rect x="268" y="168" width="625" height="1" fill="#909090" />
<rect x="268" y="187" width="625" height="3" fill="#fff" />
<rect x="268" y="190" width="625" height="209" fill="#000" />
<rect x="893" y="168" width="3" height="312" fill="#fff" />
<rect x="896" y="168" width="17" height="19" fill="#808080" />
<rect x="896" y="187" width="17" height="211" fill="#fff" />
<rect x="913" y="168" width="1" height="312" fill="#fff" />
<rect x="897" y="190" width="15" height="207" fill="#f0f0f0" />
<rect x="897" y="190" width="15" height="16" fill="#f0f0f0" />
<rect x="897" y="190" width="15" height="1" fill="#fff" />
<rect x="897" y="190" width="1" height="16" fill="#fff" />
<rect x="897" y="205" width="15" height="1" fill="#696969" />
<rect x="911" y="190" width="1" height="16" fill="#696969" />
<rect x="898" y="204" width="13" height="1" fill="#a0a0a0" />
<rect x="910" y="191" width="1" height="14" fill="#a0a0a0" />
<rect x="897" y="381" width="15" height="16" fill="#f0f0f0" />
<rect x="897" y="381" width="15" height="1" fill="#fff" />
<rect x="897" y="381" width="1" height="16" fill="#fff" />
<rect x="897" y="396" width="15" height="1" fill="#696969" />
<rect x="911" y="381" width="1" height="16" fill="#696969" />
<rect x="898" y="395" width="13" height="1" fill="#a0a0a0" />
<rect x="910" y="382" width="1" height="14" fill="#a0a0a0" />
<rect x="897" y="206" width="15" height="175" fill="#f0f0f0" />
<rect x="897" y="206" width="1" height="175" fill="#fff" />
<rect x="911" y="206" width="1" height="175" fill="#696969" />
<rect x="910" y="206" width="1" height="175" fill="#a0a0a0" />
<rect x="904" y="196" width="1" height="1" fill="#000" />
<rect x="903" y="197" width="3" height="1" fill="#000" />
<rect x="902" y="198" width="5" height="1" fill="#000" />
<rect x="901" y="199" width="7" height="1" fill="#000" />
<rect x="901" y="387" width="7" height="1" fill="#000" />
<rect x="902" y="388" width="5" height="1" fill="#000" />
<rect x="903" y="389" width="3" height="1" fill="#000" />
<rect x="904" y="390" width="1" height="1" fill="#000" />
<g class="aa"><polygon points="14,176 19,171 23,172 18,178" fill="#e010e0" stroke="#900090" stroke-width="0.6"/><rect x="22" y="176" width="8" height="8" fill="#10a040" stroke="#006020" stroke-width="0.6"/><polygon points="14,181 19.5,175.5 25,181 19.5,187" fill="#0040f0"/><circle cx="23.5" cy="176.5" r="3.2" fill="#00e0f0" stroke="#60a0c0" stroke-width="0.6"/></g>
<rect x="34" y="180" width="5" height="1" fill="#000" />
<rect x="35" y="181" width="3" height="1" fill="#000" />
<rect x="36" y="182" width="1" height="1" fill="#000" />
<text x="259" y="182.5" font-size="10.5" fill="#fff" text-anchor="end" >Msgs</text>
<rect x="40" y="242" width="1" height="61" fill="#d8d8d8" />
<rect x="40" y="252" width="11" height="1" fill="#d8d8d8" />
<rect x="40" y="269" width="11" height="1" fill="#d8d8d8" />
<rect x="40" y="286" width="11" height="1" fill="#d8d8d8" />
<rect x="40" y="303" width="11" height="1" fill="#d8d8d8" />
<rect x="27" y="234" width="6" height="1" fill="#d8d8d8" />
<g class="aa" transform="translate(39.5,200.5)"><polygon points="0,-7.5 7.5,0 0,7.5 -7.5,0" fill="#1a9ad6"/><polygon points="0,-7.5 7.5,0 3.5,0 0,-3.5" fill="#2fb4e8"/><polygon points="0,-7.5 -7.5,0 -3.5,0 0,-3.5" fill="#a8e6ff"/><polygon points="0,7.5 7.5,0 3.5,0 0,3.5" fill="#0e6fa8"/><polygon points="0,7.5 -7.5,0 -3.5,0 0,3.5" fill="#1585c0"/><polygon points="0,-3.5 3.5,0 0,3.5 -3.5,0" fill="#35b8ee"/></g>
<text x="51.5" y="203.5" font-size="10.7" fill="#fff" text-anchor="start" >sys_clk</text>
<text x="167" y="203.5" font-size="10.5" fill="#fff" text-anchor="start" >1</text>
<g class="aa" transform="translate(39.5,217.5)"><polygon points="0,-7.5 7.5,0 0,7.5 -7.5,0" fill="#1a9ad6"/><polygon points="0,-7.5 7.5,0 3.5,0 0,-3.5" fill="#2fb4e8"/><polygon points="0,-7.5 -7.5,0 -3.5,0 0,-3.5" fill="#a8e6ff"/><polygon points="0,7.5 7.5,0 3.5,0 0,3.5" fill="#0e6fa8"/><polygon points="0,7.5 -7.5,0 -3.5,0 0,3.5" fill="#1585c0"/><polygon points="0,-3.5 3.5,0 0,3.5 -3.5,0" fill="#35b8ee"/></g>
<text x="51.5" y="220.5" font-size="10.7" fill="#fff" text-anchor="start" >sys_rst_n</text>
<text x="167" y="220.5" font-size="10.5" fill="#fff" text-anchor="start" >1</text>
<g class="aa" transform="translate(39.5,234.5)"><polygon points="0,-7.5 7.5,0 0,7.5 -7.5,0" fill="#1a9ad6"/><polygon points="0,-7.5 7.5,0 3.5,0 0,-3.5" fill="#2fb4e8"/><polygon points="0,-7.5 -7.5,0 -3.5,0 0,-3.5" fill="#a8e6ff"/><polygon points="0,7.5 7.5,0 3.5,0 0,3.5" fill="#0e6fa8"/><polygon points="0,7.5 -7.5,0 -3.5,0 0,3.5" fill="#1585c0"/><polygon points="0,-3.5 3.5,0 0,3.5 -3.5,0" fill="#35b8ee"/></g>
<text x="51.5" y="237.5" font-size="10.7" fill="#fff" text-anchor="start" >led</text>
<text x="167" y="237.5" font-size="10.5" fill="#fff" text-anchor="start" >0100</text>
<g class="aa" transform="translate(57.5,251.5)"><polygon points="0,-7.5 7.5,0 0,7.5 -7.5,0" fill="#1a9ad6"/><polygon points="0,-7.5 7.5,0 3.5,0 0,-3.5" fill="#2fb4e8"/><polygon points="0,-7.5 -7.5,0 -3.5,0 0,-3.5" fill="#a8e6ff"/><polygon points="0,7.5 7.5,0 3.5,0 0,3.5" fill="#0e6fa8"/><polygon points="0,7.5 -7.5,0 -3.5,0 0,3.5" fill="#1585c0"/><polygon points="0,-3.5 3.5,0 0,3.5 -3.5,0" fill="#35b8ee"/></g>
<text x="70" y="254.5" font-size="10.7" fill="#fff" text-anchor="start" >[3]</text>
<text x="167" y="254.5" font-size="10.5" fill="#fff" text-anchor="start" >St0</text>
<g class="aa" transform="translate(57.5,268.5)"><polygon points="0,-7.5 7.5,0 0,7.5 -7.5,0" fill="#1a9ad6"/><polygon points="0,-7.5 7.5,0 3.5,0 0,-3.5" fill="#2fb4e8"/><polygon points="0,-7.5 -7.5,0 -3.5,0 0,-3.5" fill="#a8e6ff"/><polygon points="0,7.5 7.5,0 3.5,0 0,3.5" fill="#0e6fa8"/><polygon points="0,7.5 -7.5,0 -3.5,0 0,3.5" fill="#1585c0"/><polygon points="0,-3.5 3.5,0 0,3.5 -3.5,0" fill="#35b8ee"/></g>
<text x="70" y="271.5" font-size="10.7" fill="#fff" text-anchor="start" >[2]</text>
<text x="167" y="271.5" font-size="10.5" fill="#fff" text-anchor="start" >St1</text>
<g class="aa" transform="translate(57.5,285.5)"><polygon points="0,-7.5 7.5,0 0,7.5 -7.5,0" fill="#1a9ad6"/><polygon points="0,-7.5 7.5,0 3.5,0 0,-3.5" fill="#2fb4e8"/><polygon points="0,-7.5 -7.5,0 -3.5,0 0,-3.5" fill="#a8e6ff"/><polygon points="0,7.5 7.5,0 3.5,0 0,3.5" fill="#0e6fa8"/><polygon points="0,7.5 -7.5,0 -3.5,0 0,3.5" fill="#1585c0"/><polygon points="0,-3.5 3.5,0 0,3.5 -3.5,0" fill="#35b8ee"/></g>
<text x="70" y="288.5" font-size="10.7" fill="#fff" text-anchor="start" >[1]</text>
<text x="167" y="288.5" font-size="10.5" fill="#fff" text-anchor="start" >St0</text>
<g class="aa" transform="translate(57.5,302.5)"><polygon points="0,-7.5 7.5,0 0,7.5 -7.5,0" fill="#1a9ad6"/><polygon points="0,-7.5 7.5,0 3.5,0 0,-3.5" fill="#2fb4e8"/><polygon points="0,-7.5 -7.5,0 -3.5,0 0,-3.5" fill="#a8e6ff"/><polygon points="0,7.5 7.5,0 3.5,0 0,3.5" fill="#0e6fa8"/><polygon points="0,7.5 -7.5,0 -3.5,0 0,3.5" fill="#1585c0"/><polygon points="0,-3.5 3.5,0 0,3.5 -3.5,0" fill="#35b8ee"/></g>
<text x="70" y="305.5" font-size="10.7" fill="#fff" text-anchor="start" >[0]</text>
<text x="167" y="305.5" font-size="10.5" fill="#fff" text-anchor="start" >St0</text>
<rect x="17" y="230" width="10" height="10" fill="#8890a8" />
<rect x="18" y="231" width="8" height="8" fill="#fff" />
<rect x="18" y="236" width="8" height="3" fill="#d8dce8" />
<rect x="20" y="234" width="4" height="1" fill="#000" />
<rect x="20" y="235" width="4" height="1" fill="#000" />
<rect x="14" y="311" width="144" height="1" fill="#000" />
<rect x="167" y="311" width="95" height="1" fill="#000" />
<path class="aa" d="M14.5 308 l3 3.5 l-3 3.5 z" fill="none" stroke="#000" stroke-width="0.9"/>
<rect x="280" y="190" width="1" height="209" fill="#8c8c8c" />
<rect x="334" y="190" width="1" height="209" fill="#8c8c8c" />
<rect x="387" y="190" width="1" height="209" fill="#8c8c8c" />
<rect x="441" y="190" width="1" height="209" fill="#8c8c8c" />
<rect x="495" y="190" width="1" height="209" fill="#8c8c8c" />
<rect x="548" y="190" width="1" height="209" fill="#8c8c8c" />
<rect x="602" y="190" width="1" height="209" fill="#8c8c8c" />
<rect x="655" y="190" width="1" height="209" fill="#8c8c8c" />
<rect x="709" y="190" width="1" height="209" fill="#8c8c8c" />
<rect x="762" y="190" width="1" height="209" fill="#8c8c8c" />
<rect x="816" y="190" width="1" height="209" fill="#8c8c8c" />
<rect x="870" y="190" width="1" height="209" fill="#8c8c8c" />
<path d="M272 194.5 L280.5 194.5 L280.5 206.5 L291.5 206.5 L291.5 194.5 L302.5 194.5 L302.5 206.5 L312.5 206.5 L312.5 194.5 L323.5 194.5 L323.5 206.5 L334.5 206.5 L334.5 194.5 L345.5 194.5 L345.5 206.5 L355.5 206.5 L355.5 194.5 L366.5 194.5 L366.5 206.5 L377.5 206.5 L377.5 194.5 L387.5 194.5 L387.5 206.5 L398.5 206.5 L398.5 194.5 L409.5 194.5 L409.5 206.5 L420.5 206.5 L420.5 194.5 L430.5 194.5 L430.5 206.5 L441.5 206.5 L441.5 194.5 L452.5 194.5 L452.5 206.5 L462.5 206.5 L462.5 194.5 L473.5 194.5 L473.5 206.5 L484.5 206.5 L484.5 194.5 L495.5 194.5 L495.5 206.5 L505.5 206.5 L505.5 194.5 L516.5 194.5 L516.5 206.5 L527.5 206.5 L527.5 194.5 L537.5 194.5 L537.5 206.5 L548.5 206.5 L548.5 194.5 L559.5 194.5 L559.5 206.5 L570.5 206.5 L570.5 194.5 L580.5 194.5 L580.5 206.5 L591.5 206.5 L591.5 194.5 L602.5 194.5 L602.5 206.5 L612.5 206.5 L612.5 194.5 L623.5 194.5 L623.5 206.5 L634.5 206.5 L634.5 194.5 L645.5 194.5 L645.5 206.5 L655.5 206.5 L655.5 194.5 L666.5 194.5 L666.5 206.5 L677.5 206.5 L677.5 194.5 L687.5 194.5 L687.5 206.5 L698.5 206.5 L698.5 194.5 L709.5 194.5 L709.5 206.5 L720.5 206.5 L720.5 194.5 L730.5 194.5 L730.5 206.5 L741.5 206.5 L741.5 194.5 L752.5 194.5 L752.5 206.5 L762.5 206.5 L762.5 194.5 L773.5 194.5 L773.5 206.5 L784.5 206.5 L784.5 194.5 L795.5 194.5 L795.5 206.5 L805.5 206.5 L805.5 194.5 L816.5 194.5 L816.5 206.5 L827.5 206.5 L827.5 194.5 L837.5 194.5 L837.5 206.5 L848.5 206.5 L848.5 194.5 L859.5 194.5 L859.5 206.5 L870.5 206.5 L870.5 194.5 L880.5 194.5 L880.5 206.5 L890 206.5" stroke="#00ff00" stroke-width="1" fill="none"/>
<path d="M272 211.5 L890 211.5" stroke="#00ff00" stroke-width="1" fill="none"/>
<rect x="272" y="228" width="105" height="1" fill="#b4f0a8" />
<rect x="272" y="240" width="105" height="1" fill="#b4f0a8" />
<rect x="378" y="228" width="213" height="1" fill="#b4f0a8" />
<rect x="378" y="240" width="213" height="1" fill="#b4f0a8" />
<rect x="592" y="228" width="213" height="1" fill="#b4f0a8" />
<rect x="592" y="240" width="213" height="1" fill="#b4f0a8" />
<rect x="806" y="228" width="84" height="1" fill="#b4f0a8" />
<rect x="806" y="240" width="84" height="1" fill="#b4f0a8" />
<rect x="376" y="228" width="1" height="3" fill="#b4f0a8" />
<rect x="376" y="238" width="1" height="3" fill="#b4f0a8" />
<rect x="378" y="228" width="1" height="3" fill="#b4f0a8" />
<rect x="378" y="238" width="1" height="3" fill="#b4f0a8" />
<rect x="377" y="231" width="1" height="7" fill="#b4f0a8" />
<rect x="590" y="228" width="1" height="3" fill="#b4f0a8" />
<rect x="590" y="238" width="1" height="3" fill="#b4f0a8" />
<rect x="592" y="228" width="1" height="3" fill="#b4f0a8" />
<rect x="592" y="238" width="1" height="3" fill="#b4f0a8" />
<rect x="591" y="231" width="1" height="7" fill="#b4f0a8" />
<rect x="804" y="228" width="1" height="3" fill="#b4f0a8" />
<rect x="804" y="238" width="1" height="3" fill="#b4f0a8" />
<rect x="806" y="228" width="1" height="3" fill="#b4f0a8" />
<rect x="806" y="238" width="1" height="3" fill="#b4f0a8" />
<rect x="805" y="231" width="1" height="7" fill="#b4f0a8" />
<text x="275.5" y="238.5" font-size="10.6" fill="#fff" text-anchor="start" >0001</text>
<text x="382.0" y="238.5" font-size="10.6" fill="#fff" text-anchor="start" >0010</text>
<text x="596.0" y="238.5" font-size="10.6" fill="#fff" text-anchor="start" >0100</text>
<text x="810.0" y="238.5" font-size="10.6" fill="#fff" text-anchor="start" >1000</text>
<path d="M272 257.5 L805.5 257.5 L805.5 245.5 L890 245.5" stroke="#00ff00" stroke-width="1" fill="none"/>
<path d="M272 274.5 L591.5 274.5 L591.5 262.5 L805.5 262.5 L805.5 274.5 L890 274.5" stroke="#00ff00" stroke-width="1" fill="none"/>
<path d="M272 291.5 L377.5 291.5 L377.5 279.5 L591.5 279.5 L591.5 291.5 L890 291.5" stroke="#00ff00" stroke-width="1" fill="none"/>
<path d="M272 296.5 L377.5 296.5 L377.5 308.5 L890 308.5" stroke="#00ff00" stroke-width="1" fill="none"/>
<rect x="377" y="168" width="1" height="255" fill="#ff0000" />
<rect x="377" y="194" width="1" height="13" fill="#ffff00" />
<rect x="377" y="279" width="1" height="13" fill="#ffff00" />
<rect x="377" y="296" width="1" height="13" fill="#ffff00" />
<rect x="590" y="168" width="3" height="273" fill="#ffd000" />
<rect x="592" y="194" width="1" height="13" fill="#ff5000" />
<rect x="592" y="262" width="1" height="13" fill="#ff5000" />
<rect x="592" y="279" width="1" height="13" fill="#ff5000" />
<rect x="3" y="399" width="911" height="2" fill="#fff" />
<rect x="3" y="401" width="159" height="57" fill="#808080" />
<rect x="165" y="401" width="101" height="57" fill="#808080" />
<rect x="268" y="401" width="625" height="56" fill="#000" />
<rect x="896" y="401" width="17" height="57" fill="#808080" />
<rect x="3" y="457" width="911" height="3" fill="#fff" />
<rect x="3" y="457" width="890" height="1" fill="#b4b4b4" />
<rect x="162" y="457" width="1" height="1" fill="#fff" />
<rect x="163" y="457" width="1" height="1" fill="#fff" />
<rect x="164" y="457" width="1" height="1" fill="#fff" />
<rect x="266" y="457" width="1" height="1" fill="#fff" />
<rect x="267" y="457" width="1" height="1" fill="#fff" />
<rect x="52" y="440" width="110" height="17" fill="#fff" />
<rect x="165" y="440" width="101" height="17" fill="#fff" />
<text x="153" y="416" font-size="10.9" fill="#fff" text-anchor="end" >Now</text>
<text x="153" y="435.5" font-size="10.9" fill="#fff" text-anchor="end" >Cursor 1</text>
<text x="153" y="452.5" font-size="10.9" fill="#000" text-anchor="end" >Cursor 2</text>
<text x="255" y="416" font-size="10.9" fill="#fff" text-anchor="end" >1100 ns</text>
<text x="255" y="435.5" font-size="10.9" fill="#fff" text-anchor="end" >290 ns</text>
<text x="255" y="452.5" font-size="10.9" fill="#000" text-anchor="end" >490 ns</text>
<g class="aa"><path d="M13.500 414.500 h9 M13.500 414.500 l2 -1.800 M13.500 414.500 l2 1.800 M22.500 414.500 l-2 -1.800 M22.500 414.500 l-2 1.800" stroke="#4a8af0" stroke-width="1" fill="none"/><path d="M13.500 412 l2.300 -5 l2.300 5 M14.500 410.500 h2.600 M18 407 l2.300 5 l2.300 -5" stroke="#3a3a3a" stroke-width="1.200" fill="none"/><rect x="24.500" y="407.500" width="10" height="9" fill="#dfe9fa" stroke="#5a8ad8" stroke-width="1"/><rect x="25" y="408" width="9" height="2" fill="#5a8ad8"/><path d="M26 412.500 h4 M26 414.500 h3" stroke="#7aa0e0" stroke-width="1"/><path d="M29.500 417 l3.500 -3.500" stroke="#8ab0ea" stroke-width="2.200"/><path d="M32.500 412 l2 -0.500 l-0.500 2.500 z" fill="#b0b0b8"/><circle cx="42" cy="411.700" r="4.700" fill="#56b656" stroke="#9ad89a" stroke-width="0.900"/><path d="M39.700 411.700 h4.600 M42 409.400 v4.600" stroke="#fff" stroke-width="1.700"/></g>
<rect x="12" y="423" width="16" height="17" fill="#ff0000" />
<g class="aa" transform="translate(14,424)"><path d="M3 7 v-2.500 a3 3 0 0 1 6 0 v2.500" stroke="#d8d8e0" stroke-width="1.300" fill="none"/><rect x="1" y="6.500" width="10" height="7" fill="#f2bc38" stroke="#c89020" stroke-width="0.800"/><rect x="2" y="7.500" width="8" height="2" fill="#ffd860"/><rect x="5" y="9" width="2" height="3" fill="#805000"/></g>
<g class="aa" transform="translate(28,424.5)"><path d="M1.200 11.800 L6.800 5.800" stroke="#5a92e8" stroke-width="2.800" stroke-linecap="round"/><path d="M6.300 6.300 L8.500 4" stroke="#d0d4dc" stroke-width="2"/><path d="M8 1 a2.600 2.600 0 0 0 -0.500 4.500 a2.600 2.600 0 0 0 4 -1.500 l-2 0.700 l-1.300 -1.300 l0.700 -2 z" fill="#dcdfe6"/></g>
<g class="aa" transform="translate(41,426)"><circle cx="5" cy="5" r="4.700" fill="#e25a5a" stroke="#f0a0a0" stroke-width="0.900"/><rect x="2.500" y="4.100" width="5" height="1.800" fill="#fff"/></g>
<g class="aa" transform="translate(15,441.5)"><path d="M2 7 v-3 a3 3 0 0 1 6 0 v0.500" stroke="#d8d8e0" stroke-width="1.300" fill="none"/><rect x="1" y="6.500" width="10" height="7" fill="#f2bc38" stroke="#c89020" stroke-width="0.800"/><rect x="2" y="7.500" width="8" height="2" fill="#ffd860"/><rect x="5" y="9" width="2" height="3" fill="#805000"/></g>
<g class="aa" transform="translate(28,442)"><path d="M1.200 11.800 L6.800 5.800" stroke="#5a92e8" stroke-width="2.800" stroke-linecap="round"/><path d="M6.300 6.300 L8.500 4" stroke="#d0d4dc" stroke-width="2"/><path d="M8 1 a2.600 2.600 0 0 0 -0.500 4.500 a2.600 2.600 0 0 0 4 -1.500 l-2 0.700 l-1.300 -1.300 l0.700 -2 z" fill="#dcdfe6"/></g>
<g class="aa" transform="translate(41,443)"><circle cx="5" cy="5" r="4.700" fill="#e25a5a" stroke="#f0a0a0" stroke-width="0.900"/><rect x="2.500" y="4.100" width="5" height="1.800" fill="#fff"/></g>
<rect x="275" y="404" width="1" height="4" fill="#00ff00" />
<rect x="280" y="401" width="1" height="7" fill="#00ff00" />
<rect x="286" y="404" width="1" height="4" fill="#00ff00" />
<rect x="291" y="404" width="1" height="4" fill="#00ff00" />
<rect x="296" y="404" width="1" height="4" fill="#00ff00" />
<rect x="302" y="404" width="1" height="4" fill="#00ff00" />
<rect x="307" y="404" width="1" height="4" fill="#00ff00" />
<rect x="312" y="404" width="1" height="4" fill="#00ff00" />
<rect x="318" y="404" width="1" height="4" fill="#00ff00" />
<rect x="323" y="404" width="1" height="4" fill="#00ff00" />
<rect x="329" y="404" width="1" height="4" fill="#00ff00" />
<rect x="334" y="401" width="1" height="7" fill="#00ff00" />
<rect x="339" y="404" width="1" height="4" fill="#00ff00" />
<rect x="345" y="404" width="1" height="4" fill="#00ff00" />
<rect x="350" y="404" width="1" height="4" fill="#00ff00" />
<rect x="355" y="404" width="1" height="4" fill="#00ff00" />
<rect x="361" y="404" width="1" height="4" fill="#00ff00" />
<rect x="366" y="404" width="1" height="4" fill="#00ff00" />
<rect x="371" y="404" width="1" height="4" fill="#00ff00" />
<rect x="377" y="404" width="1" height="4" fill="#00ff00" />
<rect x="382" y="404" width="1" height="4" fill="#00ff00" />
<rect x="387" y="401" width="1" height="7" fill="#00ff00" />
<rect x="393" y="404" width="1" height="4" fill="#00ff00" />
<rect x="398" y="404" width="1" height="4" fill="#00ff00" />
<rect x="404" y="404" width="1" height="4" fill="#00ff00" />
<rect x="409" y="404" width="1" height="4" fill="#00ff00" />
<rect x="414" y="404" width="1" height="4" fill="#00ff00" />
<rect x="420" y="404" width="1" height="4" fill="#00ff00" />
<rect x="425" y="404" width="1" height="4" fill="#00ff00" />
<rect x="430" y="404" width="1" height="4" fill="#00ff00" />
<rect x="436" y="404" width="1" height="4" fill="#00ff00" />
<rect x="441" y="401" width="1" height="7" fill="#00ff00" />
<rect x="446" y="404" width="1" height="4" fill="#00ff00" />
<rect x="452" y="404" width="1" height="4" fill="#00ff00" />
<rect x="457" y="404" width="1" height="4" fill="#00ff00" />
<rect x="462" y="404" width="1" height="4" fill="#00ff00" />
<rect x="468" y="404" width="1" height="4" fill="#00ff00" />
<rect x="473" y="404" width="1" height="4" fill="#00ff00" />
<rect x="479" y="404" width="1" height="4" fill="#00ff00" />
<rect x="484" y="404" width="1" height="4" fill="#00ff00" />
<rect x="489" y="404" width="1" height="4" fill="#00ff00" />
<rect x="495" y="401" width="1" height="7" fill="#00ff00" />
<rect x="500" y="404" width="1" height="4" fill="#00ff00" />
<rect x="505" y="404" width="1" height="4" fill="#00ff00" />
<rect x="511" y="404" width="1" height="4" fill="#00ff00" />
<rect x="516" y="404" width="1" height="4" fill="#00ff00" />
<rect x="521" y="404" width="1" height="4" fill="#00ff00" />
<rect x="527" y="404" width="1" height="4" fill="#00ff00" />
<rect x="532" y="404" width="1" height="4" fill="#00ff00" />
<rect x="537" y="404" width="1" height="4" fill="#00ff00" />
<rect x="543" y="404" width="1" height="4" fill="#00ff00" />
<rect x="548" y="401" width="1" height="7" fill="#00ff00" />
<rect x="554" y="404" width="1" height="4" fill="#00ff00" />
<rect x="559" y="404" width="1" height="4" fill="#00ff00" />
<rect x="564" y="404" width="1" height="4" fill="#00ff00" />
<rect x="570" y="404" width="1" height="4" fill="#00ff00" />
<rect x="575" y="404" width="1" height="4" fill="#00ff00" />
<rect x="580" y="404" width="1" height="4" fill="#00ff00" />
<rect x="586" y="404" width="1" height="4" fill="#00ff00" />
<rect x="591" y="404" width="1" height="4" fill="#00ff00" />
<rect x="596" y="404" width="1" height="4" fill="#00ff00" />
<rect x="602" y="401" width="1" height="7" fill="#00ff00" />
<rect x="607" y="404" width="1" height="4" fill="#00ff00" />
<rect x="612" y="404" width="1" height="4" fill="#00ff00" />
<rect x="618" y="404" width="1" height="4" fill="#00ff00" />
<rect x="623" y="404" width="1" height="4" fill="#00ff00" />
<rect x="629" y="404" width="1" height="4" fill="#00ff00" />
<rect x="634" y="404" width="1" height="4" fill="#00ff00" />
<rect x="639" y="404" width="1" height="4" fill="#00ff00" />
<rect x="645" y="404" width="1" height="4" fill="#00ff00" />
<rect x="650" y="404" width="1" height="4" fill="#00ff00" />
<rect x="655" y="401" width="1" height="7" fill="#00ff00" />
<rect x="661" y="404" width="1" height="4" fill="#00ff00" />
<rect x="666" y="404" width="1" height="4" fill="#00ff00" />
<rect x="671" y="404" width="1" height="4" fill="#00ff00" />
<rect x="677" y="404" width="1" height="4" fill="#00ff00" />
<rect x="682" y="404" width="1" height="4" fill="#00ff00" />
<rect x="687" y="404" width="1" height="4" fill="#00ff00" />
<rect x="693" y="404" width="1" height="4" fill="#00ff00" />
<rect x="698" y="404" width="1" height="4" fill="#00ff00" />
<rect x="704" y="404" width="1" height="4" fill="#00ff00" />
<rect x="709" y="401" width="1" height="7" fill="#00ff00" />
<rect x="714" y="404" width="1" height="4" fill="#00ff00" />
<rect x="720" y="404" width="1" height="4" fill="#00ff00" />
<rect x="725" y="404" width="1" height="4" fill="#00ff00" />
<rect x="730" y="404" width="1" height="4" fill="#00ff00" />
<rect x="736" y="404" width="1" height="4" fill="#00ff00" />
<rect x="741" y="404" width="1" height="4" fill="#00ff00" />
<rect x="746" y="404" width="1" height="4" fill="#00ff00" />
<rect x="752" y="404" width="1" height="4" fill="#00ff00" />
<rect x="757" y="404" width="1" height="4" fill="#00ff00" />
<rect x="762" y="401" width="1" height="7" fill="#00ff00" />
<rect x="768" y="404" width="1" height="4" fill="#00ff00" />
<rect x="773" y="404" width="1" height="4" fill="#00ff00" />
<rect x="779" y="404" width="1" height="4" fill="#00ff00" />
<rect x="784" y="404" width="1" height="4" fill="#00ff00" />
<rect x="789" y="404" width="1" height="4" fill="#00ff00" />
<rect x="795" y="404" width="1" height="4" fill="#00ff00" />
<rect x="800" y="404" width="1" height="4" fill="#00ff00" />
<rect x="805" y="404" width="1" height="4" fill="#00ff00" />
<rect x="811" y="404" width="1" height="4" fill="#00ff00" />
<rect x="816" y="401" width="1" height="7" fill="#00ff00" />
<rect x="821" y="404" width="1" height="4" fill="#00ff00" />
<rect x="827" y="404" width="1" height="4" fill="#00ff00" />
<rect x="832" y="404" width="1" height="4" fill="#00ff00" />
<rect x="837" y="404" width="1" height="4" fill="#00ff00" />
<rect x="843" y="404" width="1" height="4" fill="#00ff00" />
<rect x="848" y="404" width="1" height="4" fill="#00ff00" />
<rect x="854" y="404" width="1" height="4" fill="#00ff00" />
<rect x="859" y="404" width="1" height="4" fill="#00ff00" />
<rect x="864" y="404" width="1" height="4" fill="#00ff00" />
<rect x="870" y="401" width="1" height="7" fill="#00ff00" />
<rect x="875" y="404" width="1" height="4" fill="#00ff00" />
<rect x="880" y="404" width="1" height="4" fill="#00ff00" />
<rect x="886" y="404" width="1" height="4" fill="#00ff00" />
<clipPath id="tlc"><rect x="271" y="401" width="621" height="60"/></clipPath>
<g clip-path="url(#tlc)">
<text x="280" y="421" font-size="10.6" fill="#00ff00" text-anchor="middle" >200 ns</text>
<text x="387" y="421" font-size="10.6" fill="#00ff00" text-anchor="middle" >300 ns</text>
<text x="494" y="421" font-size="10.6" fill="#00ff00" text-anchor="middle" >400 ns</text>
<text x="601" y="421" font-size="10.6" fill="#00ff00" text-anchor="middle" >500 ns</text>
<text x="708" y="421" font-size="10.6" fill="#00ff00" text-anchor="middle" >600 ns</text>
<text x="816" y="421" font-size="10.6" fill="#00ff00" text-anchor="middle" >700 ns</text>
</g>
<rect x="271" y="423" width="619" height="1" fill="#8c8c8c" />
<rect x="271" y="440" width="619" height="1" fill="#8c8c8c" />
<rect x="396" y="432" width="194" height="1" fill="#fff" />
<rect x="476" y="426" width="34" height="14" fill="#000" />
<text x="493" y="438" font-size="10.6" fill="#fff" text-anchor="middle" >200 ns</text>
<rect x="359" y="424" width="37" height="16" fill="#ff0000" />
<rect x="360" y="425" width="35" height="14" fill="#000" />
<text x="377.5" y="437" font-size="10.6" fill="#ff0000" text-anchor="middle" >290 ns</text>
<rect x="573" y="441" width="37" height="16" fill="#ffd000" />
<rect x="574" y="442" width="35" height="14" fill="#000" />
<text x="591.5" y="453.5" font-size="10.6" fill="#ffd000" text-anchor="middle" >490 ns</text>
<rect x="377" y="401" width="1" height="22" fill="#ff0000" />
<rect x="377" y="404" width="1" height="4" fill="#ffff00" />
<rect x="590" y="401" width="3" height="40" fill="#ffd000" />
<rect x="3" y="460" width="159" height="18" fill="#808080" />
<rect x="165" y="460" width="101" height="18" fill="#808080" />
<rect x="896" y="460" width="17" height="18" fill="#808080" />
<rect x="268" y="460" width="625" height="18" fill="#fff" />
<rect x="268" y="460" width="625" height="1" fill="#a0a0a0" />
<rect x="268" y="478" width="625" height="1" fill="#a0a0a0" />
<rect x="12" y="461" width="150" height="16" fill="#f4f4f4" />
<rect x="12" y="461" width="16" height="16" fill="#f0f0f0" />
<rect x="12" y="461" width="16" height="1" fill="#fff" />
<rect x="12" y="461" width="1" height="16" fill="#fff" />
<rect x="12" y="476" width="16" height="1" fill="#696969" />
<rect x="27" y="461" width="1" height="16" fill="#696969" />
<rect x="13" y="475" width="14" height="1" fill="#a0a0a0" />
<rect x="26" y="462" width="1" height="14" fill="#a0a0a0" />
<rect x="146" y="461" width="16" height="16" fill="#f0f0f0" />
<rect x="146" y="461" width="16" height="1" fill="#fff" />
<rect x="146" y="461" width="1" height="16" fill="#fff" />
<rect x="146" y="476" width="16" height="1" fill="#696969" />
<rect x="161" y="461" width="1" height="16" fill="#696969" />
<rect x="147" y="475" width="14" height="1" fill="#a0a0a0" />
<rect x="160" y="462" width="1" height="14" fill="#a0a0a0" />
<rect x="17" y="469" width="1" height="1" fill="#909090" />
<rect x="18" y="468" width="1" height="3" fill="#909090" />
<rect x="19" y="467" width="1" height="5" fill="#909090" />
<rect x="20" y="466" width="1" height="7" fill="#909090" />
<rect x="156" y="469" width="1" height="1" fill="#909090" />
<rect x="155" y="468" width="1" height="3" fill="#909090" />
<rect x="154" y="467" width="1" height="5" fill="#909090" />
<rect x="153" y="466" width="1" height="7" fill="#909090" />
<rect x="166" y="461" width="99" height="16" fill="#f4f4f4" />
<rect x="166" y="461" width="15" height="16" fill="#f0f0f0" />
<rect x="166" y="461" width="15" height="1" fill="#fff" />
<rect x="166" y="461" width="1" height="16" fill="#fff" />
<rect x="166" y="476" width="15" height="1" fill="#696969" />
<rect x="180" y="461" width="1" height="16" fill="#696969" />
<rect x="167" y="475" width="13" height="1" fill="#a0a0a0" />
<rect x="179" y="462" width="1" height="14" fill="#a0a0a0" />
<rect x="249" y="461" width="16" height="16" fill="#f0f0f0" />
<rect x="249" y="461" width="16" height="1" fill="#fff" />
<rect x="249" y="461" width="1" height="16" fill="#fff" />
<rect x="249" y="476" width="16" height="1" fill="#696969" />
<rect x="264" y="461" width="1" height="16" fill="#696969" />
<rect x="250" y="475" width="14" height="1" fill="#a0a0a0" />
<rect x="263" y="462" width="1" height="14" fill="#a0a0a0" />
<rect x="171" y="469" width="1" height="1" fill="#909090" />
<rect x="172" y="468" width="1" height="3" fill="#909090" />
<rect x="173" y="467" width="1" height="5" fill="#909090" />
<rect x="174" y="466" width="1" height="7" fill="#909090" />
<rect x="259" y="469" width="1" height="1" fill="#909090" />
<rect x="258" y="468" width="1" height="3" fill="#909090" />
<rect x="257" y="467" width="1" height="5" fill="#909090" />
<rect x="256" y="466" width="1" height="7" fill="#909090" />
<rect x="269" y="461" width="623" height="16" fill="#c8c8c8" />
<rect x="269" y="461" width="15" height="16" fill="#f0f0f0" />
<rect x="269" y="461" width="15" height="1" fill="#fff" />
<rect x="269" y="461" width="1" height="16" fill="#fff" />
<rect x="269" y="476" width="15" height="1" fill="#696969" />
<rect x="283" y="461" width="1" height="16" fill="#696969" />
<rect x="270" y="475" width="13" height="1" fill="#a0a0a0" />
<rect x="282" y="462" width="1" height="14" fill="#a0a0a0" />
<rect x="877" y="461" width="15" height="16" fill="#f0f0f0" />
<rect x="877" y="461" width="15" height="1" fill="#fff" />
<rect x="877" y="461" width="1" height="16" fill="#fff" />
<rect x="877" y="476" width="15" height="1" fill="#696969" />
<rect x="891" y="461" width="1" height="16" fill="#696969" />
<rect x="878" y="475" width="13" height="1" fill="#a0a0a0" />
<rect x="890" y="462" width="1" height="14" fill="#a0a0a0" />
<rect x="274" y="469" width="1" height="1" fill="#000" />
<rect x="275" y="468" width="1" height="3" fill="#000" />
<rect x="276" y="467" width="1" height="5" fill="#000" />
<rect x="277" y="466" width="1" height="7" fill="#000" />
<rect x="887" y="469" width="1" height="1" fill="#000" />
<rect x="886" y="468" width="1" height="3" fill="#000" />
<rect x="885" y="467" width="1" height="5" fill="#000" />
<rect x="884" y="466" width="1" height="7" fill="#000" />
<rect x="384" y="461" width="303" height="16" fill="#f0f0f0" />
<rect x="384" y="461" width="303" height="1" fill="#fff" />
<rect x="384" y="461" width="1" height="16" fill="#fff" />
<rect x="384" y="476" width="303" height="1" fill="#808080" />
<rect x="686" y="461" width="1" height="16" fill="#808080" />
<rect x="385" y="475" width="301" height="1" fill="#b0b0b0" />
<rect x="437" y="463" width="1" height="12" fill="#ff0000" />
<rect x="541" y="463" width="1" height="12" fill="#ffd000" />
<rect x="0" y="479" width="914" height="13" fill="#f0f0f0" />
<rect x="2" y="481" width="169" height="11" fill="#f0f0f0" />
<rect x="2" y="481" width="169" height="1" fill="#a0a0a0" />
<rect x="2" y="481" width="1" height="11" fill="#a0a0a0" />
<rect x="170" y="481" width="1" height="11" fill="#fff" />
<rect x="172" y="481" width="726" height="11" fill="#f0f0f0" />
<rect x="172" y="481" width="726" height="1" fill="#a0a0a0" />
<rect x="172" y="481" width="1" height="11" fill="#a0a0a0" />
<rect x="897" y="481" width="1" height="11" fill="#fff" />
<text x="10" y="495" font-size="10.9" fill="#000" text-anchor="start" >191062 ps to 768562 ps</text>
<path class="aa" d="M912 486 l-6 6 M912 489 l-3 3" stroke="#a0a0a0" stroke-width="1"/>
</svg>
</body></html>
